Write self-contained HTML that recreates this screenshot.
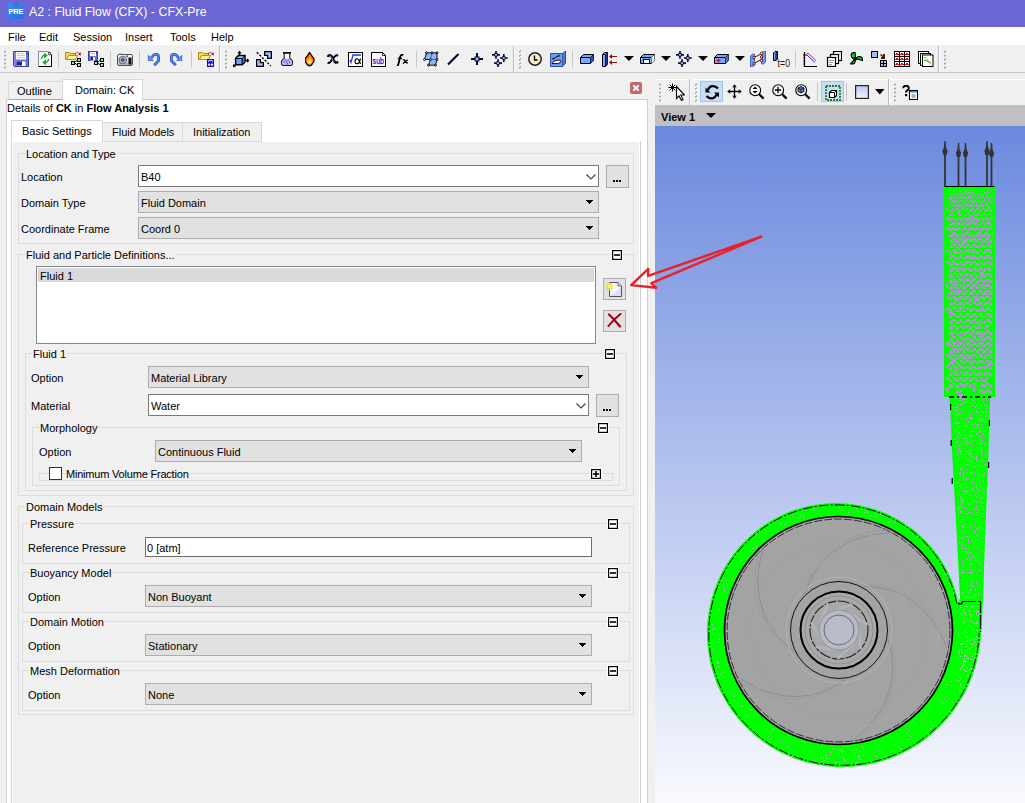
<!DOCTYPE html>
<html><head><meta charset="utf-8">
<style>
*{box-sizing:border-box;margin:0;padding:0}
html,body{width:1025px;height:803px;overflow:hidden;background:#f0f0f0;font-family:"Liberation Sans",sans-serif;font-size:11px;color:#000;position:relative}
.a{position:absolute}
.t{position:absolute;white-space:nowrap;line-height:14px}
#title{left:0;top:0;width:1025px;height:27px;background:#6b66d3}
#menu{left:0;top:27px;width:1025px;height:18px;background:#fff}
#tb{left:0;top:45px;width:1025px;height:28px;background:#f0f0f0;border-bottom:1px solid #c8c8c8}
.gb{position:absolute;border:1px solid #dcdcdc}
.gl{position:absolute;background:#f0f0f0;padding:0 1px 0 1px;white-space:nowrap;line-height:14px}
.cb{position:absolute;background:#e1e1e1;border:1px solid #adadad;height:22px;padding-left:2px;line-height:22px;white-space:nowrap}
.in{position:absolute;background:#fff;border:1px solid #7a7a7a;height:22px;padding-left:2px;line-height:22px;white-space:nowrap}
.dd{position:absolute;width:0;height:0;border-left:5px solid transparent;border-right:5px solid transparent;border-top:5px solid #000}
.btn{position:absolute;background:#e1e1e1;border:1px solid #adadad}
.mi{position:absolute;width:10px;height:10px;border:1px solid #000;background:#fff}
.mi:after{content:"";position:absolute;left:1px;top:3px;width:6px;height:2px;background:#000}
</style></head><body>
<div id="title" class="a">
  <svg class="a" style="left:8px;top:3px" width="16" height="16" viewBox="0 0 16 16"><defs><linearGradient id="pg" x1="0" y1="0" x2="1" y2="1"><stop offset="0" stop-color="#3c8ef0"/><stop offset="1" stop-color="#2a6ee0"/></linearGradient></defs><rect width="16" height="16" fill="url(#pg)"/><path d="M5 0L8 6L11 0Z" fill="#2e6ad8" opacity="0.6"/><text x="0.6" y="11" font-family="Liberation Sans" font-weight="bold" font-size="7.6" fill="#fff" letter-spacing="-0.3">PRE</text></svg>
  <div class="t" style="left:29px;top:4px;font-size:12.4px;color:#fff;line-height:16px">A2 : Fluid Flow (CFX) - CFX-Pre</div>
</div>
<div id="menu" class="a">
  <div class="t" style="left:8px;top:3px">File</div>
  <div class="t" style="left:39px;top:3px">Edit</div>
  <div class="t" style="left:73px;top:3px">Session</div>
  <div class="t" style="left:125px;top:3px">Insert</div>
  <div class="t" style="left:170px;top:3px">Tools</div>
  <div class="t" style="left:211px;top:3px">Help</div>
</div>
<div id="tb" class="a"></div>
<svg class="a" style="left:3px;top:50px" width="3" height="3" shape-rendering="crispEdges"><rect x="2" y="0" width="1" height="1" fill="#c4c4c4"/><rect x="1" y="1" width="2" height="1" fill="#a4a4a4"/><rect x="1" y="2" width="1" height="1" fill="#b8b8b8"/><rect x="0" y="2" width="1" height="1" fill="#fafafa"/></svg><svg class="a" style="left:3px;top:54px" width="3" height="3" shape-rendering="crispEdges"><rect x="2" y="0" width="1" height="1" fill="#c4c4c4"/><rect x="1" y="1" width="2" height="1" fill="#a4a4a4"/><rect x="1" y="2" width="1" height="1" fill="#b8b8b8"/><rect x="0" y="2" width="1" height="1" fill="#fafafa"/></svg><svg class="a" style="left:3px;top:58px" width="3" height="3" shape-rendering="crispEdges"><rect x="2" y="0" width="1" height="1" fill="#c4c4c4"/><rect x="1" y="1" width="2" height="1" fill="#a4a4a4"/><rect x="1" y="2" width="1" height="1" fill="#b8b8b8"/><rect x="0" y="2" width="1" height="1" fill="#fafafa"/></svg><svg class="a" style="left:3px;top:62px" width="3" height="3" shape-rendering="crispEdges"><rect x="2" y="0" width="1" height="1" fill="#c4c4c4"/><rect x="1" y="1" width="2" height="1" fill="#a4a4a4"/><rect x="1" y="2" width="1" height="1" fill="#b8b8b8"/><rect x="0" y="2" width="1" height="1" fill="#fafafa"/></svg><svg class="a" style="left:3px;top:66px" width="3" height="3" shape-rendering="crispEdges"><rect x="2" y="0" width="1" height="1" fill="#c4c4c4"/><rect x="1" y="1" width="2" height="1" fill="#a4a4a4"/><rect x="1" y="2" width="1" height="1" fill="#b8b8b8"/><rect x="0" y="2" width="1" height="1" fill="#fafafa"/></svg>
<svg class="a" style="left:13px;top:51px" width="16" height="16" viewBox="0 0 16 16"><path d="M0.5 0.5H15.5V15.5H1.5L0.5 14.5Z" fill="#6a70d6" stroke="#3442b0" stroke-width="1"/><rect x="1" y="1" width="1.5" height="14" fill="#8a8ee6"/><rect x="3" y="1" width="10" height="7.5" fill="#fff"/><path d="M4 2.5H12M4 4.5H12M4 6.5H12" stroke="#c8c8c8" stroke-width="1" shape-rendering="crispEdges"/><rect x="4" y="10.5" width="8.5" height="4.5" fill="#fff"/><rect x="4" y="10.5" width="5" height="4" fill="#1c2870"/><rect x="13.5" y="1.5" width="1" height="2" fill="#1c2870"/></svg>
<svg class="a" style="left:38px;top:51px" width="14" height="16" viewBox="0 0 14 16"><path d="M0.5 0.5H10L13.5 4V15.5H0.5Z" fill="#f6f6f6" stroke="#000" stroke-width="1"/><path d="M0.5 15.5V0.5H10" stroke="#909090" fill="none" stroke-width="1"/><circle cx="11.6" cy="2.6" r="1.2" fill="#fff" stroke="#000" stroke-width="0.8"/><path d="M3.8 8V6.8Q4.2 4.6 6.5 4.4" stroke="#0e8a80" stroke-width="1.2" fill="none"/><path d="M6 1.8L9.8 4.6L6 7.6Z" fill="#18a818"/><path d="M10.4 8V9.2Q10 11.4 7.6 11.6" stroke="#0e8a80" stroke-width="1.2" fill="none"/><path d="M8 8.6L4.2 11.4L8 14.2Z" fill="#18a818"/></svg>
<div class="a" style="left:58px;top:51px;width:1px;height:17px;background:#c8c8c8"></div>
<svg class="a" style="left:65px;top:51px" width="16" height="16" viewBox="0 0 16 16"><path d="M0.5 1.5H4.5L5.5 2.5H10.5V8.5H0.5Z" fill="#f3d85a" stroke="#b58a10"/><path d="M1.5 8.5L3.5 4.5H12.5L10.5 8.5Z" fill="#fff3a0" stroke="#b58a10"/><path d="M10.3 3Q11.6 0.4 13.8 1.6" stroke="#c41010" stroke-width="1.1" fill="none" stroke-dasharray="1.3 0.7"/><path d="M12.6 3L15.8 1.2L15.6 4.8Z" fill="#b00c0c"/><g transform="translate(0 0)" shape-rendering="crispEdges"><path d="M9.5 11.5L12.5 9M9.5 12L12.5 14" stroke="#fff" stroke-width="2.2" fill="none" shape-rendering="auto"/><path d="M9.5 11.5L12.5 9M9.5 12L12.5 14" stroke="#000" stroke-width="1" fill="none" shape-rendering="auto"/><rect x="6" y="10" width="4" height="4" fill="#000"/><rect x="7" y="11" width="2" height="2" fill="#86f086"/><rect x="12" y="7" width="4" height="4" fill="#000"/><rect x="13" y="8" width="2" height="2" fill="#86f086"/><rect x="12" y="12" width="4" height="4" fill="#000"/><rect x="13" y="13" width="2" height="2" fill="#86f086"/></g></svg>
<svg class="a" style="left:88px;top:51px" width="16" height="16" viewBox="0 0 16 16"><rect x="0.5" y="0.5" width="9" height="9" fill="#6a70d6" stroke="#3442b0"/><rect x="2" y="1" width="6" height="4" fill="#fff"/><path d="M3 2.5H7" stroke="#bbb" stroke-width="1"/><rect x="2.5" y="6" width="4.5" height="3.5" fill="#fff"/><rect x="2.5" y="6" width="2.5" height="3" fill="#1c2870"/><rect x="8" y="1.5" width="1" height="1.5" fill="#1c2870"/><g transform="translate(0 0)" shape-rendering="crispEdges"><path d="M9.5 11.5L12.5 9M9.5 12L12.5 14" stroke="#fff" stroke-width="2.2" fill="none" shape-rendering="auto"/><path d="M9.5 11.5L12.5 9M9.5 12L12.5 14" stroke="#000" stroke-width="1" fill="none" shape-rendering="auto"/><rect x="6" y="10" width="4" height="4" fill="#000"/><rect x="7" y="11" width="2" height="2" fill="#86f086"/><rect x="12" y="7" width="4" height="4" fill="#000"/><rect x="13" y="8" width="2" height="2" fill="#86f086"/><rect x="12" y="12" width="4" height="4" fill="#000"/><rect x="13" y="13" width="2" height="2" fill="#86f086"/></g></svg>
<div class="a" style="left:110px;top:51px;width:1px;height:17px;background:#c8c8c8"></div>
<svg class="a" style="left:117px;top:53px" width="16" height="13" viewBox="0 0 16 13"><rect x="0.5" y="1.5" width="15" height="11" rx="1.5" fill="#d8d8d8" stroke="#505050"/><rect x="1.2" y="2.2" width="13.6" height="2.5" fill="#f4f4f4"/><path d="M1.2 10H14.8V11.8H1.2Z" fill="#b0b0b0"/><circle cx="5.8" cy="7" r="3.8" fill="#c4c4c4" stroke="#606060" stroke-width="0.9"/><circle cx="5.8" cy="7" r="2.4" fill="#e8e8e8" stroke="#808080" stroke-width="0.6"/><circle cx="5.8" cy="7" r="1.4" fill="#2a6ad8" stroke="#102040" stroke-width="0.6"/><rect x="11.5" y="4.5" width="3" height="7" fill="#141414"/><circle cx="10.2" cy="3.2" r="0.9" fill="#1a4ac0"/><rect x="2" y="0.5" width="3" height="1.2" fill="#808080"/></svg>
<div class="a" style="left:139px;top:51px;width:1px;height:17px;background:#c8c8c8"></div>
<svg class="a" style="left:147px;top:53px" width="13" height="13" viewBox="0 0 13 13"><path d="M4.2 5.2L6.6 2.2Q7.6 1.4 9 1.4Q11.6 1.4 11.6 4.4V7.8L7.2 12.2" stroke="#1e4ec8" stroke-width="2.8" fill="none" stroke-linejoin="round"/><path d="M4.2 5.2L6.6 2.2Q7.6 1.4 9 1.4Q11.6 1.4 11.6 4.4V7.8L7.2 12.2" stroke="#5a90f0" stroke-width="1.2" fill="none" stroke-linejoin="round"/><path d="M0.8 1.6V7.9H7Z" fill="#3a72e6"/><path d="M1.6 4V7.2H4.8Z" fill="#6aa2f4"/></svg>
<svg class="a" style="left:170px;top:53px" width="13" height="13" viewBox="0 0 13 13"><g transform="translate(13 0) scale(-1 1)"><path d="M4.2 5.2L6.6 2.2Q7.6 1.4 9 1.4Q11.6 1.4 11.6 4.4V7.8L7.2 12.2" stroke="#1e4ec8" stroke-width="2.8" fill="none" stroke-linejoin="round"/><path d="M4.2 5.2L6.6 2.2Q7.6 1.4 9 1.4Q11.6 1.4 11.6 4.4V7.8L7.2 12.2" stroke="#5a90f0" stroke-width="1.2" fill="none" stroke-linejoin="round"/><path d="M0.8 1.6V7.9H7Z" fill="#3a72e6"/><path d="M1.6 4V7.2H4.8Z" fill="#6aa2f4"/></g></svg>
<div class="a" style="left:191px;top:51px;width:1px;height:17px;background:#c8c8c8"></div>
<svg class="a" style="left:198px;top:51px" width="16" height="16" viewBox="0 0 16 16"><path d="M0.5 1.5H4.5L5.5 2.5H10.5V8.5H0.5Z" fill="#f3d85a" stroke="#b58a10"/><path d="M1.5 8.5L3.5 4.5H12.5L10.5 8.5Z" fill="#fff3a0" stroke="#b58a10"/><path d="M10.3 3Q11.6 0.4 13.8 1.6" stroke="#c41010" stroke-width="1.1" fill="none" stroke-dasharray="1.3 0.7"/><path d="M12.6 3L15.8 1.2L15.6 4.8Z" fill="#b00c0c"/><rect x="9" y="8" width="7" height="8" fill="#0808c8"/><rect x="10.2" y="12.6" width="2" height="2" fill="#fff"/><rect x="13" y="12.6" width="2" height="2" fill="#fff"/><path d="M10.6 11.2V10.2Q10.6 9.2 11.6 9.2Q12.5 9.2 12.5 10.2Q12.5 9.2 13.4 9.2Q14.4 9.2 14.4 10.2V11.2" stroke="#fff" stroke-width="0.9" fill="none"/></svg>
<div class="a" style="left:219px;top:46px;width:1px;height:26px;background:#b9b9b9"></div><div class="a" style="left:220px;top:46px;width:1px;height:26px;background:#fff"></div>
<svg class="a" style="left:224px;top:50px" width="3" height="3" shape-rendering="crispEdges"><rect x="2" y="0" width="1" height="1" fill="#c4c4c4"/><rect x="1" y="1" width="2" height="1" fill="#a4a4a4"/><rect x="1" y="2" width="1" height="1" fill="#b8b8b8"/><rect x="0" y="2" width="1" height="1" fill="#fafafa"/></svg><svg class="a" style="left:224px;top:54px" width="3" height="3" shape-rendering="crispEdges"><rect x="2" y="0" width="1" height="1" fill="#c4c4c4"/><rect x="1" y="1" width="2" height="1" fill="#a4a4a4"/><rect x="1" y="2" width="1" height="1" fill="#b8b8b8"/><rect x="0" y="2" width="1" height="1" fill="#fafafa"/></svg><svg class="a" style="left:224px;top:58px" width="3" height="3" shape-rendering="crispEdges"><rect x="2" y="0" width="1" height="1" fill="#c4c4c4"/><rect x="1" y="1" width="2" height="1" fill="#a4a4a4"/><rect x="1" y="2" width="1" height="1" fill="#b8b8b8"/><rect x="0" y="2" width="1" height="1" fill="#fafafa"/></svg><svg class="a" style="left:224px;top:62px" width="3" height="3" shape-rendering="crispEdges"><rect x="2" y="0" width="1" height="1" fill="#c4c4c4"/><rect x="1" y="1" width="2" height="1" fill="#a4a4a4"/><rect x="1" y="2" width="1" height="1" fill="#b8b8b8"/><rect x="0" y="2" width="1" height="1" fill="#fafafa"/></svg><svg class="a" style="left:224px;top:66px" width="3" height="3" shape-rendering="crispEdges"><rect x="2" y="0" width="1" height="1" fill="#c4c4c4"/><rect x="1" y="1" width="2" height="1" fill="#a4a4a4"/><rect x="1" y="2" width="1" height="1" fill="#b8b8b8"/><rect x="0" y="2" width="1" height="1" fill="#fafafa"/></svg>
<svg class="a" style="left:233px;top:51px" width="16" height="16" viewBox="0 0 16 16"><path d="M2.6 7.4L5.4 4.6H12V11L9.2 13.8H2.6Z" fill="#fff" stroke="#fff" stroke-width="2.4" stroke-linejoin="round"/><path d="M2.6 7.4L5.4 4.6H12V11L9.2 13.8H2.6Z" fill="#6b9cf6" stroke="#000" stroke-width="1.5"/><path d="M2.6 7.4H9.2V13.8M9.2 7.4L12 4.6" stroke="#000" stroke-width="1.2" fill="none"/><path d="M3.5 6.9L5.8 5.4H11L9 6.9Z" fill="#9cc0fa"/><path d="M9.8 7.6L11.3 6V10.6L9.8 12.2Z" fill="#3a72e0"/><path d="M6.5 0V4.5M4.8 1.8H8.2M12 9.5H16M14.6 7.8V11.2M3 13L1.5 14.5" stroke="#000" stroke-width="1.3" fill="none"/><path d="M0 13V16H3Z" fill="#000"/></svg>
<svg class="a" style="left:256px;top:51px" width="16" height="16" viewBox="0 0 16 16"><path d="M8.6 0.6H15.4V7.4H11.6V4.4H8.6Z M0.6 8.6H4.4V11.6H7.4V15.4H0.6Z" fill="#fff" stroke="#fff" stroke-width="2.6"/><path d="M0.8 1.2L14.8 15" stroke="#000" stroke-width="1.3" stroke-dasharray="2.2 1.5"/><path d="M8.6 0.6H15.4V7.4H11.6V4.4H8.6Z" fill="#a4c2f8" stroke="#000" stroke-width="1.3"/><path d="M0.6 8.6H4.4V11.6H7.4V15.4H0.6Z" fill="#a4c2f8" stroke="#000" stroke-width="1.3"/></svg>
<svg class="a" style="left:281px;top:52px" width="12" height="14" viewBox="0 0 12 14"><path d="M3 1.5V6L0.6 9V12.2L2 13.6H10L11.4 12.2V9L9 6V1.5" fill="#fff" stroke="#fff" stroke-width="2.2"/><path d="M3.2 1.5V6.2L0.6 9V12.2L2 13.6H10L11.4 12.2V9L8.8 6.2V1.5" fill="#f8f8ff" stroke="#111" stroke-width="1.1"/><path d="M1.2 9.2L3.2 7H8.8L10.8 9.2V12L9.6 13H2.4L1.2 12Z" fill="#c4b4fa"/><rect x="2" y="0" width="8" height="1.8" fill="#111"/><g fill="#2020e0"><rect x="4" y="7.5" width="1.1" height="1.1"/><rect x="6.6" y="7.6" width="1.1" height="1.1"/><rect x="2.5" y="9.5" width="1.1" height="1.1"/><rect x="5" y="9.6" width="1.1" height="1.1"/><rect x="8" y="9.6" width="1.1" height="1.1"/><rect x="6" y="11.3" width="1.1" height="1.1"/></g></svg>
<svg class="a" style="left:305px;top:52px" width="10" height="15" viewBox="0 0 10 15"><path d="M4.5 0.3L6.5 3.3L9 6.5V9.5L6.5 13.3L4.5 14L2.5 13.3L0 9.5V6.5L2.5 3.5Z" fill="#e42808" stroke="#000" stroke-width="1.1" stroke-linejoin="round"/><path d="M4.7 2.5L6.8 5.5L8 7.5V9.5L6.2 12L4.5 12.5L2.8 12L1.2 9.5V7.5L3 5Z" fill="#ff8a10"/><path d="M5 6L6.5 8.5V10.5L5 12H4L2.5 10.5V9Z" fill="#ffe020"/><path d="M4.6 8.5L5.8 10.2L5 11.8H4L3.4 10.6Z" fill="#fff"/><path d="M3.2 11.8H6L5.2 13.2H3.8Z" fill="#1aa0ff"/></svg>
<svg class="a" style="left:327px;top:54px" width="12" height="10" viewBox="0 0 12 10"><path d="M0.8 3Q1.5 0.8 3.3 1.4Q4.8 2 5.8 4.5Q7 7.8 8.6 8.6Q10 9 11 7.5" stroke="#000" stroke-width="2.3" fill="none"/><path d="M11.2 1.6Q9.5 0.8 8 2.2Q5 5.5 3.3 8Q2.2 9.4 0.6 8.6" stroke="#000" stroke-width="2" fill="none"/><path d="M2.2 1.8Q3.6 1.8 4.6 3.8Q6 7.2 7.6 8.2" stroke="#6a9af5" stroke-width="1" fill="none"/></svg>
<svg class="a" style="left:348px;top:52px" width="15" height="15" viewBox="0 0 15 15"><rect x="0.5" y="0.5" width="14" height="14" fill="#fff" stroke="#000"/><path d="M2 8L3 10.5L5 3H13" stroke="#1a3af0" stroke-width="1.3" fill="none"/><path d="M12.5 6.5Q11 12 9.5 11.5Q7 12 7 9.5Q7 6.5 9.5 7Q11 7.5 12.5 12" stroke="#000" stroke-width="1.2" fill="none"/></svg>
<svg class="a" style="left:371px;top:52px" width="15" height="15" viewBox="0 0 15 15"><path d="M0.5 0.5H11.5L14.5 3.5V14.5H0.5Z" fill="#fff" stroke="#000"/><path d="M11.5 0.5V3.5H14.5" fill="none" stroke="#000" stroke-width="0.8"/><text x="1.6" y="12" font-family="Liberation Sans" font-size="8.5" fill="#1a1af0" textLength="11.5" lengthAdjust="spacingAndGlyphs" stroke="#1a1af0" stroke-width="0.25">sub</text></svg>
<svg class="a" style="left:396px;top:54px" width="13" height="12" viewBox="0 0 13 12"><path d="M7.2 1.2Q6 0.2 4.8 1.5Q4 2.8 3.6 5L2.4 10.2Q2 11.6 0.8 11.4" stroke="#000" stroke-width="1.8" fill="none"/><path d="M1.8 4.4H6" stroke="#000" stroke-width="1.3"/><path d="M6.8 6Q8.2 5 9.2 7.2Q10.2 9.4 11.8 8.6M11.6 5.8Q9.5 7.2 7 9.6" stroke="#000" stroke-width="1.4" fill="none"/></svg>
<div class="a" style="left:416px;top:51px;width:1px;height:17px;background:#c8c8c8"></div>
<svg class="a" style="left:423px;top:51px" width="16" height="16" viewBox="0 0 16 16"><path d="M3.5 1.8L14 1.8L14 8.5L12.5 14.2L5.5 14.2L7.5 8.5L1.5 8.5Z" fill="#90b4f8" stroke="#000" stroke-width="0.9"/><path d="M9 1.8L7.5 8.5H14M7.5 8.5L5.5 14.2" stroke="#2a60e0" stroke-width="0.9" fill="none"/><g fill="#b8d0ff" stroke="#000" stroke-width="0.9"><circle cx="3.5" cy="1.8" r="1"/><circle cx="9" cy="1.8" r="1"/><circle cx="14" cy="1.8" r="1"/><circle cx="1.5" cy="8.5" r="1"/><circle cx="7.5" cy="8.5" r="1"/><circle cx="14" cy="8.5" r="1"/><circle cx="5.5" cy="14.2" r="1"/><circle cx="12.5" cy="14.2" r="1"/></g></svg>
<svg class="a" style="left:447px;top:53px" width="13" height="13" viewBox="0 0 13 13"><path d="M1 11.5L11.5 1" stroke="#0a0a3a" stroke-width="2.2"/></svg>
<svg class="a" style="left:471px;top:53px" width="12" height="12" viewBox="0 0 12 12"><path d="M6 0V12M0 6H12" stroke="#0a0a3a" stroke-width="2"/><rect x="4" y="4" width="4" height="4" fill="#8ab0f0" stroke="#0a0a3a" stroke-width="1"/></svg>
<svg class="a" style="left:492px;top:51px" width="16" height="16" viewBox="0 0 16 16"><path d="M4 -0.20000000000000018V7.8M0 3.8H8" stroke="#0a0a3a" stroke-width="1.7"/><rect x="2.7" y="2.5" width="2.6" height="2.6" fill="#a0c4f8" stroke="#0a0a3a" stroke-width="0.8"/><path d="M11.8 3V11M7.800000000000001 7H15.8" stroke="#0a0a3a" stroke-width="1.7"/><rect x="10.5" y="5.7" width="2.6" height="2.6" fill="#a0c4f8" stroke="#0a0a3a" stroke-width="0.8"/><path d="M6 8.2V16.2M2 12.2H10" stroke="#0a0a3a" stroke-width="1.7"/><rect x="4.7" y="10.899999999999999" width="2.6" height="2.6" fill="#a0c4f8" stroke="#0a0a3a" stroke-width="0.8"/></svg>
<div class="a" style="left:513px;top:46px;width:1px;height:26px;background:#b9b9b9"></div><div class="a" style="left:514px;top:46px;width:1px;height:26px;background:#fff"></div>
<svg class="a" style="left:518px;top:50px" width="3" height="3" shape-rendering="crispEdges"><rect x="2" y="0" width="1" height="1" fill="#c4c4c4"/><rect x="1" y="1" width="2" height="1" fill="#a4a4a4"/><rect x="1" y="2" width="1" height="1" fill="#b8b8b8"/><rect x="0" y="2" width="1" height="1" fill="#fafafa"/></svg><svg class="a" style="left:518px;top:54px" width="3" height="3" shape-rendering="crispEdges"><rect x="2" y="0" width="1" height="1" fill="#c4c4c4"/><rect x="1" y="1" width="2" height="1" fill="#a4a4a4"/><rect x="1" y="2" width="1" height="1" fill="#b8b8b8"/><rect x="0" y="2" width="1" height="1" fill="#fafafa"/></svg><svg class="a" style="left:518px;top:58px" width="3" height="3" shape-rendering="crispEdges"><rect x="2" y="0" width="1" height="1" fill="#c4c4c4"/><rect x="1" y="1" width="2" height="1" fill="#a4a4a4"/><rect x="1" y="2" width="1" height="1" fill="#b8b8b8"/><rect x="0" y="2" width="1" height="1" fill="#fafafa"/></svg><svg class="a" style="left:518px;top:62px" width="3" height="3" shape-rendering="crispEdges"><rect x="2" y="0" width="1" height="1" fill="#c4c4c4"/><rect x="1" y="1" width="2" height="1" fill="#a4a4a4"/><rect x="1" y="2" width="1" height="1" fill="#b8b8b8"/><rect x="0" y="2" width="1" height="1" fill="#fafafa"/></svg><svg class="a" style="left:518px;top:66px" width="3" height="3" shape-rendering="crispEdges"><rect x="2" y="0" width="1" height="1" fill="#c4c4c4"/><rect x="1" y="1" width="2" height="1" fill="#a4a4a4"/><rect x="1" y="2" width="1" height="1" fill="#b8b8b8"/><rect x="0" y="2" width="1" height="1" fill="#fafafa"/></svg>
<svg class="a" style="left:528px;top:52px" width="14" height="14" viewBox="0 0 14 14"><circle cx="7" cy="7" r="6.2" fill="#f4efc8" stroke="#222" stroke-width="1.5"/><path d="M6.5 3.5V8H9.5" stroke="#000" stroke-width="1.3" fill="none"/></svg>
<svg class="a" style="left:550px;top:51px" width="16" height="16" viewBox="0 0 16 16"><path d="M0.5 2.5H12.5L15.5 0V12.5L12.5 15.5H0.5Z" fill="#6a9cf0" stroke="#2a50b0" stroke-width="1"/><path d="M12.5 2.5V15.5" stroke="#2a50b0"/><path d="M12.5 3L15 1V12.2L12.8 14.5Z" fill="#4a78d0"/><path d="M2 12.5Q3 10 6 9.5L10 9Q11.5 10.5 10 12Q6 13 2 12.5Z" fill="#fff" stroke="#000" stroke-width="0.9"/><path d="M3 8L9 4.5M8 4.2L9.3 4.5L9 5.8M4 8.3L2.8 8L3.2 6.8" stroke="#000" stroke-width="0.9" fill="none"/></svg>
<div class="a" style="left:572px;top:51px;width:1px;height:17px;background:#c8c8c8"></div>
<svg class="a" style="left:580px;top:54px" width="14" height="10" viewBox="0 0 14 10"><path d="M0.5 3.5L3.5 0.5H13.5V6.5L10.5 9.5H0.5Z" fill="#7aa8f8" stroke="#000" stroke-width="1"/><path d="M0.5 3.5H10.5V9.5M10.5 3.5L13.5 0.5" stroke="#000" fill="none"/><path d="M10.5 3.5L13.5 0.5V6.5L10.5 9.5Z" fill="#2a50a8"/></svg>
<svg class="a" style="left:602px;top:52px" width="16" height="15" viewBox="0 0 16 15"><path d="M0.5 2.5L2.5 0.5H5.5V12.5L3.5 14.5H0.5Z" fill="#7aa8f8" stroke="#000" stroke-width="1"/><path d="M0.5 2.5H3.5V14.5M3.5 2.5L5.5 0.5" stroke="#000" fill="none"/><path d="M3.5 2.5L5.5 0.5V12.5L3.5 14.5Z" fill="#2a3a80"/><path d="M8 4.5H15M8 10.5H15" stroke="#8a1010" stroke-width="1.2"/><path d="M7 4.5L10 2V7Z M7 10.5L10 8V13Z" fill="#8a1010"/></svg>
<svg class="a" style="left:624px;top:56px" width="10" height="5" viewBox="0 0 10 5"><path d="M0 0H10L5 5Z" fill="#000"/></svg>
<svg class="a" style="left:640px;top:54px" width="15" height="10" viewBox="0 0 15 10"><path d="M0.5 3.5L3.5 0.5H14.5V6.5L11.5 9.5H0.5Z" fill="#7aa8f8" stroke="#000" stroke-width="1"/><path d="M0.5 3.5H11.5V9.5M11.5 3.5L14.5 0.5" stroke="#000" fill="none"/><path d="M11.5 3.5L14.5 0.5V6.5L11.5 9.5Z" fill="#f0f0f0"/><rect x="3.5" y="5.5" width="6" height="4" fill="#fff" stroke="#000"/></svg>
<svg class="a" style="left:661px;top:56px" width="10" height="5" viewBox="0 0 10 5"><path d="M0 0H10L5 5Z" fill="#000"/></svg>
<svg class="a" style="left:676px;top:51px" width="16" height="16" viewBox="0 0 16 16"><path d="M4 -0.20000000000000018V7.8M0 3.8H8" stroke="#0a0a3a" stroke-width="1.7"/><rect x="2.7" y="2.5" width="2.6" height="2.6" fill="#a0c4f8" stroke="#0a0a3a" stroke-width="0.8"/><path d="M11.8 3V11M7.800000000000001 7H15.8" stroke="#0a0a3a" stroke-width="1.7"/><rect x="10.5" y="5.7" width="2.6" height="2.6" fill="#a0c4f8" stroke="#0a0a3a" stroke-width="0.8"/><path d="M6 8.2V16.2M2 12.2H10" stroke="#0a0a3a" stroke-width="1.7"/><rect x="4.7" y="10.899999999999999" width="2.6" height="2.6" fill="#a0c4f8" stroke="#0a0a3a" stroke-width="0.8"/></svg>
<svg class="a" style="left:698px;top:56px" width="10" height="5" viewBox="0 0 10 5"><path d="M0 0H10L5 5Z" fill="#000"/></svg>
<svg class="a" style="left:714px;top:54px" width="15" height="10" viewBox="0 0 15 10"><path d="M0.5 3.5L3.5 0.5H14.5V6.5L11.5 9.5H0.5Z" fill="#7aa8f8" stroke="#000" stroke-width="1"/><path d="M0.5 3.5H11.5V9.5M11.5 3.5L14.5 0.5" stroke="#000" fill="none"/><path d="M11.5 3.5L14.5 0.5V6.5L11.5 9.5Z" fill="#4a70c0"/><path d="M4.5 4.5V8.5M2.5 6.5H6.5" stroke="#e01010" stroke-width="1.3"/></svg>
<svg class="a" style="left:735px;top:56px" width="10" height="5" viewBox="0 0 10 5"><path d="M0 0H10L5 5Z" fill="#000"/></svg>
<svg class="a" style="left:750px;top:51px" width="16" height="16" viewBox="0 0 16 16"><path d="M0.5 5L2.5 3H4.5V14L2.5 16H0.5Z" fill="#6a9cf0" stroke="#2a50b0" stroke-width="0.8"/><path d="M11.5 2L13.5 0H15.5V11L13.5 13H11.5Z" fill="#6a9cf0" stroke="#2a50b0" stroke-width="0.8"/><path d="M3 7L12 2.5M12 8L3 13M12 3V8" stroke="#5a1010" stroke-width="1" fill="none"/><g fill="#fff" stroke="#5a1010" stroke-width="1"><circle cx="4" cy="6.5" r="1.2"/><circle cx="11.5" cy="2.5" r="1.2"/><circle cx="11.5" cy="6" r="1.2"/><circle cx="11.5" cy="9.5" r="1.2"/><circle cx="4" cy="12.8" r="1.2"/></g></svg>
<svg class="a" style="left:773px;top:51px" width="17" height="16" viewBox="0 0 17 16"><path d="M0.5 2L2 0.5H4.5V8L3 9.5H0.5Z" fill="#6a9cf0" stroke="#000" stroke-width="1"/><path d="M3 2V9.5M3 2L4.5 0.5" stroke="#000" stroke-width="0.9" fill="none"/><path d="M3.3 2.3L4.2 1.4V7.8L3.3 8.8Z" fill="#1a2a70"/><text x="4.6" y="16" font-family="Liberation Sans" font-size="11" fill="#4a0808" textLength="12.4" lengthAdjust="spacingAndGlyphs">t=0</text></svg>
<div class="a" style="left:795px;top:51px;width:1px;height:17px;background:#c8c8c8"></div>
<svg class="a" style="left:803px;top:51px" width="15" height="16" viewBox="0 0 15 16"><path d="M1.5 1V15.5H14" stroke="#000" stroke-width="1.2" fill="none"/><path d="M0 4H1.5M0 7H1.5M0 10H1.5M0 13H1.5M4 15.5V17M7 15.5V17M10 15.5V17M13 15.5V17" stroke="#000" stroke-width="0.8"/><path d="M2 4L4 4L12 11.5" stroke="#1a1aff" stroke-width="1" fill="none"/><path d="M2 5L5 2L13 9.5" stroke="#ff1a1a" stroke-width="1" fill="none"/></svg>
<svg class="a" style="left:826px;top:51px" width="16" height="16" viewBox="0 0 16 16"><rect x="7.5" y="0.5" width="8" height="9" fill="#fff" stroke="#000" stroke-width="1.2"/><path d="M9 3.5H14M9 5.5H13M9 7.5H12" stroke="#999" stroke-width="1" shape-rendering="crispEdges"/><rect x="4.5" y="3.5" width="8" height="9" fill="#fff" stroke="#000" stroke-width="1.2"/><path d="M6 6.5H11M6 8.5H10M6 10.5H9" stroke="#999" stroke-width="1" shape-rendering="crispEdges"/><rect x="1.5" y="6.5" width="8" height="9" fill="#fff" stroke="#000" stroke-width="1.2"/><path d="M3 9.5H8M3 11.5H7M3 13.5H6" stroke="#999" stroke-width="1" shape-rendering="crispEdges"/></svg>
<svg class="a" style="left:850px;top:52px" width="13" height="13" viewBox="0 0 13 13"><path d="M5.5 6.5L5.2 0.8Q3 0.2 1.5 1.5Q0.3 4 3 6.5Z" fill="#10d020" stroke="#000" stroke-width="1.1"/><path d="M6 6.8L12.6 8.6Q12.8 6.2 11.2 5Q8.5 3.8 6 6Z" fill="#10d020" stroke="#000" stroke-width="1.1"/><path d="M5 7L0.4 11.8Q2.8 12.6 4.6 11Q5.8 9.2 5 7Z" fill="#10d020" stroke="#000" stroke-width="1.1"/><circle cx="5.3" cy="6.6" r="1.9" fill="#000"/></svg>
<svg class="a" style="left:871px;top:51px" width="16" height="16" viewBox="0 0 16 16" shape-rendering="crispEdges"><rect x="0" y="0" width="7" height="7" fill="#000"/><rect x="1" y="1" width="5" height="5" fill="#a0bef8"/><path d="M9.5 3.5L13 6.5" stroke="#5a1010" stroke-width="1.3" shape-rendering="auto"/><rect x="12" y="3" width="1.5" height="4.5" fill="#5a1010"/><rect x="9.5" y="6" width="4" height="1.5" fill="#5a1010"/><rect x="9" y="9" width="7" height="7" fill="#000"/><rect x="10" y="10" width="2" height="2" fill="#a0bef8"/><rect x="13" y="10" width="2" height="2" fill="#a0bef8"/><rect x="10" y="13" width="2" height="2" fill="#a0bef8"/><rect x="13" y="13" width="2" height="2" fill="#a0bef8"/></svg>
<svg class="a" style="left:894px;top:51px" width="16" height="16" viewBox="0 0 16 16" shape-rendering="crispEdges"><rect x="0" y="0" width="16" height="16" fill="#000"/><rect x="1" y="1" width="4" height="4" fill="#fff"/><rect x="1" y="3" width="4" height="1" fill="#e01010"/><rect x="2" y="2" width="2" height="1" fill="#e01010"/><rect x="1" y="6" width="4" height="4" fill="#fff"/><rect x="1" y="8" width="4" height="1" fill="#e01010"/><rect x="2" y="7" width="2" height="1" fill="#e01010"/><rect x="1" y="11" width="4" height="4" fill="#fff"/><rect x="1" y="13" width="4" height="1" fill="#e01010"/><rect x="2" y="12" width="2" height="1" fill="#e01010"/><rect x="6" y="1" width="4" height="4" fill="#fff"/><rect x="6" y="3" width="4" height="1" fill="#e01010"/><rect x="7" y="2" width="2" height="1" fill="#e01010"/><rect x="6" y="6" width="4" height="4" fill="#fff"/><rect x="6" y="8" width="4" height="1" fill="#e01010"/><rect x="7" y="7" width="2" height="1" fill="#e01010"/><rect x="6" y="11" width="4" height="4" fill="#fff"/><rect x="6" y="13" width="4" height="1" fill="#e01010"/><rect x="7" y="12" width="2" height="1" fill="#e01010"/><rect x="11" y="1" width="4" height="4" fill="#fff"/><rect x="11" y="3" width="4" height="1" fill="#e01010"/><rect x="12" y="2" width="2" height="1" fill="#e01010"/><rect x="11" y="6" width="4" height="4" fill="#fff"/><rect x="11" y="8" width="4" height="1" fill="#e01010"/><rect x="12" y="7" width="2" height="1" fill="#e01010"/><rect x="11" y="11" width="4" height="4" fill="#fff"/><rect x="11" y="13" width="4" height="1" fill="#e01010"/><rect x="12" y="12" width="2" height="1" fill="#e01010"/></svg>
<svg class="a" style="left:918px;top:51px" width="16" height="16" viewBox="0 0 16 16"><rect x="0.5" y="0.5" width="10" height="12" fill="#fff" stroke="#000"/><rect x="2.5" y="2.5" width="10" height="12" fill="#fff" stroke="#000"/><rect x="4.5" y="4" width="10.5" height="11.5" fill="#fff" stroke="#000"/><path d="M6.5 6L12.5 12" stroke="#e01010" stroke-width="1" stroke-dasharray="1.5 0.8"/><path d="M6 9.5H8.5L10 11H11.5L12.5 12.5" stroke="#10b010" stroke-width="1" fill="none"/></svg>
<div class="a" style="left:938px;top:46px;width:1px;height:26px;background:#b9b9b9"></div><div class="a" style="left:939px;top:46px;width:1px;height:26px;background:#fff"></div>
<svg class="a" style="left:943px;top:50px" width="3" height="3" shape-rendering="crispEdges"><rect x="2" y="0" width="1" height="1" fill="#c4c4c4"/><rect x="1" y="1" width="2" height="1" fill="#a4a4a4"/><rect x="1" y="2" width="1" height="1" fill="#b8b8b8"/><rect x="0" y="2" width="1" height="1" fill="#fafafa"/></svg><svg class="a" style="left:943px;top:54px" width="3" height="3" shape-rendering="crispEdges"><rect x="2" y="0" width="1" height="1" fill="#c4c4c4"/><rect x="1" y="1" width="2" height="1" fill="#a4a4a4"/><rect x="1" y="2" width="1" height="1" fill="#b8b8b8"/><rect x="0" y="2" width="1" height="1" fill="#fafafa"/></svg><svg class="a" style="left:943px;top:58px" width="3" height="3" shape-rendering="crispEdges"><rect x="2" y="0" width="1" height="1" fill="#c4c4c4"/><rect x="1" y="1" width="2" height="1" fill="#a4a4a4"/><rect x="1" y="2" width="1" height="1" fill="#b8b8b8"/><rect x="0" y="2" width="1" height="1" fill="#fafafa"/></svg><svg class="a" style="left:943px;top:62px" width="3" height="3" shape-rendering="crispEdges"><rect x="2" y="0" width="1" height="1" fill="#c4c4c4"/><rect x="1" y="1" width="2" height="1" fill="#a4a4a4"/><rect x="1" y="2" width="1" height="1" fill="#b8b8b8"/><rect x="0" y="2" width="1" height="1" fill="#fafafa"/></svg><svg class="a" style="left:943px;top:66px" width="3" height="3" shape-rendering="crispEdges"><rect x="2" y="0" width="1" height="1" fill="#c4c4c4"/><rect x="1" y="1" width="2" height="1" fill="#a4a4a4"/><rect x="1" y="2" width="1" height="1" fill="#b8b8b8"/><rect x="0" y="2" width="1" height="1" fill="#fafafa"/></svg>

<!-- left panel -->
<div class="a" style="left:6px;top:99px;width:642px;height:704px;background:#fff;border-left:1px solid #d0d0d0;border-right:1px solid #d0d0d0;border-top:1px solid #d0d0d0"></div>
<!-- outline tabs -->
<div class="a" style="left:8px;top:81px;width:55px;height:19px;background:#f0f0f0;border:1px solid #d9d9d9;border-bottom:1px solid #a8a8a8"></div>
<div class="t" style="left:17px;top:84px">Outline</div>
<div class="a" style="left:62px;top:79px;width:81px;height:22px;background:#fff;border:1px solid #d9d9d9;border-bottom:none"></div>
<div class="t" style="left:75px;top:83px">Domain: CK</div>
<svg class="a" style="left:630px;top:82px" width="12" height="12" viewBox="0 0 12 12"><rect x="0" y="0" width="12" height="12" rx="2" fill="#bd6b6b"/><path d="M3.3 3.3L8.7 8.7M8.7 3.3L3.3 8.7" stroke="#fff" stroke-width="1.8"/></svg>
<div class="t" style="left:7px;top:101px">Details of <b>CK</b> in <b>Flow Analysis 1</b></div>

<!-- inner tabs -->
<div class="a" style="left:11px;top:141px;width:630px;height:662px;background:#f0f0f0;border-left:1px solid #d0d0d0;border-right:1px solid #d0d0d0;box-shadow:inset 1px 1px 0 #fff,inset -1px 0 0 #fff"></div>
<div class="a" style="left:102px;top:122px;width:81px;height:20px;background:#f0f0f0;border:1px solid #d9d9d9"></div>
<div class="t" style="left:112px;top:125px">Fluid Models</div>
<div class="a" style="left:182px;top:122px;width:80px;height:20px;background:#f0f0f0;border:1px solid #d9d9d9"></div>
<div class="t" style="left:193px;top:125px">Initialization</div>
<div class="a" style="left:11px;top:120px;width:92px;height:22px;background:#fff;border:1px solid #d9d9d9;border-bottom:none"></div>
<div class="t" style="left:22px;top:124px">Basic Settings</div>

<div class="gb" style="left:18px;top:153px;width:616px;height:91px"></div>
<div class="gl" style="left:25px;top:147px">Location and Type</div>
<div class="t" style="left:21px;top:170px">Location</div>
<div class="in" style="left:138px;top:165px;width:461px;height:22px;line-height:22px">B40</div>
<svg class="a" style="left:586px;top:174px" width="10" height="6"><path d="M0.5 0.5L5 5L9.5 0.5" fill="none" stroke="#404040" stroke-width="1.1"/></svg>
<div class="btn" style="left:606px;top:165px;width:23px;height:23px"></div>
<svg class="a" style="left:613px;top:180px" width="9" height="3" shape-rendering="crispEdges"><rect x="0" y="0" width="2" height="2"/><rect x="3" y="0" width="2" height="2" /><rect x="6" y="0" width="2" height="2"/></svg>
<div class="t" style="left:21px;top:196px">Domain Type</div>
<div class="cb" style="left:138px;top:191px;width:461px;height:22px">Fluid Domain</div>
<svg class="a" style="left:586px;top:200px" width="7" height="4" shape-rendering="crispEdges"><rect x="0" y="0" width="7" height="1"/><rect x="1" y="1" width="5" height="1"/><rect x="2" y="2" width="3" height="1"/><rect x="3" y="3" width="1" height="1"/></svg>
<div class="t" style="left:21px;top:222px">Coordinate Frame</div>
<div class="cb" style="left:138px;top:217px;width:461px;height:22px">Coord 0</div>
<svg class="a" style="left:586px;top:226px" width="7" height="4" shape-rendering="crispEdges"><rect x="0" y="0" width="7" height="1"/><rect x="1" y="1" width="5" height="1"/><rect x="2" y="2" width="3" height="1"/><rect x="3" y="3" width="1" height="1"/></svg>
<div class="gb" style="left:18px;top:254px;width:616px;height:242px"></div>
<div class="gl" style="left:25px;top:248px">Fluid and Particle Definitions...</div>
<svg class="a" style="left:611px;top:249px" width="12" height="12"><rect x="0" y="0" width="12" height="12" fill="#fff" opacity="0.9"/><rect x="1.6" y="1.6" width="8.8" height="8.8" fill="#fff" stroke="#000" stroke-width="1.2"/><rect x="3" y="5.2" width="6" height="1.6"/></svg>
<div class="a" style="left:36px;top:266px;width:560px;height:78px;background:#fff;border:1px solid #828790"></div>
<div class="a" style="left:38px;top:268px;width:556px;height:14px;background:#d9d9d9"></div>
<div class="t" style="left:40px;top:269px">Fluid 1</div>
<div class="btn" style="left:603px;top:278px;width:23px;height:22px"></div>
<svg class="a" style="left:605px;top:281px" width="18" height="17" viewBox="0 0 18 17"><path d="M4.5 1.5H13L16.5 5V15.5H4.5Z" fill="#f4f4fc" stroke="#555" stroke-width="1"/><path d="M13 1.5V5H16.5" fill="#d8d8e8" stroke="#555" stroke-width="0.8"/><path d="M5 15H16V6Q12 12 5 15Z" fill="#dcdcf0"/><g stroke="#f0d000" stroke-width="1.2"><path d="M4.5 2V9M1 5.5H8M2 3L7 8M7 3L2 8"/></g><circle cx="4.5" cy="5.5" r="1.8" fill="#fff860"/></svg>
<div class="btn" style="left:603px;top:310px;width:23px;height:22px"></div>
<svg class="a" style="left:607px;top:313px" width="15" height="15" viewBox="0 0 15 15"><path d="M2 1.5Q7 6 13 13.5" stroke="#a0000e" stroke-width="2.2" fill="none" stroke-linecap="round"/><path d="M13.5 1Q7 6 1.5 13" stroke="#a0000e" stroke-width="2" fill="none" stroke-linecap="round"/></svg>
<div class="gb" style="left:25px;top:353px;width:602px;height:138px"></div>
<div class="gl" style="left:32px;top:347px">Fluid 1</div>
<svg class="a" style="left:604px;top:348px" width="12" height="12"><rect x="0" y="0" width="12" height="12" fill="#fff" opacity="0.9"/><rect x="1.6" y="1.6" width="8.8" height="8.8" fill="#fff" stroke="#000" stroke-width="1.2"/><rect x="3" y="5.2" width="6" height="1.6"/></svg>
<div class="t" style="left:31px;top:371px">Option</div>
<div class="cb" style="left:148px;top:366px;width:441px;height:22px">Material Library</div>
<svg class="a" style="left:576px;top:375px" width="7" height="4" shape-rendering="crispEdges"><rect x="0" y="0" width="7" height="1"/><rect x="1" y="1" width="5" height="1"/><rect x="2" y="2" width="3" height="1"/><rect x="3" y="3" width="1" height="1"/></svg>
<div class="t" style="left:31px;top:399px">Material</div>
<div class="in" style="left:148px;top:394px;width:441px;height:22px;line-height:22px">Water</div>
<svg class="a" style="left:576px;top:403px" width="10" height="6"><path d="M0.5 0.5L5 5L9.5 0.5" fill="none" stroke="#404040" stroke-width="1.1"/></svg>
<div class="btn" style="left:596px;top:394px;width:23px;height:23px"></div>
<svg class="a" style="left:603px;top:409px" width="9" height="3" shape-rendering="crispEdges"><rect x="0" y="0" width="2" height="2"/><rect x="3" y="0" width="2" height="2" /><rect x="6" y="0" width="2" height="2"/></svg>
<div class="gb" style="left:32px;top:427px;width:588px;height:59px"></div>
<div class="gl" style="left:39px;top:421px">Morphology</div>
<svg class="a" style="left:597px;top:422px" width="12" height="12"><rect x="0" y="0" width="12" height="12" fill="#fff" opacity="0.9"/><rect x="1.6" y="1.6" width="8.8" height="8.8" fill="#fff" stroke="#000" stroke-width="1.2"/><rect x="3" y="5.2" width="6" height="1.6"/></svg>
<div class="t" style="left:39px;top:445px">Option</div>
<div class="cb" style="left:155px;top:440px;width:427px;height:22px">Continuous Fluid</div>
<svg class="a" style="left:569px;top:449px" width="7" height="4" shape-rendering="crispEdges"><rect x="0" y="0" width="7" height="1"/><rect x="1" y="1" width="5" height="1"/><rect x="2" y="2" width="3" height="1"/><rect x="3" y="3" width="1" height="1"/></svg>
<div class="gb" style="left:39px;top:473px;width:574px;height:8px"></div>
<div class="a" style="left:46px;top:466px;width:147px;height:7px;background:#f0f0f0"></div>
<div class="a" style="left:49px;top:467px;width:13px;height:13px;background:#fff;border:1px solid #333"></div>
<div class="t" style="left:66px;top:467px;letter-spacing:-0.2px">Minimum Volume Fraction</div>
<svg class="a" style="left:590px;top:468px" width="12" height="12"><rect x="0" y="0" width="12" height="12" fill="#fff" opacity="0.9"/><rect x="1.6" y="1.6" width="8.8" height="8.8" fill="#fff" stroke="#000" stroke-width="1.2"/><rect x="3" y="5.2" width="6" height="1.6"/><rect x="5.2" y="3" width="1.6" height="6"/></svg>
<div class="gb" style="left:18px;top:506px;width:616px;height:209px"></div>
<div class="gl" style="left:25px;top:500px">Domain Models</div>
<div class="gb" style="left:22px;top:523px;width:608px;height:41px"></div>
<div class="gl" style="left:29px;top:517px">Pressure</div>
<svg class="a" style="left:607px;top:518px" width="12" height="12"><rect x="0" y="0" width="12" height="12" fill="#fff" opacity="0.9"/><rect x="1.6" y="1.6" width="8.8" height="8.8" fill="#fff" stroke="#000" stroke-width="1.2"/><rect x="3" y="5.2" width="6" height="1.6"/></svg>
<div class="t" style="left:28px;top:541px">Reference Pressure</div>
<div class="in" style="left:145px;top:537px;width:447px;height:20px;line-height:20px;padding-left:1px;border-color:#6e6e6e">0 [atm]</div>
<div class="gb" style="left:22px;top:572px;width:608px;height:41px"></div>
<div class="gl" style="left:29px;top:566px">Buoyancy Model</div>
<svg class="a" style="left:607px;top:567px" width="12" height="12"><rect x="0" y="0" width="12" height="12" fill="#fff" opacity="0.9"/><rect x="1.6" y="1.6" width="8.8" height="8.8" fill="#fff" stroke="#000" stroke-width="1.2"/><rect x="3" y="5.2" width="6" height="1.6"/></svg>
<div class="t" style="left:28px;top:590px">Option</div>
<div class="cb" style="left:145px;top:585px;width:447px;height:22px">Non Buoyant</div>
<svg class="a" style="left:579px;top:594px" width="7" height="4" shape-rendering="crispEdges"><rect x="0" y="0" width="7" height="1"/><rect x="1" y="1" width="5" height="1"/><rect x="2" y="2" width="3" height="1"/><rect x="3" y="3" width="1" height="1"/></svg>
<div class="gb" style="left:22px;top:621px;width:608px;height:41px"></div>
<div class="gl" style="left:29px;top:615px">Domain Motion</div>
<svg class="a" style="left:607px;top:616px" width="12" height="12"><rect x="0" y="0" width="12" height="12" fill="#fff" opacity="0.9"/><rect x="1.6" y="1.6" width="8.8" height="8.8" fill="#fff" stroke="#000" stroke-width="1.2"/><rect x="3" y="5.2" width="6" height="1.6"/></svg>
<div class="t" style="left:28px;top:639px">Option</div>
<div class="cb" style="left:145px;top:634px;width:447px;height:22px">Stationary</div>
<svg class="a" style="left:579px;top:643px" width="7" height="4" shape-rendering="crispEdges"><rect x="0" y="0" width="7" height="1"/><rect x="1" y="1" width="5" height="1"/><rect x="2" y="2" width="3" height="1"/><rect x="3" y="3" width="1" height="1"/></svg>
<div class="gb" style="left:22px;top:670px;width:608px;height:41px"></div>
<div class="gl" style="left:29px;top:664px">Mesh Deformation</div>
<svg class="a" style="left:607px;top:665px" width="12" height="12"><rect x="0" y="0" width="12" height="12" fill="#fff" opacity="0.9"/><rect x="1.6" y="1.6" width="8.8" height="8.8" fill="#fff" stroke="#000" stroke-width="1.2"/><rect x="3" y="5.2" width="6" height="1.6"/></svg>
<div class="t" style="left:28px;top:688px">Option</div>
<div class="cb" style="left:145px;top:683px;width:447px;height:22px">None</div>
<svg class="a" style="left:579px;top:692px" width="7" height="4" shape-rendering="crispEdges"><rect x="0" y="0" width="7" height="1"/><rect x="1" y="1" width="5" height="1"/><rect x="2" y="2" width="3" height="1"/><rect x="3" y="3" width="1" height="1"/></svg>
<!-- right side -->
<div class="a" style="left:655px;top:78px;width:370px;height:27px;background:#f0f0f0"></div>
<div class="a" style="left:655px;top:79px;width:370px;height:1px;background:#fff"></div>
<svg class="a" style="left:658px;top:83px" width="3" height="3" shape-rendering="crispEdges"><rect x="2" y="0" width="1" height="1" fill="#c4c4c4"/><rect x="1" y="1" width="2" height="1" fill="#a4a4a4"/><rect x="1" y="2" width="1" height="1" fill="#b8b8b8"/><rect x="0" y="2" width="1" height="1" fill="#fafafa"/></svg><svg class="a" style="left:658px;top:87px" width="3" height="3" shape-rendering="crispEdges"><rect x="2" y="0" width="1" height="1" fill="#c4c4c4"/><rect x="1" y="1" width="2" height="1" fill="#a4a4a4"/><rect x="1" y="2" width="1" height="1" fill="#b8b8b8"/><rect x="0" y="2" width="1" height="1" fill="#fafafa"/></svg><svg class="a" style="left:658px;top:91px" width="3" height="3" shape-rendering="crispEdges"><rect x="2" y="0" width="1" height="1" fill="#c4c4c4"/><rect x="1" y="1" width="2" height="1" fill="#a4a4a4"/><rect x="1" y="2" width="1" height="1" fill="#b8b8b8"/><rect x="0" y="2" width="1" height="1" fill="#fafafa"/></svg><svg class="a" style="left:658px;top:95px" width="3" height="3" shape-rendering="crispEdges"><rect x="2" y="0" width="1" height="1" fill="#c4c4c4"/><rect x="1" y="1" width="2" height="1" fill="#a4a4a4"/><rect x="1" y="2" width="1" height="1" fill="#b8b8b8"/><rect x="0" y="2" width="1" height="1" fill="#fafafa"/></svg><svg class="a" style="left:658px;top:99px" width="3" height="3" shape-rendering="crispEdges"><rect x="2" y="0" width="1" height="1" fill="#c4c4c4"/><rect x="1" y="1" width="2" height="1" fill="#a4a4a4"/><rect x="1" y="2" width="1" height="1" fill="#b8b8b8"/><rect x="0" y="2" width="1" height="1" fill="#fafafa"/></svg>
<svg class="a" style="left:668px;top:83px" width="17" height="18" viewBox="0 0 17 18"><path d="M4.5 0.5V8.5M0.5 4.5H8.5M1.7 1.7L7.3 7.3M7.3 1.7L1.7 7.3" stroke="#000" stroke-width="1"/><path d="M8.5 3.5V15.5L11 13L13.5 17.5L15 16.5L12.8 12H16.5Z" fill="#fff" stroke="#000" stroke-width="1.1" stroke-linejoin="miter"/></svg>
<div class="a" style="left:689px;top:79px;width:1px;height:26px;background:#b9b9b9"></div><div class="a" style="left:690px;top:79px;width:1px;height:26px;background:#fff"></div>
<svg class="a" style="left:694px;top:83px" width="3" height="3" shape-rendering="crispEdges"><rect x="2" y="0" width="1" height="1" fill="#c4c4c4"/><rect x="1" y="1" width="2" height="1" fill="#a4a4a4"/><rect x="1" y="2" width="1" height="1" fill="#b8b8b8"/><rect x="0" y="2" width="1" height="1" fill="#fafafa"/></svg><svg class="a" style="left:694px;top:87px" width="3" height="3" shape-rendering="crispEdges"><rect x="2" y="0" width="1" height="1" fill="#c4c4c4"/><rect x="1" y="1" width="2" height="1" fill="#a4a4a4"/><rect x="1" y="2" width="1" height="1" fill="#b8b8b8"/><rect x="0" y="2" width="1" height="1" fill="#fafafa"/></svg><svg class="a" style="left:694px;top:91px" width="3" height="3" shape-rendering="crispEdges"><rect x="2" y="0" width="1" height="1" fill="#c4c4c4"/><rect x="1" y="1" width="2" height="1" fill="#a4a4a4"/><rect x="1" y="2" width="1" height="1" fill="#b8b8b8"/><rect x="0" y="2" width="1" height="1" fill="#fafafa"/></svg><svg class="a" style="left:694px;top:95px" width="3" height="3" shape-rendering="crispEdges"><rect x="2" y="0" width="1" height="1" fill="#c4c4c4"/><rect x="1" y="1" width="2" height="1" fill="#a4a4a4"/><rect x="1" y="2" width="1" height="1" fill="#b8b8b8"/><rect x="0" y="2" width="1" height="1" fill="#fafafa"/></svg><svg class="a" style="left:694px;top:99px" width="3" height="3" shape-rendering="crispEdges"><rect x="2" y="0" width="1" height="1" fill="#c4c4c4"/><rect x="1" y="1" width="2" height="1" fill="#a4a4a4"/><rect x="1" y="2" width="1" height="1" fill="#b8b8b8"/><rect x="0" y="2" width="1" height="1" fill="#fafafa"/></svg>
<div class="a" style="left:700px;top:81px;width:23px;height:21px;background:#c6def5;border:1px solid #99c9f2"></div>
<svg class="a" style="left:705px;top:85px" width="15" height="15" viewBox="0 0 15 15"><path d="M13 3.5Q10.5 0.8 7 1.2Q4 1.8 3 5" stroke="#000" stroke-width="2.2" fill="none"/><path d="M0.5 2.5V7.5H5.5Z" fill="#000"/><path d="M1.5 11Q4 13.8 7.5 13.3Q10.5 12.8 11.5 9.5" stroke="#000" stroke-width="2.2" fill="none"/><path d="M14 12.5V7.5H9Z" fill="#000"/></svg>
<svg class="a" style="left:727px;top:84px" width="15" height="15" viewBox="0 0 15 15"><path d="M7.5 2V13M2 7.5H13" stroke="#000" stroke-width="1.3"/><path d="M7.5 0.2L5.3 3.2H9.7Z M7.5 14.8L5.3 11.8H9.7Z M0.2 7.5L3.2 5.3V9.7Z M14.8 7.5L11.8 5.3V9.7Z" fill="#000"/></svg>
<svg class="a" style="left:749px;top:84px" width="16" height="16" viewBox="0 0 16 16"><circle cx="6.2" cy="6.2" r="5.4" fill="#fff" stroke="#000" stroke-width="1.1"/><path d="M10 10L14.6 14.6" stroke="#000" stroke-width="2.2"/><path d="M6 2.5L3.5 5H8.5Z M6 9.5L3.5 7H8.5Z" fill="#000"/></svg>
<svg class="a" style="left:772px;top:84px" width="16" height="16" viewBox="0 0 16 16"><circle cx="6.2" cy="6.2" r="5.4" fill="#fff" stroke="#000" stroke-width="1.1"/><path d="M10 10L14.6 14.6" stroke="#000" stroke-width="2.2"/><path d="M6 2.8V9.2M2.8 6H9.2" stroke="#000" stroke-width="1.3"/></svg>
<svg class="a" style="left:795px;top:84px" width="16" height="16" viewBox="0 0 16 16"><circle cx="6.2" cy="6.2" r="5.4" fill="#fff" stroke="#000" stroke-width="1.1"/><path d="M10 10L14.6 14.6" stroke="#000" stroke-width="2.2"/><path d="M3 4L6 2.5L9 4V7.5L6 9L3 7.5Z" fill="#5a8ae8" stroke="#000" stroke-width="0.9"/><path d="M3 4L6 5.5L9 4M6 5.5V9" stroke="#000" stroke-width="0.8" fill="none"/></svg>
<div class="a" style="left:817px;top:83px;width:1px;height:18px;background:#c8c8c8"></div>
<div class="a" style="left:821px;top:81px;width:23px;height:21px;background:#c6def5;border:1px solid #99c9f2"></div>
<svg class="a" style="left:825px;top:85px" width="16" height="16" viewBox="0 0 16 16"><rect x="1" y="1" width="14" height="14" fill="none" stroke="#087a08" stroke-width="1.8" stroke-dasharray="1.8 1.2"/><path d="M4.5 7.5L6.5 5.5H11.5V10.5L9.5 12.5H4.5Z" fill="#fff" stroke="#000" stroke-width="1.2"/><path d="M4.5 7.5H9.5V12.5M9.5 7.5L11.5 5.5" stroke="#000" stroke-width="1" fill="none"/></svg>
<div class="a" style="left:846px;top:83px;width:1px;height:18px;background:#c8c8c8"></div>
<svg class="a" style="left:855px;top:85px" width="14" height="14" viewBox="0 0 14 14"><defs><linearGradient id="sqg" x1="0" y1="0" x2="0" y2="1"><stop offset="0" stop-color="#b8c8f0"/><stop offset="1" stop-color="#f4f6fe"/></linearGradient></defs><rect x="0.6" y="0.6" width="12.8" height="12.8" fill="url(#sqg)" stroke="#222" stroke-width="1.2"/></svg>
<svg class="a" style="left:875px;top:89px" width="10" height="6" viewBox="0 0 10 6"><path d="M0 0H9.5L4.75 5.5Z" fill="#000"/></svg>
<div class="a" style="left:888px;top:79px;width:1px;height:26px;background:#b9b9b9"></div><div class="a" style="left:889px;top:79px;width:1px;height:26px;background:#fff"></div>
<svg class="a" style="left:893px;top:83px" width="3" height="3" shape-rendering="crispEdges"><rect x="2" y="0" width="1" height="1" fill="#c4c4c4"/><rect x="1" y="1" width="2" height="1" fill="#a4a4a4"/><rect x="1" y="2" width="1" height="1" fill="#b8b8b8"/><rect x="0" y="2" width="1" height="1" fill="#fafafa"/></svg><svg class="a" style="left:893px;top:87px" width="3" height="3" shape-rendering="crispEdges"><rect x="2" y="0" width="1" height="1" fill="#c4c4c4"/><rect x="1" y="1" width="2" height="1" fill="#a4a4a4"/><rect x="1" y="2" width="1" height="1" fill="#b8b8b8"/><rect x="0" y="2" width="1" height="1" fill="#fafafa"/></svg><svg class="a" style="left:893px;top:91px" width="3" height="3" shape-rendering="crispEdges"><rect x="2" y="0" width="1" height="1" fill="#c4c4c4"/><rect x="1" y="1" width="2" height="1" fill="#a4a4a4"/><rect x="1" y="2" width="1" height="1" fill="#b8b8b8"/><rect x="0" y="2" width="1" height="1" fill="#fafafa"/></svg><svg class="a" style="left:893px;top:95px" width="3" height="3" shape-rendering="crispEdges"><rect x="2" y="0" width="1" height="1" fill="#c4c4c4"/><rect x="1" y="1" width="2" height="1" fill="#a4a4a4"/><rect x="1" y="2" width="1" height="1" fill="#b8b8b8"/><rect x="0" y="2" width="1" height="1" fill="#fafafa"/></svg><svg class="a" style="left:893px;top:99px" width="3" height="3" shape-rendering="crispEdges"><rect x="2" y="0" width="1" height="1" fill="#c4c4c4"/><rect x="1" y="1" width="2" height="1" fill="#a4a4a4"/><rect x="1" y="2" width="1" height="1" fill="#b8b8b8"/><rect x="0" y="2" width="1" height="1" fill="#fafafa"/></svg>
<svg class="a" style="left:902px;top:85px" width="16" height="15" viewBox="0 0 16 15"><path d="M1.3 3.2Q1.3 0.8 4 0.8Q6.8 0.8 6.8 3.2Q6.8 4.6 5 5.6Q4 6.2 4 7.6" stroke="#000" stroke-width="2" fill="none"/><rect x="3" y="9" width="2.2" height="2.2" fill="#000"/><rect x="7.5" y="5.5" width="8" height="9" fill="#fff" stroke="#000" stroke-width="1.1"/><rect x="8" y="6" width="7" height="1.6" fill="#3a8ae8"/><path d="M9.5 10H13.5M9.5 12H13.5" stroke="#555" stroke-width="0.9"/></svg>
<div class="a" style="left:655px;top:105px;width:370px;height:21px;background:#c0c0c0"></div>
<div class="t" style="left:661px;top:110px;font-weight:bold">View 1</div>
<div class="dd" style="left:706px;top:113px"></div>
<svg class="a" style="left:655px;top:126px" width="370" height="677" viewBox="0 0 370 677">
<defs><linearGradient id="bg" x1="0" y1="0" x2="0" y2="1"><stop offset="0" stop-color="#6b89de"/><stop offset="1" stop-color="#f9fafe"/></linearGradient><clipPath id="vc"><path d="M303.00 477.00 L302.55 472.68 L301.49 468.53 L300.29 464.41 L298.94 460.34 L297.45 456.31 L295.82 452.33 L294.05 448.41 L292.14 444.55 L290.10 440.75 L287.92 437.03 L285.61 433.38 L283.18 429.81 L280.61 426.32 L277.93 422.92 L275.13 419.62 L272.21 416.41 L269.17 413.30 L266.03 410.30 L262.78 407.41 L259.43 404.62 L255.98 401.96 L252.44 399.42 L248.80 396.99 L245.09 394.70 L241.29 392.53 L237.41 390.50 L233.46 388.60 L229.44 386.84 L225.36 385.22 L221.23 383.74 L217.04 382.41 L212.80 381.22 L208.52 380.18 L204.20 379.28 L199.85 378.54 L195.47 377.95 L191.07 377.52 L186.66 377.23 L182.23 377.11 L177.80 377.13 L173.36 377.31 L168.93 377.65 L164.52 378.14 L160.11 378.79 L155.73 379.59 L151.38 380.54 L147.06 381.64 L142.77 382.90 L138.53 384.31 L134.34 385.86 L130.20 387.57 L126.12 389.41 L122.10 391.40 L118.15 393.54 L114.27 395.81 L110.48 398.21 L106.76 400.75 L103.13 403.42 L99.60 406.22 L96.16 409.14 L92.83 412.19 L89.59 415.35 L86.47 418.62 L83.46 422.01 L80.57 425.50 L77.81 429.09 L75.16 432.78 L72.65 436.56 L70.26 440.43 L68.01 444.39 L65.90 448.43 L63.93 452.54 L62.10 456.72 L60.42 460.96 L58.88 465.27 L57.50 469.63 L56.27 474.04 L55.19 478.49 L54.26 482.99 L53.50 487.51 L52.89 492.07 L52.44 496.64 L52.15 501.24 L52.02 505.84 L52.05 510.45 L52.25 515.06 L52.60 519.67 L53.12 524.26 L53.79 528.84 L54.63 533.39 L55.62 537.92 L56.78 542.41 L58.09 546.86 L59.55 551.27 L61.18 555.63 L62.95 559.93 L64.87 564.17 L66.95 568.35 L69.17 572.45 L71.53 576.48 L74.04 580.43 L76.68 584.28 L79.46 588.05 L82.37 591.72 L85.41 595.29 L88.58 598.76 L91.87 602.11 L95.27 605.35 L98.79 608.48 L102.42 611.48 L106.16 614.35 L109.99 617.09 L113.93 619.70 L117.95 622.18 L122.07 624.51 L126.26 626.70 L130.53 628.75 L134.88 630.64 L139.29 632.39 L143.77 633.98 L148.30 635.41 L152.88 636.69 L157.51 637.80 L162.17 638.76 L166.88 639.55 L171.61 640.18 L176.36 640.64 L181.13 640.93 L185.91 641.06 L190.70 641.03 L195.49 640.82 L200.27 640.45 L205.04 639.91 L209.79 639.20 L214.52 638.33 L219.22 637.29 L223.88 636.09 L228.50 634.73 L233.08 633.20 L237.60 631.51 L242.07 629.67 L246.47 627.66 L250.80 625.51 L255.06 623.20 L259.24 620.74 L263.33 618.14 L267.33 615.39 L271.24 612.50 L275.05 609.48 L278.75 606.32 L282.34 603.03 L285.82 599.61 L289.18 596.08 L292.42 592.42 L295.53 588.65 L298.50 584.77 L301.35 580.79 L304.05 576.71 L306.62 572.53 L309.03 568.26 L311.30 563.90 L313.42 559.47 L315.38 554.96 L317.19 550.38 L318.83 545.74 L320.32 541.04 L321.64 536.28 L322.79 531.48 L323.78 526.64 L324.59 521.76 L325.24 516.85 L325.71 511.92 L326.02 506.97 L326.50 504.00 L328.00 474.00 L330.00 414.00 L333.50 324.00 L335.00 276.00 L335.00 271.00 L340.00 271.00 L340.00 60.00 L289.00 60.00 L289.00 271.00 L294.00 271.00 L295.00 276.00 L297.00 324.00 L302.00 414.00 L305.00 472.00 Z"/></clipPath></defs>
<rect x="0" y="0" width="370" height="677" fill="url(#bg)"/>
<path d="M303.00 477.00 L302.55 472.68 L301.49 468.53 L300.29 464.41 L298.94 460.34 L297.45 456.31 L295.82 452.33 L294.05 448.41 L292.14 444.55 L290.10 440.75 L287.92 437.03 L285.61 433.38 L283.18 429.81 L280.61 426.32 L277.93 422.92 L275.13 419.62 L272.21 416.41 L269.17 413.30 L266.03 410.30 L262.78 407.41 L259.43 404.62 L255.98 401.96 L252.44 399.42 L248.80 396.99 L245.09 394.70 L241.29 392.53 L237.41 390.50 L233.46 388.60 L229.44 386.84 L225.36 385.22 L221.23 383.74 L217.04 382.41 L212.80 381.22 L208.52 380.18 L204.20 379.28 L199.85 378.54 L195.47 377.95 L191.07 377.52 L186.66 377.23 L182.23 377.11 L177.80 377.13 L173.36 377.31 L168.93 377.65 L164.52 378.14 L160.11 378.79 L155.73 379.59 L151.38 380.54 L147.06 381.64 L142.77 382.90 L138.53 384.31 L134.34 385.86 L130.20 387.57 L126.12 389.41 L122.10 391.40 L118.15 393.54 L114.27 395.81 L110.48 398.21 L106.76 400.75 L103.13 403.42 L99.60 406.22 L96.16 409.14 L92.83 412.19 L89.59 415.35 L86.47 418.62 L83.46 422.01 L80.57 425.50 L77.81 429.09 L75.16 432.78 L72.65 436.56 L70.26 440.43 L68.01 444.39 L65.90 448.43 L63.93 452.54 L62.10 456.72 L60.42 460.96 L58.88 465.27 L57.50 469.63 L56.27 474.04 L55.19 478.49 L54.26 482.99 L53.50 487.51 L52.89 492.07 L52.44 496.64 L52.15 501.24 L52.02 505.84 L52.05 510.45 L52.25 515.06 L52.60 519.67 L53.12 524.26 L53.79 528.84 L54.63 533.39 L55.62 537.92 L56.78 542.41 L58.09 546.86 L59.55 551.27 L61.18 555.63 L62.95 559.93 L64.87 564.17 L66.95 568.35 L69.17 572.45 L71.53 576.48 L74.04 580.43 L76.68 584.28 L79.46 588.05 L82.37 591.72 L85.41 595.29 L88.58 598.76 L91.87 602.11 L95.27 605.35 L98.79 608.48 L102.42 611.48 L106.16 614.35 L109.99 617.09 L113.93 619.70 L117.95 622.18 L122.07 624.51 L126.26 626.70 L130.53 628.75 L134.88 630.64 L139.29 632.39 L143.77 633.98 L148.30 635.41 L152.88 636.69 L157.51 637.80 L162.17 638.76 L166.88 639.55 L171.61 640.18 L176.36 640.64 L181.13 640.93 L185.91 641.06 L190.70 641.03 L195.49 640.82 L200.27 640.45 L205.04 639.91 L209.79 639.20 L214.52 638.33 L219.22 637.29 L223.88 636.09 L228.50 634.73 L233.08 633.20 L237.60 631.51 L242.07 629.67 L246.47 627.66 L250.80 625.51 L255.06 623.20 L259.24 620.74 L263.33 618.14 L267.33 615.39 L271.24 612.50 L275.05 609.48 L278.75 606.32 L282.34 603.03 L285.82 599.61 L289.18 596.08 L292.42 592.42 L295.53 588.65 L298.50 584.77 L301.35 580.79 L304.05 576.71 L306.62 572.53 L309.03 568.26 L311.30 563.90 L313.42 559.47 L315.38 554.96 L317.19 550.38 L318.83 545.74 L320.32 541.04 L321.64 536.28 L322.79 531.48 L323.78 526.64 L324.59 521.76 L325.24 516.85 L325.71 511.92 L326.02 506.97 L326.50 504.00 L328.00 474.00 L330.00 414.00 L333.50 324.00 L335.00 276.00 L335.00 271.00 L340.00 271.00 L340.00 60.00 L289.00 60.00 L289.00 271.00 L294.00 271.00 L295.00 276.00 L297.00 324.00 L302.00 414.00 L305.00 472.00 Z" fill="#00fe00"/>
<g clip-path="url(#vc)" fill="#a49cc4" shape-rendering="crispEdges"><path d="M293.0 65.6 L295.3 65.5 L294.3 63.1Z"/><path d="M295.2 62.6 L297.4 62.9 L296.7 64.8Z"/><path d="M297.8 65.6 L299.7 65.9 L298.3 63.7Z"/><path d="M299.1 62.8 L302.1 62.7 L300.7 65.2Z"/><path d="M301.1 65.3 L303.5 65.6 L302.5 63.4Z"/><path d="M303.5 63.2 L305.9 62.9 L304.7 64.9Z"/><path d="M305.2 65.8 L307.5 65.4 L306.8 63.2Z"/><path d="M307.7 63.3 L309.9 63.3 L308.6 65.2Z"/><path d="M309.5 65.7 L312.3 65.5 L310.9 63.2Z"/><path d="M312.1 63.2 L313.8 63.0 L312.9 64.7Z"/><path d="M313.4 65.2 L316.1 65.3 L314.6 63.5Z"/><path d="M315.6 63.0 L318.3 63.1 L317.1 64.9Z"/><path d="M317.9 65.7 L319.6 65.3 L318.6 63.3Z"/><path d="M319.5 62.7 L321.9 62.9 L320.9 65.3Z"/><path d="M321.9 65.6 L323.6 65.7 L323.0 63.9Z"/><path d="M323.6 62.6 L326.3 62.6 L324.6 64.9Z"/><path d="M325.4 65.1 L327.7 65.1 L326.7 63.2Z"/><path d="M327.5 62.9 L329.8 63.0 L328.6 65.2Z"/><path d="M329.7 65.3 L331.8 65.4 L330.8 63.7Z"/><path d="M332.3 63.2 L333.7 63.2 L332.7 64.9Z"/><path d="M334.1 65.3 L336.0 65.2 L335.2 63.6Z"/><path d="M291.5 66.8 L294.2 66.7 L292.8 69.0Z"/><path d="M293.4 68.8 L295.3 68.9 L294.4 67.3Z"/><path d="M295.9 66.8 L298.5 66.4 L296.6 68.6Z"/><path d="M297.6 69.6 L300.5 69.3 L299.0 67.1Z"/><path d="M300.1 66.8 L302.5 66.5 L300.8 69.0Z"/><path d="M302.2 69.2 L304.4 69.5 L303.3 66.6Z"/><path d="M304.3 66.8 L306.2 66.9 L305.6 68.9Z"/><path d="M305.8 69.0 L309.0 69.4 L307.4 67.3Z"/><path d="M308.4 66.4 L310.5 66.4 L309.3 68.8Z"/><path d="M309.9 69.5 L312.6 69.3 L311.5 67.3Z"/><path d="M312.3 66.4 L315.1 66.1 L313.6 68.6Z"/><path d="M314.3 69.2 L317.2 69.3 L315.7 67.1Z"/><path d="M316.3 66.5 L318.9 66.4 L318.0 68.7Z"/><path d="M319.2 69.1 L321.4 69.2 L320.1 67.2Z"/><path d="M320.9 66.8 L323.6 66.8 L322.5 68.5Z"/><path d="M323.2 68.9 L325.3 69.2 L323.9 66.7Z"/><path d="M325.5 66.9 L327.2 66.8 L326.5 68.3Z"/><path d="M326.9 69.6 L329.7 69.3 L328.8 67.2Z"/><path d="M329.4 66.4 L331.6 66.4 L330.7 68.3Z"/><path d="M331.1 69.1 L334.0 69.3 L332.4 67.5Z"/><path d="M333.2 66.3 L335.6 66.7 L334.6 68.4Z"/><path d="M293.0 73.3 L296.1 73.2 L294.4 70.4Z"/><path d="M295.1 70.5 L298.5 70.3 L296.6 73.0Z"/><path d="M297.8 72.9 L300.6 73.3 L299.0 70.4Z"/><path d="M299.7 70.0 L302.2 70.0 L301.1 72.3Z"/><path d="M302.2 72.7 L304.7 72.6 L303.4 70.4Z"/><path d="M304.2 70.1 L307.6 69.9 L306.0 72.5Z"/><path d="M306.6 73.1 L309.5 73.4 L307.9 71.0Z"/><path d="M308.7 70.1 L311.2 70.0 L309.8 72.8Z"/><path d="M310.6 73.4 L314.2 73.3 L312.2 70.4Z"/><path d="M312.9 70.1 L315.8 70.5 L314.9 72.7Z"/><path d="M315.2 73.0 L317.8 73.0 L316.8 70.6Z"/><path d="M317.2 70.0 L320.0 70.1 L318.6 72.2Z"/><path d="M320.0 73.1 L322.9 73.2 L321.5 71.0Z"/><path d="M322.6 70.2 L324.9 70.3 L323.3 72.7Z"/><path d="M324.6 73.2 L326.6 73.0 L325.7 71.1Z"/><path d="M326.6 70.4 L329.5 70.2 L327.8 72.3Z"/><path d="M328.4 73.3 L331.5 73.2 L330.2 70.8Z"/><path d="M331.4 70.4 L333.6 70.3 L332.5 72.1Z"/><path d="M332.8 73.0 L336.1 72.9 L334.7 71.1Z"/><path d="M335.4 70.2 L338.5 70.2 L336.9 72.3Z"/><path d="M293.5 76.7 L295.8 76.8 L294.9 74.8Z"/><path d="M295.9 74.0 L298.5 73.9 L297.4 76.2Z"/><path d="M297.5 77.2 L301.3 77.5 L299.4 74.3Z"/><path d="M300.1 74.1 L302.8 74.2 L302.0 76.2Z"/><path d="M302.8 77.2 L305.5 77.4 L304.1 74.0Z"/><path d="M304.7 73.9 L307.6 73.9 L306.2 77.0Z"/><path d="M307.6 76.9 L310.6 77.2 L309.1 74.3Z"/><path d="M309.9 74.1 L312.4 74.0 L310.9 76.3Z"/><path d="M311.6 77.4 L314.5 76.9 L313.3 74.3Z"/><path d="M314.6 74.3 L317.2 74.4 L316.0 76.6Z"/><path d="M316.8 76.9 L319.6 77.1 L317.9 74.3Z"/><path d="M318.8 74.0 L321.5 74.2 L320.6 76.4Z"/><path d="M321.2 77.0 L323.7 76.9 L322.3 74.9Z"/><path d="M323.9 74.3 L326.4 73.8 L324.7 76.3Z"/><path d="M325.5 77.0 L328.8 77.3 L327.4 74.5Z"/><path d="M328.0 73.9 L330.6 73.9 L329.8 76.3Z"/><path d="M330.8 76.7 L333.0 76.8 L331.8 74.6Z"/><path d="M333.0 73.8 L335.1 74.3 L334.4 76.5Z"/><path d="M334.8 77.5 L338.4 77.4 L336.9 74.2Z"/><path d="M293.5 81.6 L296.7 81.4 L295.2 78.6Z"/><path d="M296.0 77.9 L299.3 78.1 L297.3 80.6Z"/><path d="M298.3 81.0 L301.0 81.3 L299.8 78.4Z"/><path d="M300.1 77.9 L303.7 78.4 L302.2 81.1Z"/><path d="M302.8 81.6 L306.3 81.2 L304.2 78.6Z"/><path d="M305.2 78.1 L309.0 77.8 L306.7 80.7Z"/><path d="M307.5 81.6 L311.2 81.4 L309.2 78.9Z"/><path d="M310.0 77.8 L313.7 77.9 L312.2 80.9Z"/><path d="M312.7 81.3 L316.1 81.0 L314.2 78.5Z"/><path d="M314.8 77.9 L318.0 78.4 L316.9 80.8Z"/><path d="M317.4 81.1 L321.1 81.5 L318.8 78.7Z"/><path d="M319.7 77.8 L322.7 77.9 L321.4 81.3Z"/><path d="M322.1 81.2 L325.9 81.5 L323.9 78.2Z"/><path d="M325.2 78.0 L327.7 78.4 L326.1 80.6Z"/><path d="M327.0 81.0 L329.9 81.5 L328.5 78.9Z"/><path d="M329.4 78.3 L333.0 77.9 L331.4 80.7Z"/><path d="M332.3 81.5 L335.3 81.6 L333.3 78.4Z"/><path d="M290.6 82.3 L294.1 82.6 L292.2 85.4Z"/><path d="M293.5 85.8 L296.6 85.6 L294.9 82.9Z"/><path d="M296.2 82.2 L298.7 82.1 L297.6 84.9Z"/><path d="M298.9 85.5 L301.4 85.4 L300.1 82.9Z"/><path d="M300.8 82.3 L304.5 82.4 L302.9 85.4Z"/><path d="M303.2 85.8 L306.8 85.9 L304.9 82.5Z"/><path d="M306.3 82.3 L309.3 82.2 L308.1 85.3Z"/><path d="M308.8 85.9 L311.4 85.6 L310.4 83.2Z"/><path d="M310.8 82.1 L314.1 82.6 L312.8 85.6Z"/><path d="M313.6 85.6 L317.2 86.0 L315.0 82.9Z"/><path d="M315.9 82.0 L319.3 82.1 L317.8 85.4Z"/><path d="M318.5 85.8 L321.6 85.6 L320.0 83.0Z"/><path d="M320.9 82.2 L324.5 82.3 L322.5 84.9Z"/><path d="M323.5 85.6 L327.5 85.6 L325.5 82.6Z"/><path d="M326.8 82.3 L329.1 82.5 L327.7 84.7Z"/><path d="M329.1 85.6 L332.5 85.7 L330.3 82.4Z"/><path d="M331.6 82.0 L334.8 82.1 L333.0 85.0Z"/><path d="M334.2 85.5 L337.3 85.9 L335.9 82.4Z"/><path d="M293.5 90.0 L297.3 90.2 L295.5 87.4Z"/><path d="M296.2 86.5 L299.5 86.9 L298.1 89.6Z"/><path d="M298.6 90.3 L302.0 90.2 L300.6 87.4Z"/><path d="M301.6 86.4 L305.2 86.4 L303.2 89.8Z"/><path d="M303.7 90.4 L307.6 90.5 L305.7 87.0Z"/><path d="M306.6 86.5 L310.4 86.8 L308.4 89.5Z"/><path d="M308.9 90.2 L312.4 90.2 L310.9 86.9Z"/><path d="M312.3 86.9 L315.4 86.5 L313.7 89.6Z"/><path d="M314.8 90.6 L318.3 90.6 L316.1 87.6Z"/><path d="M317.6 86.6 L320.9 86.9 L318.7 89.6Z"/><path d="M320.1 90.2 L323.7 90.1 L321.7 87.4Z"/><path d="M322.5 86.6 L325.6 86.6 L323.9 90.1Z"/><path d="M324.9 90.4 L328.2 90.2 L326.9 87.2Z"/><path d="M327.9 87.0 L330.8 87.1 L329.6 89.6Z"/><path d="M330.9 90.2 L333.8 90.4 L332.2 87.0Z"/><path d="M333.3 86.5 L336.7 87.0 L334.9 90.0Z"/><path d="M290.2 91.3 L294.4 91.3 L292.8 94.4Z"/><path d="M292.9 94.7 L297.0 94.8 L295.1 91.6Z"/><path d="M295.8 91.2 L300.0 91.0 L298.4 94.5Z"/><path d="M299.0 95.3 L302.9 95.0 L300.6 91.4Z"/><path d="M301.6 91.4 L305.3 91.6 L303.7 94.3Z"/><path d="M304.4 95.0 L308.0 94.7 L306.5 91.4Z"/><path d="M306.7 91.0 L311.2 91.2 L309.2 94.9Z"/><path d="M309.9 94.8 L314.1 95.2 L312.0 91.5Z"/><path d="M312.6 91.4 L316.6 91.0 L314.3 94.5Z"/><path d="M315.7 95.2 L319.6 95.3 L317.3 91.8Z"/><path d="M318.1 91.1 L322.3 91.5 L319.9 95.0Z"/><path d="M320.7 95.4 L325.3 95.4 L322.8 92.0Z"/><path d="M324.3 91.4 L327.7 91.5 L326.1 94.5Z"/><path d="M326.9 95.0 L330.5 95.1 L328.4 91.6Z"/><path d="M329.6 91.0 L332.8 91.0 L331.6 94.6Z"/><path d="M331.6 95.3 L336.0 95.2 L334.1 91.5Z"/><path d="M335.3 91.6 L339.0 91.1 L337.1 94.8Z"/><path d="M293.1 99.9 L297.7 100.3 L295.5 96.9Z"/><path d="M295.7 95.7 L300.7 95.8 L298.1 99.7Z"/><path d="M299.0 100.2 L303.0 99.9 L301.5 96.7Z"/><path d="M301.6 96.0 L306.0 96.3 L303.9 99.8Z"/><path d="M305.3 99.7 L309.2 99.9 L306.6 96.4Z"/><path d="M307.3 96.1 L311.9 96.2 L309.5 99.7Z"/><path d="M310.3 100.5 L314.6 100.0 L312.9 96.5Z"/><path d="M313.2 96.2 L317.8 96.3 L315.7 99.5Z"/><path d="M317.0 99.7 L320.8 99.7 L318.4 96.5Z"/><path d="M319.3 96.4 L323.1 96.2 L321.4 99.8Z"/><path d="M322.1 100.1 L326.1 100.4 L324.4 96.7Z"/><path d="M325.4 96.1 L329.0 96.1 L327.5 99.5Z"/><path d="M328.2 100.3 L331.7 99.9 L329.9 96.5Z"/><path d="M330.6 95.8 L335.5 96.2 L332.7 100.1Z"/><path d="M334.2 100.3 L338.2 100.2 L335.7 96.6Z"/><path d="M289.9 101.0 L294.9 101.2 L292.5 105.0Z"/><path d="M293.6 105.3 L297.9 105.6 L295.5 101.8Z"/><path d="M296.2 101.3 L301.0 101.3 L298.7 105.1Z"/><path d="M299.4 105.2 L303.8 105.1 L301.5 101.9Z"/><path d="M302.3 101.1 L306.6 101.3 L304.5 104.9Z"/><path d="M305.6 105.5 L309.7 105.3 L308.0 101.3Z"/><path d="M308.8 101.4 L312.8 100.9 L310.7 104.8Z"/><path d="M311.7 105.6 L315.8 105.3 L314.0 101.4Z"/><path d="M314.7 100.8 L319.3 100.9 L316.4 104.7Z"/><path d="M317.5 105.3 L322.0 105.3 L319.5 101.5Z"/><path d="M320.7 100.9 L325.1 101.0 L322.5 104.5Z"/><path d="M323.7 105.3 L327.9 105.1 L326.1 101.5Z"/><path d="M326.8 101.2 L330.8 101.2 L328.5 105.2Z"/><path d="M329.4 105.2 L333.7 105.3 L331.5 101.3Z"/><path d="M332.4 100.9 L337.0 101.1 L334.9 105.0Z"/><path d="M293.0 111.1 L298.3 111.1 L295.4 107.2Z"/><path d="M296.0 106.6 L301.3 106.1 L298.5 110.2Z"/><path d="M299.6 110.7 L304.6 111.1 L301.7 107.2Z"/><path d="M303.0 106.7 L307.7 106.6 L304.9 110.5Z"/><path d="M305.9 111.1 L310.6 110.7 L308.1 106.6Z"/><path d="M309.0 106.1 L313.9 106.3 L311.5 110.8Z"/><path d="M312.4 110.9 L317.0 111.1 L314.5 107.0Z"/><path d="M315.6 106.5 L319.7 106.5 L317.9 110.8Z"/><path d="M318.6 110.9 L323.6 110.6 L321.1 106.9Z"/><path d="M321.6 106.4 L326.4 106.5 L323.8 110.3Z"/><path d="M325.3 110.7 L329.9 110.8 L327.3 106.7Z"/><path d="M328.3 106.6 L332.5 106.3 L330.2 110.4Z"/><path d="M330.7 111.1 L336.4 111.0 L333.2 106.6Z"/><path d="M334.9 106.5 L339.2 106.6 L337.1 110.4Z"/><path d="M293.5 116.4 L298.5 116.6 L296.1 112.0Z"/><path d="M297.0 112.2 L301.7 111.8 L299.4 116.3Z"/><path d="M299.7 116.7 L304.8 116.6 L302.5 112.6Z"/><path d="M302.7 111.5 L308.6 111.8 L306.1 116.2Z"/><path d="M306.7 116.9 L311.9 116.6 L309.0 112.1Z"/><path d="M309.4 111.5 L314.4 112.0 L311.9 116.6Z"/><path d="M312.7 116.4 L318.4 116.5 L315.8 112.0Z"/><path d="M316.7 112.1 L321.6 111.6 L319.1 116.3Z"/><path d="M319.6 116.9 L324.7 116.3 L321.8 112.6Z"/><path d="M322.9 112.0 L327.6 112.1 L325.5 115.8Z"/><path d="M326.4 116.7 L330.9 116.8 L328.7 112.5Z"/><path d="M329.5 112.0 L335.1 112.0 L332.2 116.1Z"/><path d="M333.2 116.8 L337.7 116.7 L335.8 112.7Z"/><path d="M293.7 122.4 L298.6 122.5 L296.2 118.3Z"/><path d="M296.6 117.6 L301.6 117.9 L299.5 121.5Z"/><path d="M300.5 122.4 L304.7 122.6 L302.8 118.4Z"/><path d="M302.9 117.6 L308.7 117.4 L306.0 122.3Z"/><path d="M306.9 122.4 L311.4 122.2 L309.4 118.3Z"/><path d="M310.3 117.9 L314.8 117.8 L312.8 122.2Z"/><path d="M313.5 122.2 L318.0 122.1 L316.0 118.0Z"/><path d="M316.7 117.4 L321.1 118.0 L319.0 121.6Z"/><path d="M319.8 122.4 L324.7 122.4 L322.1 117.9Z"/><path d="M323.4 117.8 L328.0 117.9 L325.8 122.2Z"/><path d="M327.0 122.2 L331.3 122.2 L328.9 117.6Z"/><path d="M330.4 117.6 L335.4 117.9 L332.2 122.0Z"/><path d="M333.8 122.3 L338.4 122.5 L336.3 118.2Z"/><path d="M290.6 123.8 L294.7 123.2 L292.3 127.5Z"/><path d="M293.6 128.0 L298.7 128.4 L296.0 124.2Z"/><path d="M296.9 123.7 L301.9 123.2 L299.3 128.0Z"/><path d="M299.8 127.9 L304.9 127.9 L302.3 123.7Z"/><path d="M303.6 123.4 L307.7 123.8 L305.6 128.0Z"/><path d="M306.4 128.2 L311.3 128.5 L309.4 124.0Z"/><path d="M310.4 123.4 L315.1 123.2 L312.3 127.3Z"/><path d="M313.1 128.4 L318.0 128.1 L315.5 123.8Z"/><path d="M316.2 123.4 L321.6 123.6 L318.8 128.2Z"/><path d="M320.2 128.0 L325.0 128.1 L322.3 123.6Z"/><path d="M324.0 123.7 L327.9 123.4 L326.2 127.3Z"/><path d="M327.3 127.8 L331.9 128.0 L329.0 123.6Z"/><path d="M329.7 123.3 L335.5 123.1 L332.6 127.5Z"/><path d="M333.5 128.0 L338.0 127.9 L335.9 123.8Z"/><path d="M293.5 134.2 L298.4 133.9 L295.5 129.9Z"/><path d="M296.2 129.4 L301.6 129.4 L299.4 133.7Z"/><path d="M299.9 134.3 L304.8 133.8 L302.8 129.5Z"/><path d="M303.5 128.9 L308.3 129.2 L305.9 133.2Z"/><path d="M307.2 133.8 L311.8 133.8 L309.4 129.5Z"/><path d="M309.9 129.2 L315.1 129.2 L312.1 134.0Z"/><path d="M312.9 133.9 L318.7 133.8 L315.5 129.8Z"/><path d="M316.8 129.4 L321.6 129.4 L318.9 133.8Z"/><path d="M319.6 134.1 L325.1 133.9 L322.2 129.5Z"/><path d="M323.8 129.1 L328.3 129.4 L325.6 133.7Z"/><path d="M326.6 134.3 L331.7 134.0 L329.5 129.9Z"/><path d="M330.0 129.2 L335.4 129.5 L332.9 133.7Z"/><path d="M333.3 134.4 L338.7 133.9 L335.8 129.8Z"/><path d="M290.1 135.1 L294.5 134.9 L292.8 139.4Z"/><path d="M293.7 140.0 L298.6 139.5 L296.0 135.4Z"/><path d="M296.9 135.4 L301.7 134.9 L299.2 139.1Z"/><path d="M299.8 140.0 L304.7 139.9 L302.8 135.5Z"/><path d="M303.3 134.7 L308.0 134.7 L305.6 139.3Z"/><path d="M306.2 139.9 L312.0 140.0 L309.2 135.5Z"/><path d="M309.9 135.0 L315.2 134.9 L312.4 139.2Z"/><path d="M313.3 139.9 L317.8 139.6 L316.1 135.3Z"/><path d="M316.6 135.4 L321.3 135.3 L318.9 138.9Z"/><path d="M319.7 139.7 L324.8 139.9 L322.2 135.4Z"/><path d="M323.1 135.0 L328.1 135.2 L325.9 139.5Z"/><path d="M327.1 139.9 L331.8 139.8 L329.5 135.8Z"/><path d="M330.4 134.7 L335.2 135.1 L332.6 139.7Z"/><path d="M333.7 140.0 L338.4 139.7 L335.9 135.6Z"/><path d="M293.4 145.6 L298.2 145.8 L296.1 141.3Z"/><path d="M296.4 140.6 L301.7 140.8 L298.8 145.5Z"/><path d="M300.2 146.0 L304.8 145.6 L302.9 140.8Z"/><path d="M303.4 141.1 L308.6 140.9 L306.3 145.1Z"/><path d="M306.6 145.5 L311.7 145.5 L309.5 141.5Z"/><path d="M309.9 140.7 L315.1 140.9 L312.8 145.5Z"/><path d="M313.4 146.0 L318.2 145.6 L316.1 141.0Z"/><path d="M317.1 141.0 L321.2 141.2 L319.3 145.2Z"/><path d="M319.9 145.4 L324.9 145.6 L322.5 141.0Z"/><path d="M323.5 140.8 L328.7 140.9 L325.5 145.0Z"/><path d="M326.9 145.3 L331.6 145.9 L329.3 141.4Z"/><path d="M330.1 140.6 L335.2 140.8 L333.0 145.2Z"/><path d="M333.1 145.7 L337.8 145.3 L335.5 141.4Z"/><path d="M292.8 151.7 L298.2 151.6 L295.7 146.8Z"/><path d="M297.2 146.8 L301.4 146.6 L299.1 150.4Z"/><path d="M300.6 151.3 L305.0 151.2 L302.2 147.6Z"/><path d="M303.9 146.9 L308.0 146.8 L306.2 150.8Z"/><path d="M306.7 151.5 L311.3 151.2 L309.4 147.2Z"/><path d="M309.6 146.5 L314.7 146.9 L312.3 151.1Z"/><path d="M313.2 151.4 L318.0 151.1 L316.1 146.9Z"/><path d="M316.5 146.5 L321.1 146.8 L319.0 150.6Z"/><path d="M319.7 151.7 L324.7 151.4 L322.8 147.3Z"/><path d="M323.5 146.5 L328.9 146.4 L326.3 151.0Z"/><path d="M326.3 151.6 L331.5 151.7 L329.2 146.9Z"/><path d="M329.9 146.9 L334.6 146.7 L332.5 150.7Z"/><path d="M333.6 151.3 L338.0 151.3 L335.5 147.0Z"/><path d="M292.9 157.3 L298.2 157.2 L295.6 152.5Z"/><path d="M296.5 152.6 L301.4 152.5 L299.4 156.8Z"/><path d="M299.7 157.1 L304.6 157.3 L302.6 152.8Z"/><path d="M303.5 152.2 L308.7 152.2 L306.0 156.6Z"/><path d="M306.8 157.3 L311.2 156.9 L308.9 152.6Z"/><path d="M309.7 152.3 L315.1 152.2 L312.8 156.7Z"/><path d="M313.2 157.4 L318.2 156.9 L316.1 153.1Z"/><path d="M317.0 152.5 L321.3 152.2 L318.8 157.0Z"/><path d="M320.3 157.0 L325.2 157.2 L322.8 153.1Z"/><path d="M323.8 152.4 L328.7 152.6 L326.1 156.9Z"/><path d="M326.3 157.3 L331.5 157.2 L329.5 152.7Z"/><path d="M330.3 152.7 L334.8 152.5 L332.9 156.8Z"/><path d="M333.0 157.1 L338.2 157.0 L335.7 152.7Z"/><path d="M289.9 158.3 L294.8 158.6 L292.3 162.2Z"/><path d="M293.5 162.9 L298.6 163.0 L296.1 158.5Z"/><path d="M296.6 158.3 L302.1 157.9 L299.0 162.5Z"/><path d="M299.8 162.8 L305.2 163.0 L302.2 158.6Z"/><path d="M303.1 157.9 L307.7 158.6 L306.0 162.1Z"/><path d="M306.7 162.8 L311.8 163.0 L308.9 158.6Z"/><path d="M310.1 158.3 L315.5 158.2 L312.3 162.4Z"/><path d="M313.7 163.2 L318.0 162.7 L316.0 159.1Z"/><path d="M316.9 158.5 L322.0 158.1 L319.0 162.8Z"/><path d="M320.1 162.9 L325.2 162.9 L322.2 158.8Z"/><path d="M323.6 158.5 L328.8 158.2 L325.9 162.3Z"/><path d="M326.2 163.2 L331.5 163.0 L329.5 158.2Z"/><path d="M329.7 158.4 L334.5 158.5 L332.7 162.8Z"/><path d="M333.6 163.0 L338.2 162.9 L335.8 158.9Z"/><path d="M293.1 168.8 L298.4 168.7 L295.6 164.1Z"/><path d="M297.3 164.4 L301.9 164.4 L299.6 168.3Z"/><path d="M300.2 168.9 L304.8 168.8 L302.9 164.5Z"/><path d="M303.1 164.2 L308.0 163.8 L305.9 168.4Z"/><path d="M306.5 168.9 L311.7 168.9 L309.2 164.3Z"/><path d="M310.4 164.1 L314.6 164.3 L312.3 168.0Z"/><path d="M313.4 168.8 L318.0 168.9 L315.5 164.6Z"/><path d="M316.6 163.8 L321.5 164.3 L319.2 168.4Z"/><path d="M320.6 168.8 L324.5 168.9 L322.4 164.4Z"/><path d="M323.5 163.7 L328.7 163.6 L325.7 168.4Z"/><path d="M326.6 168.7 L331.8 168.7 L329.5 164.7Z"/><path d="M330.5 164.4 L334.6 164.3 L332.4 168.5Z"/><path d="M333.1 168.8 L338.6 169.1 L336.0 164.2Z"/><path d="M290.3 169.6 L295.4 169.9 L292.4 173.9Z"/><path d="M293.5 174.3 L297.8 174.2 L296.0 170.1Z"/><path d="M296.9 169.8 L301.2 170.2 L299.2 174.2Z"/><path d="M299.5 174.6 L304.8 174.7 L302.8 170.4Z"/><path d="M303.6 170.0 L308.3 169.8 L305.6 174.4Z"/><path d="M306.7 174.4 L311.6 174.4 L309.5 170.3Z"/><path d="M309.9 169.8 L315.0 169.7 L312.4 173.7Z"/><path d="M312.9 174.6 L318.8 174.4 L315.6 170.4Z"/><path d="M316.6 169.6 L321.9 169.8 L319.6 174.7Z"/><path d="M320.2 174.9 L325.3 174.8 L322.7 170.1Z"/><path d="M323.8 170.1 L328.5 169.7 L326.1 174.3Z"/><path d="M326.7 174.5 L331.4 174.2 L329.0 170.3Z"/><path d="M330.0 169.7 L334.6 169.7 L332.2 173.6Z"/><path d="M333.2 174.6 L338.2 174.4 L335.5 170.1Z"/><path d="M293.8 180.2 L298.7 180.5 L295.6 175.9Z"/><path d="M296.7 175.9 L301.4 175.9 L298.8 179.8Z"/><path d="M299.8 180.1 L304.7 180.2 L302.6 175.9Z"/><path d="M303.5 175.9 L308.5 175.5 L306.1 180.3Z"/><path d="M307.0 180.6 L311.4 180.1 L308.9 176.3Z"/><path d="M310.5 175.5 L314.8 175.8 L312.7 179.8Z"/><path d="M313.0 180.4 L317.9 180.5 L315.6 176.1Z"/><path d="M316.7 175.2 L322.0 175.6 L319.6 179.5Z"/><path d="M320.0 180.1 L324.6 180.0 L322.7 175.9Z"/><path d="M323.5 175.7 L328.3 175.8 L325.9 179.7Z"/><path d="M326.9 180.6 L331.9 180.3 L329.5 176.5Z"/><path d="M330.2 176.0 L334.6 175.4 L332.5 180.0Z"/><path d="M333.7 180.2 L338.7 180.2 L335.5 175.7Z"/><path d="M289.9 181.8 L294.8 181.3 L292.2 185.8Z"/><path d="M292.9 186.5 L298.1 186.6 L295.8 182.0Z"/><path d="M296.7 181.2 L302.0 181.1 L299.4 185.3Z"/><path d="M300.5 185.9 L305.0 186.1 L302.9 182.3Z"/><path d="M303.1 181.3 L308.2 181.2 L305.6 185.9Z"/><path d="M307.1 186.0 L311.8 186.0 L309.5 182.1Z"/><path d="M310.4 181.3 L314.8 181.5 L312.8 185.4Z"/><path d="M313.4 186.2 L318.6 186.0 L316.2 181.9Z"/><path d="M316.6 181.7 L322.0 181.3 L318.8 185.3Z"/><path d="M320.3 186.0 L325.3 186.0 L322.3 181.9Z"/><path d="M323.9 181.7 L328.6 181.8 L325.6 185.4Z"/><path d="M326.4 186.1 L331.3 186.1 L328.8 181.7Z"/><path d="M330.5 181.2 L334.9 181.2 L332.5 185.4Z"/><path d="M333.6 186.2 L338.0 186.1 L335.8 182.2Z"/><path d="M293.6 192.2 L298.2 191.8 L295.6 187.2Z"/><path d="M296.6 187.2 L301.5 186.9 L299.3 191.6Z"/><path d="M300.2 192.4 L305.4 192.2 L302.5 187.5Z"/><path d="M303.3 187.1 L308.2 187.0 L306.2 191.1Z"/><path d="M306.5 192.0 L311.4 191.8 L308.9 187.5Z"/><path d="M310.4 186.9 L315.2 187.1 L312.7 191.6Z"/><path d="M312.8 192.3 L318.7 192.1 L315.9 188.0Z"/><path d="M317.0 187.2 L321.8 187.2 L319.2 191.6Z"/><path d="M320.2 192.0 L324.7 192.1 L322.3 188.0Z"/><path d="M323.4 187.2 L328.1 187.0 L326.2 191.5Z"/><path d="M327.1 191.8 L331.3 192.1 L329.2 187.9Z"/><path d="M330.3 186.9 L334.9 187.4 L332.8 191.3Z"/><path d="M333.0 191.9 L338.7 192.1 L335.8 187.4Z"/><path d="M293.3 198.0 L298.5 197.6 L296.0 193.4Z"/><path d="M296.5 192.8 L301.7 192.6 L298.9 197.5Z"/><path d="M300.3 197.6 L304.8 197.5 L302.8 193.2Z"/><path d="M303.1 192.9 L308.6 193.0 L305.7 197.0Z"/><path d="M306.9 197.7 L311.6 197.9 L309.4 193.4Z"/><path d="M310.4 192.8 L315.5 193.1 L312.5 197.5Z"/><path d="M313.5 197.8 L318.5 197.9 L316.2 193.6Z"/><path d="M316.7 193.0 L322.0 192.9 L319.2 197.6Z"/><path d="M320.1 198.0 L325.1 198.0 L322.4 193.2Z"/><path d="M323.5 193.2 L328.1 192.8 L325.5 197.7Z"/><path d="M326.8 197.9 L331.4 198.0 L329.4 193.4Z"/><path d="M329.9 193.0 L335.5 193.2 L332.9 197.1Z"/><path d="M333.0 198.1 L338.0 197.6 L335.6 193.4Z"/><path d="M293.3 203.4 L298.2 203.9 L296.1 199.5Z"/><path d="M296.2 198.8 L301.5 198.8 L299.1 203.2Z"/><path d="M299.7 203.9 L305.0 203.4 L302.3 199.3Z"/><path d="M303.2 198.6 L308.6 198.7 L306.0 203.3Z"/><path d="M307.0 203.6 L312.1 203.4 L309.2 199.3Z"/><path d="M309.6 198.9 L314.7 199.1 L312.5 203.4Z"/><path d="M313.5 203.5 L318.1 203.9 L315.5 199.6Z"/><path d="M316.5 199.0 L322.0 198.8 L319.3 202.8Z"/><path d="M319.7 203.4 L325.2 203.3 L322.8 199.1Z"/><path d="M323.1 198.8 L328.1 199.1 L325.7 203.5Z"/><path d="M327.2 203.5 L331.2 203.4 L329.3 199.1Z"/><path d="M329.9 199.0 L335.0 198.9 L332.2 203.5Z"/><path d="M293.2 209.3 L298.6 209.4 L296.2 204.8Z"/><path d="M296.9 204.7 L301.2 204.5 L299.0 209.1Z"/><path d="M300.5 209.1 L305.1 209.7 L302.4 205.5Z"/><path d="M303.1 204.6 L308.1 204.8 L305.5 209.2Z"/><path d="M306.7 209.2 L311.8 209.7 L309.3 204.9Z"/><path d="M309.7 204.7 L314.6 204.7 L312.3 208.8Z"/><path d="M313.0 209.8 L318.3 209.7 L316.1 205.0Z"/><path d="M317.0 204.3 L321.7 204.6 L318.9 209.0Z"/><path d="M320.0 209.3 L324.8 209.4 L322.2 204.7Z"/><path d="M323.4 205.0 L327.8 205.0 L325.8 209.1Z"/><path d="M326.4 209.6 L331.3 209.3 L328.7 205.0Z"/><path d="M330.5 204.4 L335.0 204.5 L332.6 209.1Z"/><path d="M333.2 209.5 L338.7 209.1 L336.0 205.4Z"/><path d="M293.2 215.6 L298.0 215.6 L295.7 210.7Z"/><path d="M296.9 210.5 L301.4 210.3 L298.9 214.6Z"/><path d="M300.6 215.5 L305.1 215.2 L302.6 211.3Z"/><path d="M303.5 210.2 L308.3 210.7 L306.1 214.3Z"/><path d="M306.5 215.5 L311.7 215.4 L308.9 211.3Z"/><path d="M310.4 210.7 L315.2 210.5 L312.5 214.9Z"/><path d="M313.2 215.5 L318.3 215.6 L315.5 211.4Z"/><path d="M317.1 210.4 L321.3 210.5 L319.0 214.6Z"/><path d="M320.4 215.1 L325.2 215.4 L322.7 211.4Z"/><path d="M323.1 210.5 L328.6 210.3 L325.9 214.9Z"/><path d="M326.7 214.9 L331.3 215.4 L329.1 211.0Z"/><path d="M329.7 210.2 L335.4 210.4 L332.4 214.5Z"/><path d="M333.4 215.3 L338.5 214.9 L336.0 210.6Z"/><path d="M290.4 216.2 L294.7 216.5 L292.6 220.9Z"/><path d="M293.8 221.0 L298.8 220.8 L296.2 216.5Z"/><path d="M296.3 216.5 L301.7 216.4 L298.9 220.5Z"/><path d="M300.3 221.1 L305.0 221.4 L302.9 216.7Z"/><path d="M303.3 216.5 L308.2 216.4 L305.9 220.4Z"/><path d="M307.2 221.0 L311.5 221.3 L308.8 217.0Z"/><path d="M310.0 216.3 L315.4 216.3 L312.7 220.2Z"/><path d="M313.7 221.2 L318.0 221.0 L315.9 216.3Z"/><path d="M317.0 216.1 L321.8 216.1 L319.3 220.3Z"/><path d="M320.3 221.2 L325.0 221.4 L322.7 216.8Z"/><path d="M323.6 216.5 L328.5 216.2 L325.6 220.4Z"/><path d="M327.1 220.6 L331.3 220.6 L329.0 216.8Z"/><path d="M329.7 216.0 L335.5 215.9 L332.4 220.6Z"/><path d="M333.3 221.0 L338.8 220.9 L335.6 217.0Z"/><path d="M293.7 226.6 L298.0 226.9 L295.8 222.6Z"/><path d="M296.4 221.9 L302.1 222.0 L299.0 226.5Z"/><path d="M299.5 227.1 L305.1 226.8 L302.8 222.2Z"/><path d="M303.4 222.1 L308.5 221.9 L306.1 226.1Z"/><path d="M307.2 226.9 L311.8 227.0 L309.2 222.9Z"/><path d="M310.0 222.2 L314.9 221.8 L312.8 226.3Z"/><path d="M313.9 226.4 L318.1 226.4 L315.8 222.6Z"/><path d="M316.9 222.0 L321.7 221.9 L319.5 226.4Z"/><path d="M320.3 227.0 L324.9 227.0 L322.9 222.8Z"/><path d="M323.6 221.7 L328.6 222.1 L326.0 226.3Z"/><path d="M327.1 226.5 L331.2 226.5 L328.9 222.8Z"/><path d="M330.0 222.2 L334.5 222.3 L332.3 225.9Z"/><path d="M333.3 226.5 L338.2 226.7 L336.1 222.2Z"/><path d="M290.0 227.7 L294.9 227.8 L292.3 232.4Z"/><path d="M293.6 232.6 L297.9 232.8 L295.4 228.3Z"/><path d="M296.8 227.9 L301.8 227.7 L299.2 232.3Z"/><path d="M300.5 232.8 L305.4 232.5 L303.0 228.0Z"/><path d="M303.3 227.9 L308.5 227.7 L305.7 231.9Z"/><path d="M306.3 232.8 L311.7 232.7 L308.9 228.4Z"/><path d="M310.2 228.0 L315.4 228.0 L312.9 232.4Z"/><path d="M312.9 232.5 L317.9 232.9 L316.0 228.3Z"/><path d="M316.4 227.8 L322.2 227.6 L318.8 231.9Z"/><path d="M320.3 232.5 L324.6 232.3 L322.2 228.5Z"/><path d="M323.8 228.1 L328.3 228.0 L325.6 231.8Z"/><path d="M326.6 232.4 L331.1 232.8 L329.3 228.8Z"/><path d="M330.2 227.7 L335.3 228.0 L332.3 231.8Z"/><path d="M333.4 232.2 L338.6 232.7 L335.8 228.1Z"/><path d="M293.1 238.6 L298.7 238.5 L296.0 233.8Z"/><path d="M296.6 233.3 L301.7 233.3 L298.9 237.9Z"/><path d="M300.2 238.3 L304.6 238.6 L302.1 234.1Z"/><path d="M303.7 233.5 L308.3 233.8 L305.9 237.5Z"/><path d="M306.4 238.2 L312.0 238.2 L309.1 234.4Z"/><path d="M310.1 233.2 L314.7 233.9 L312.8 237.7Z"/><path d="M313.8 238.3 L318.6 238.8 L316.0 234.4Z"/><path d="M316.3 233.8 L321.2 234.0 L319.3 237.6Z"/><path d="M320.2 238.1 L325.2 238.6 L322.9 233.8Z"/><path d="M323.6 233.5 L328.5 233.6 L326.1 237.7Z"/><path d="M326.6 238.3 L331.1 238.5 L328.7 234.5Z"/><path d="M329.7 233.7 L334.7 233.6 L332.1 238.3Z"/><path d="M332.9 238.6 L338.7 238.7 L335.5 234.0Z"/><path d="M290.2 239.7 L295.2 239.1 L292.2 243.4Z"/><path d="M293.5 244.2 L298.2 244.3 L295.9 240.3Z"/><path d="M297.1 239.7 L301.9 239.1 L299.4 244.0Z"/><path d="M299.7 244.6 L305.0 244.4 L302.3 239.7Z"/><path d="M303.1 239.4 L308.7 239.6 L306.2 243.8Z"/><path d="M307.0 243.9 L311.3 244.1 L308.8 239.8Z"/><path d="M309.8 239.5 L315.3 239.6 L312.8 243.9Z"/><path d="M313.2 244.3 L318.2 244.2 L316.2 239.7Z"/><path d="M316.6 239.7 L321.7 239.7 L319.3 244.2Z"/><path d="M319.7 244.6 L324.6 244.1 L322.6 240.2Z"/><path d="M323.4 239.5 L328.7 239.5 L325.7 243.7Z"/><path d="M326.5 244.1 L332.1 244.3 L329.3 240.1Z"/><path d="M329.7 239.0 L334.7 239.0 L332.4 243.5Z"/><path d="M333.8 244.3 L338.2 244.4 L335.6 239.5Z"/><path d="M293.2 250.3 L298.0 250.4 L295.7 245.8Z"/><path d="M296.4 245.4 L302.0 245.3 L299.0 249.2Z"/><path d="M299.6 250.2 L305.2 250.2 L302.2 245.3Z"/><path d="M303.4 245.3 L308.3 245.0 L305.5 249.0Z"/><path d="M307.1 249.9 L311.9 249.8 L309.5 245.5Z"/><path d="M309.6 245.0 L315.3 245.0 L312.4 249.8Z"/><path d="M313.0 250.0 L318.3 250.2 L315.8 245.9Z"/><path d="M317.0 245.1 L321.1 245.2 L318.9 249.4Z"/><path d="M319.5 250.1 L324.8 249.9 L322.4 245.3Z"/><path d="M323.4 245.5 L328.4 244.9 L325.6 249.7Z"/><path d="M327.0 250.3 L331.4 250.3 L329.2 245.4Z"/><path d="M329.6 244.9 L334.8 245.5 L332.4 249.8Z"/><path d="M333.2 249.8 L338.5 250.0 L335.5 246.1Z"/><path d="M290.1 251.0 L294.6 251.0 L292.7 255.4Z"/><path d="M293.6 255.9 L297.9 255.9 L296.2 251.8Z"/><path d="M297.0 250.8 L301.4 251.1 L299.5 255.1Z"/><path d="M300.0 255.6 L304.7 256.0 L302.5 251.8Z"/><path d="M302.9 251.3 L308.1 251.0 L305.8 255.7Z"/><path d="M306.8 255.7 L312.0 255.6 L309.6 251.4Z"/><path d="M309.8 250.9 L314.9 251.1 L312.1 255.3Z"/><path d="M312.8 256.0 L318.2 255.9 L315.8 251.6Z"/><path d="M316.5 251.4 L321.3 250.9 L319.1 255.3Z"/><path d="M319.9 255.6 L325.0 255.8 L322.4 251.9Z"/><path d="M323.7 250.8 L328.9 250.9 L325.5 255.8Z"/><path d="M326.6 255.7 L332.0 256.1 L329.1 251.6Z"/><path d="M330.3 251.1 L334.6 250.9 L332.6 255.3Z"/><path d="M292.9 262.0 L298.4 261.5 L296.0 257.0Z"/><path d="M296.8 257.0 L301.2 257.1 L299.2 261.0Z"/><path d="M299.7 261.6 L305.0 261.7 L302.6 257.2Z"/><path d="M303.2 256.8 L308.7 256.6 L305.8 261.4Z"/><path d="M306.9 261.5 L311.9 261.8 L308.9 257.0Z"/><path d="M309.7 256.6 L314.8 256.8 L312.1 261.1Z"/><path d="M313.2 261.7 L318.2 261.4 L315.8 257.0Z"/><path d="M316.7 257.2 L321.8 257.1 L319.3 261.2Z"/><path d="M323.7 256.8 L328.0 257.1 L325.9 261.3Z"/><path d="M326.3 261.4 L331.8 261.8 L329.0 256.8Z"/><path d="M330.1 256.4 L334.9 256.6 L332.7 261.7Z"/><path d="M333.7 261.9 L338.0 261.5 L335.9 257.1Z"/><path d="M289.5 262.3 L294.7 262.3 L292.5 267.2Z"/><path d="M300.1 267.2 L305.3 267.4 L302.2 262.9Z"/><path d="M303.5 262.4 L308.7 262.8 L305.5 267.1Z"/><path d="M316.2 262.6 L321.8 262.3 L318.9 267.1Z"/><path d="M323.1 262.5 L328.4 262.7 L325.4 267.2Z"/><path d="M326.9 267.5 L331.7 267.7 L329.0 263.0Z"/><path d="M329.8 262.5 L335.2 262.9 L332.7 267.2Z"/><path d="M333.2 267.5 L337.9 267.5 L335.5 262.8Z"/><path d="M303.1 268.4 L308.3 268.4 L306.0 272.7Z"/><path d="M306.2 273.2 L311.7 273.1 L309.3 268.6Z"/><rect x="309" y="365" width="1" height="1" fill="#aaa8c0"/><rect x="329" y="279" width="1" height="1" fill="#aaa8c0"/><rect x="319" y="298" width="1" height="1" fill="#aaa8c0"/><rect x="314" y="426" width="1" height="1" fill="#aaa8c0"/><rect x="301" y="289" width="1" height="1" fill="#aaa8c0"/><rect x="304" y="331" width="1" height="1" fill="#aaa8c0"/><rect x="326" y="305" width="1" height="1" fill="#aaa8c0"/><rect x="323" y="306" width="1" height="1" fill="#aaa8c0"/><rect x="305" y="359" width="1" height="1" fill="#aaa8c0"/><rect x="303" y="322" width="1" height="1" fill="#aaa8c0"/><rect x="327" y="325" width="1" height="1" fill="#aaa8c0"/><rect x="321" y="331" width="1" height="1" fill="#aaa8c0"/><rect x="302" y="311" width="1" height="1" fill="#aaa8c0"/><rect x="314" y="323" width="1" height="1" fill="#aaa8c0"/><rect x="310" y="307" width="1" height="1" fill="#aaa8c0"/><rect x="325" y="310" width="1" height="1" fill="#aaa8c0"/><rect x="318" y="274" width="1" height="1" fill="#aaa8c0"/><rect x="312" y="457" width="1" height="1" fill="#aaa8c0"/><rect x="311" y="446" width="1" height="1" fill="#aaa8c0"/><rect x="311" y="347" width="1" height="1" fill="#aaa8c0"/><rect x="312" y="318" width="1" height="1" fill="#aaa8c0"/><rect x="322" y="402" width="1" height="1" fill="#aaa8c0"/><rect x="324" y="322" width="1" height="1" fill="#aaa8c0"/><rect x="310" y="427" width="1" height="1" fill="#aaa8c0"/><rect x="324" y="445" width="1" height="1" fill="#aaa8c0"/><rect x="323" y="300" width="1" height="1" fill="#aaa8c0"/><rect x="305" y="411" width="1" height="1" fill="#aaa8c0"/><rect x="324" y="433" width="1" height="1" fill="#aaa8c0"/><rect x="307" y="316" width="1" height="1" fill="#aaa8c0"/><rect x="299" y="292" width="1" height="1" fill="#aaa8c0"/><rect x="323" y="286" width="1" height="1" fill="#aaa8c0"/><rect x="312" y="312" width="1" height="1" fill="#aaa8c0"/><rect x="312" y="437" width="1" height="1" fill="#aaa8c0"/><rect x="315" y="402" width="1" height="1" fill="#aaa8c0"/><rect x="312" y="457" width="1" height="1" fill="#aaa8c0"/><rect x="326" y="293" width="1" height="1" fill="#aaa8c0"/><rect x="313" y="378" width="1" height="1" fill="#aaa8c0"/><rect x="310" y="314" width="1" height="1" fill="#aaa8c0"/><rect x="299" y="297" width="1" height="1" fill="#aaa8c0"/><rect x="325" y="291" width="1" height="1" fill="#aaa8c0"/><rect x="324" y="317" width="1" height="1" fill="#aaa8c0"/><rect x="330" y="317" width="1" height="1" fill="#aaa8c0"/><rect x="321" y="361" width="1" height="1" fill="#aaa8c0"/><rect x="322" y="334" width="1" height="1" fill="#aaa8c0"/><rect x="315" y="310" width="1" height="1" fill="#aaa8c0"/><rect x="317" y="469" width="1" height="1" fill="#aaa8c0"/><rect x="313" y="428" width="1" height="1" fill="#aaa8c0"/><rect x="328" y="276" width="1" height="1" fill="#aaa8c0"/><rect x="316" y="457" width="1" height="1" fill="#aaa8c0"/><rect x="325" y="301" width="1" height="1" fill="#aaa8c0"/><rect x="308" y="359" width="1" height="1" fill="#aaa8c0"/><rect x="315" y="328" width="1" height="1" fill="#aaa8c0"/><rect x="322" y="273" width="1" height="1" fill="#aaa8c0"/><rect x="305" y="324" width="1" height="1" fill="#aaa8c0"/><rect x="308" y="396" width="1" height="1" fill="#aaa8c0"/><rect x="322" y="392" width="1" height="1" fill="#aaa8c0"/><rect x="310" y="418" width="1" height="1" fill="#aaa8c0"/><rect x="307" y="444" width="1" height="1" fill="#aaa8c0"/><rect x="325" y="289" width="1" height="1" fill="#aaa8c0"/><rect x="329" y="366" width="1" height="1" fill="#aaa8c0"/><rect x="307" y="341" width="1" height="1" fill="#aaa8c0"/><rect x="312" y="312" width="1" height="1" fill="#aaa8c0"/><rect x="301" y="305" width="1" height="1" fill="#aaa8c0"/><rect x="315" y="311" width="1" height="1" fill="#aaa8c0"/><rect x="313" y="309" width="1" height="1" fill="#aaa8c0"/><rect x="303" y="312" width="1" height="1" fill="#aaa8c0"/><rect x="313" y="416" width="1" height="1" fill="#aaa8c0"/><rect x="311" y="344" width="1" height="1" fill="#aaa8c0"/><rect x="317" y="303" width="1" height="1" fill="#aaa8c0"/><rect x="323" y="273" width="1" height="1" fill="#aaa8c0"/><rect x="327" y="345" width="1" height="1" fill="#aaa8c0"/><rect x="309" y="354" width="1" height="1" fill="#aaa8c0"/><rect x="321" y="386" width="1" height="1" fill="#aaa8c0"/><rect x="323" y="347" width="1" height="1" fill="#aaa8c0"/><rect x="311" y="393" width="1" height="1" fill="#aaa8c0"/><rect x="325" y="295" width="1" height="1" fill="#aaa8c0"/><rect x="314" y="277" width="1" height="1" fill="#aaa8c0"/><rect x="319" y="381" width="1" height="1" fill="#aaa8c0"/><rect x="323" y="351" width="1" height="1" fill="#aaa8c0"/><rect x="311" y="325" width="1" height="1" fill="#aaa8c0"/><rect x="316" y="346" width="1" height="1" fill="#aaa8c0"/><rect x="325" y="328" width="1" height="1" fill="#aaa8c0"/><rect x="299" y="305" width="1" height="1" fill="#aaa8c0"/><rect x="322" y="326" width="1" height="1" fill="#aaa8c0"/><rect x="317" y="459" width="1" height="1" fill="#aaa8c0"/><rect x="326" y="311" width="1" height="1" fill="#aaa8c0"/><rect x="318" y="451" width="1" height="1" fill="#aaa8c0"/><rect x="298" y="283" width="1" height="1" fill="#aaa8c0"/><rect x="307" y="417" width="1" height="1" fill="#aaa8c0"/><rect x="318" y="305" width="1" height="1" fill="#aaa8c0"/><rect x="312" y="410" width="1" height="1" fill="#aaa8c0"/><rect x="330" y="319" width="1" height="1" fill="#aaa8c0"/><rect x="310" y="309" width="1" height="1" fill="#aaa8c0"/><rect x="303" y="381" width="1" height="1" fill="#aaa8c0"/><rect x="317" y="362" width="1" height="1" fill="#aaa8c0"/><rect x="318" y="365" width="1" height="1" fill="#aaa8c0"/><rect x="328" y="341" width="1" height="1" fill="#aaa8c0"/><rect x="317" y="449" width="1" height="1" fill="#aaa8c0"/><rect x="311" y="301" width="1" height="1" fill="#aaa8c0"/><rect x="316" y="437" width="1" height="1" fill="#aaa8c0"/><rect x="311" y="273" width="1" height="1" fill="#aaa8c0"/><rect x="321" y="409" width="1" height="1" fill="#aaa8c0"/><rect x="328" y="356" width="1" height="1" fill="#aaa8c0"/><rect x="308" y="337" width="1" height="1" fill="#aaa8c0"/><rect x="321" y="458" width="1" height="1" fill="#aaa8c0"/><rect x="320" y="441" width="1" height="1" fill="#aaa8c0"/><rect x="308" y="337" width="1" height="1" fill="#aaa8c0"/><rect x="302" y="328" width="1" height="1" fill="#aaa8c0"/><rect x="309" y="463" width="1" height="1" fill="#aaa8c0"/><rect x="304" y="360" width="1" height="1" fill="#aaa8c0"/><rect x="307" y="422" width="1" height="1" fill="#aaa8c0"/><rect x="308" y="373" width="1" height="1" fill="#aaa8c0"/><rect x="328" y="348" width="1" height="1" fill="#aaa8c0"/><rect x="322" y="389" width="1" height="1" fill="#aaa8c0"/><rect x="312" y="365" width="1" height="1" fill="#aaa8c0"/><rect x="303" y="296" width="1" height="1" fill="#aaa8c0"/><rect x="300" y="323" width="1" height="1" fill="#aaa8c0"/><rect x="306" y="447" width="1" height="1" fill="#aaa8c0"/><rect x="321" y="367" width="1" height="1" fill="#aaa8c0"/><rect x="302" y="300" width="1" height="1" fill="#aaa8c0"/><rect x="310" y="310" width="1" height="1" fill="#aaa8c0"/><rect x="314" y="305" width="1" height="1" fill="#aaa8c0"/><rect x="324" y="401" width="1" height="1" fill="#aaa8c0"/><rect x="319" y="460" width="1" height="1" fill="#aaa8c0"/><rect x="328" y="367" width="1" height="1" fill="#aaa8c0"/><rect x="313" y="412" width="1" height="1" fill="#aaa8c0"/><rect x="314" y="306" width="1" height="1" fill="#aaa8c0"/><rect x="323" y="347" width="1" height="1" fill="#aaa8c0"/><rect x="309" y="469" width="1" height="1" fill="#aaa8c0"/><rect x="312" y="391" width="1" height="1" fill="#aaa8c0"/><rect x="301" y="277" width="1" height="1" fill="#aaa8c0"/><rect x="317" y="330" width="1" height="1" fill="#aaa8c0"/><rect x="319" y="346" width="1" height="1" fill="#aaa8c0"/><rect x="320" y="383" width="1" height="1" fill="#aaa8c0"/><rect x="309" y="346" width="1" height="1" fill="#aaa8c0"/><rect x="304" y="274" width="1" height="1" fill="#aaa8c0"/><rect x="327" y="412" width="1" height="1" fill="#aaa8c0"/><rect x="304" y="411" width="1" height="1" fill="#aaa8c0"/><rect x="331" y="282" width="1" height="1" fill="#aaa8c0"/><rect x="300" y="336" width="1" height="1" fill="#aaa8c0"/><rect x="318" y="357" width="1" height="1" fill="#aaa8c0"/><rect x="325" y="313" width="1" height="1" fill="#aaa8c0"/><rect x="307" y="292" width="1" height="1" fill="#aaa8c0"/><rect x="312" y="338" width="1" height="1" fill="#aaa8c0"/><rect x="308" y="443" width="1" height="1" fill="#aaa8c0"/><rect x="320" y="302" width="1" height="1" fill="#aaa8c0"/><rect x="325" y="468" width="1" height="1" fill="#aaa8c0"/><rect x="307" y="400" width="1" height="1" fill="#aaa8c0"/><rect x="308" y="345" width="1" height="1" fill="#aaa8c0"/><rect x="303" y="301" width="1" height="1" fill="#aaa8c0"/><rect x="307" y="393" width="1" height="1" fill="#aaa8c0"/><rect x="317" y="375" width="1" height="1" fill="#aaa8c0"/><rect x="301" y="357" width="1" height="1" fill="#aaa8c0"/><rect x="306" y="283" width="1" height="1" fill="#aaa8c0"/><rect x="311" y="291" width="1" height="1" fill="#aaa8c0"/><rect x="307" y="341" width="1" height="1" fill="#aaa8c0"/><rect x="314" y="410" width="1" height="1" fill="#aaa8c0"/><rect x="318" y="375" width="1" height="1" fill="#aaa8c0"/><rect x="301" y="288" width="1" height="1" fill="#aaa8c0"/><rect x="328" y="335" width="1" height="1" fill="#aaa8c0"/><rect x="327" y="334" width="1" height="1" fill="#aaa8c0"/><rect x="320" y="297" width="1" height="1" fill="#aaa8c0"/><rect x="300" y="304" width="1" height="1" fill="#aaa8c0"/><rect x="322" y="293" width="1" height="1" fill="#aaa8c0"/><rect x="305" y="317" width="1" height="1" fill="#aaa8c0"/><rect x="331" y="290" width="1" height="1" fill="#aaa8c0"/><rect x="320" y="341" width="1" height="1" fill="#aaa8c0"/><rect x="321" y="317" width="1" height="1" fill="#aaa8c0"/><rect x="331" y="286" width="1" height="1" fill="#aaa8c0"/><rect x="307" y="375" width="1" height="1" fill="#aaa8c0"/><rect x="315" y="464" width="1" height="1" fill="#aaa8c0"/><rect x="302" y="301" width="1" height="1" fill="#aaa8c0"/><rect x="317" y="413" width="1" height="1" fill="#aaa8c0"/><rect x="307" y="419" width="1" height="1" fill="#aaa8c0"/><rect x="312" y="392" width="1" height="1" fill="#aaa8c0"/><rect x="322" y="272" width="1" height="1" fill="#aaa8c0"/><rect x="322" y="304" width="1" height="1" fill="#aaa8c0"/><rect x="320" y="295" width="1" height="1" fill="#aaa8c0"/><rect x="309" y="272" width="1" height="1" fill="#aaa8c0"/><rect x="312" y="452" width="1" height="1" fill="#aaa8c0"/><rect x="323" y="459" width="1" height="1" fill="#aaa8c0"/><rect x="319" y="393" width="1" height="1" fill="#aaa8c0"/><rect x="314" y="312" width="1" height="1" fill="#aaa8c0"/><rect x="315" y="341" width="1" height="1" fill="#aaa8c0"/><rect x="315" y="329" width="1" height="1" fill="#aaa8c0"/><rect x="306" y="358" width="1" height="1" fill="#aaa8c0"/><rect x="322" y="430" width="1" height="1" fill="#aaa8c0"/><rect x="324" y="354" width="1" height="1" fill="#aaa8c0"/><rect x="307" y="371" width="1" height="1" fill="#aaa8c0"/><rect x="310" y="365" width="1" height="1" fill="#aaa8c0"/><rect x="322" y="346" width="1" height="1" fill="#aaa8c0"/><rect x="324" y="314" width="1" height="1" fill="#aaa8c0"/><rect x="319" y="406" width="1" height="1" fill="#aaa8c0"/><rect x="299" y="284" width="1" height="1" fill="#aaa8c0"/><rect x="323" y="410" width="1" height="1" fill="#aaa8c0"/><rect x="303" y="319" width="1" height="1" fill="#aaa8c0"/><rect x="315" y="435" width="1" height="1" fill="#aaa8c0"/><rect x="326" y="372" width="1" height="1" fill="#aaa8c0"/><rect x="315" y="446" width="1" height="1" fill="#aaa8c0"/><rect x="328" y="304" width="1" height="1" fill="#aaa8c0"/><rect x="314" y="447" width="1" height="1" fill="#aaa8c0"/><rect x="311" y="311" width="1" height="1" fill="#aaa8c0"/><rect x="313" y="296" width="1" height="1" fill="#aaa8c0"/><rect x="308" y="353" width="1" height="1" fill="#aaa8c0"/><rect x="310" y="276" width="1" height="1" fill="#aaa8c0"/><rect x="324" y="274" width="1" height="1" fill="#aaa8c0"/><rect x="319" y="340" width="1" height="1" fill="#aaa8c0"/><rect x="311" y="410" width="1" height="1" fill="#aaa8c0"/><rect x="328" y="313" width="1" height="1" fill="#aaa8c0"/><rect x="317" y="320" width="1" height="1" fill="#aaa8c0"/><rect x="318" y="339" width="1" height="1" fill="#aaa8c0"/><rect x="312" y="315" width="1" height="1" fill="#aaa8c0"/><rect x="304" y="346" width="1" height="1" fill="#aaa8c0"/><rect x="325" y="279" width="1" height="1" fill="#aaa8c0"/><rect x="314" y="327" width="1" height="1" fill="#aaa8c0"/><rect x="324" y="400" width="1" height="1" fill="#aaa8c0"/><rect x="313" y="325" width="1" height="1" fill="#aaa8c0"/><rect x="300" y="272" width="1" height="1" fill="#aaa8c0"/><rect x="315" y="347" width="1" height="1" fill="#aaa8c0"/><rect x="315" y="331" width="1" height="1" fill="#aaa8c0"/><rect x="312" y="377" width="1" height="1" fill="#aaa8c0"/><rect x="317" y="341" width="1" height="1" fill="#aaa8c0"/><rect x="316" y="295" width="1" height="1" fill="#aaa8c0"/><rect x="325" y="339" width="1" height="1" fill="#aaa8c0"/><rect x="328" y="341" width="1" height="1" fill="#aaa8c0"/><rect x="305" y="346" width="1" height="1" fill="#aaa8c0"/><rect x="314" y="408" width="1" height="1" fill="#aaa8c0"/><rect x="321" y="317" width="1" height="1" fill="#aaa8c0"/><rect x="321" y="307" width="1" height="1" fill="#aaa8c0"/><rect x="304" y="325" width="1" height="1" fill="#aaa8c0"/><rect x="305" y="371" width="1" height="1" fill="#aaa8c0"/><rect x="316" y="335" width="1" height="1" fill="#aaa8c0"/><rect x="317" y="399" width="1" height="1" fill="#aaa8c0"/><rect x="325" y="317" width="1" height="1" fill="#aaa8c0"/><rect x="312" y="388" width="1" height="1" fill="#aaa8c0"/><rect x="324" y="364" width="1" height="1" fill="#aaa8c0"/><rect x="320" y="464" width="1" height="1" fill="#aaa8c0"/><rect x="305" y="327" width="1" height="1" fill="#aaa8c0"/><rect x="312" y="275" width="1" height="1" fill="#aaa8c0"/><rect x="316" y="443" width="1" height="1" fill="#aaa8c0"/><rect x="299" y="277" width="1" height="1" fill="#aaa8c0"/><rect x="302" y="286" width="1" height="1" fill="#aaa8c0"/><rect x="308" y="304" width="1" height="1" fill="#aaa8c0"/><rect x="323" y="461" width="1" height="1" fill="#aaa8c0"/><rect x="320" y="462" width="1" height="1" fill="#aaa8c0"/><rect x="307" y="398" width="1" height="1" fill="#aaa8c0"/><rect x="308" y="312" width="1" height="1" fill="#aaa8c0"/><rect x="310" y="425" width="1" height="1" fill="#aaa8c0"/><rect x="329" y="318" width="1" height="1" fill="#aaa8c0"/><rect x="315" y="347" width="1" height="1" fill="#aaa8c0"/><rect x="323" y="277" width="1" height="1" fill="#aaa8c0"/><rect x="322" y="315" width="1" height="1" fill="#aaa8c0"/><rect x="307" y="376" width="1" height="1" fill="#aaa8c0"/><rect x="314" y="328" width="1" height="1" fill="#aaa8c0"/><rect x="307" y="349" width="1" height="1" fill="#aaa8c0"/><rect x="306" y="395" width="1" height="1" fill="#aaa8c0"/><rect x="319" y="449" width="1" height="1" fill="#aaa8c0"/><rect x="308" y="410" width="1" height="1" fill="#aaa8c0"/><rect x="315" y="292" width="1" height="1" fill="#aaa8c0"/><rect x="327" y="302" width="1" height="1" fill="#aaa8c0"/><rect x="305" y="309" width="1" height="1" fill="#aaa8c0"/><rect x="314" y="369" width="1" height="1" fill="#aaa8c0"/><rect x="302" y="375" width="1" height="1" fill="#aaa8c0"/><rect x="317" y="279" width="1" height="1" fill="#aaa8c0"/><rect x="312" y="390" width="1" height="1" fill="#aaa8c0"/><rect x="307" y="404" width="1" height="1" fill="#aaa8c0"/><rect x="305" y="385" width="1" height="1" fill="#aaa8c0"/><rect x="306" y="444" width="1" height="1" fill="#aaa8c0"/><rect x="311" y="333" width="1" height="1" fill="#aaa8c0"/><rect x="307" y="434" width="1" height="1" fill="#aaa8c0"/><rect x="327" y="415" width="1" height="1" fill="#aaa8c0"/><rect x="323" y="362" width="1" height="1" fill="#aaa8c0"/><rect x="327" y="308" width="1" height="1" fill="#aaa8c0"/><rect x="317" y="355" width="1" height="1" fill="#aaa8c0"/><rect x="308" y="367" width="1" height="1" fill="#aaa8c0"/><rect x="305" y="386" width="1" height="1" fill="#aaa8c0"/><rect x="329" y="348" width="1" height="1" fill="#aaa8c0"/><rect x="319" y="274" width="1" height="1" fill="#aaa8c0"/><rect x="322" y="298" width="1" height="1" fill="#aaa8c0"/><rect x="319" y="404" width="1" height="1" fill="#aaa8c0"/><rect x="308" y="276" width="1" height="1" fill="#aaa8c0"/><rect x="308" y="298" width="1" height="1" fill="#aaa8c0"/><rect x="305" y="384" width="1" height="1" fill="#aaa8c0"/><rect x="315" y="309" width="1" height="1" fill="#aaa8c0"/><rect x="313" y="405" width="1" height="1" fill="#aaa8c0"/><rect x="307" y="364" width="1" height="1" fill="#aaa8c0"/><rect x="309" y="362" width="1" height="1" fill="#aaa8c0"/><rect x="312" y="303" width="1" height="1" fill="#aaa8c0"/><rect x="311" y="465" width="1" height="1" fill="#aaa8c0"/><rect x="329" y="278" width="1" height="1" fill="#aaa8c0"/><rect x="321" y="334" width="1" height="1" fill="#aaa8c0"/><rect x="301" y="284" width="1" height="1" fill="#aaa8c0"/><rect x="300" y="334" width="1" height="1" fill="#aaa8c0"/><rect x="301" y="303" width="1" height="1" fill="#aaa8c0"/><rect x="315" y="290" width="1" height="1" fill="#aaa8c0"/><rect x="312" y="300" width="1" height="1" fill="#aaa8c0"/><rect x="325" y="323" width="1" height="1" fill="#aaa8c0"/><rect x="301" y="281" width="1" height="1" fill="#aaa8c0"/><rect x="305" y="395" width="1" height="1" fill="#aaa8c0"/><rect x="318" y="285" width="1" height="1" fill="#aaa8c0"/><rect x="302" y="328" width="1" height="1" fill="#aaa8c0"/><rect x="321" y="376" width="1" height="1" fill="#aaa8c0"/><rect x="326" y="349" width="1" height="1" fill="#aaa8c0"/><rect x="327" y="328" width="1" height="1" fill="#aaa8c0"/><rect x="312" y="475" width="1" height="1" fill="#aaa8c0"/><rect x="319" y="314" width="1" height="1" fill="#aaa8c0"/><rect x="304" y="288" width="1" height="1" fill="#aaa8c0"/><rect x="305" y="325" width="1" height="1" fill="#aaa8c0"/><rect x="304" y="367" width="1" height="1" fill="#aaa8c0"/><rect x="320" y="369" width="1" height="1" fill="#aaa8c0"/><rect x="330" y="280" width="1" height="1" fill="#aaa8c0"/><rect x="312" y="352" width="1" height="1" fill="#aaa8c0"/><rect x="319" y="415" width="1" height="1" fill="#aaa8c0"/><rect x="316" y="354" width="1" height="1" fill="#aaa8c0"/><rect x="330" y="310" width="1" height="1" fill="#aaa8c0"/><rect x="315" y="432" width="1" height="1" fill="#aaa8c0"/><rect x="325" y="425" width="1" height="1" fill="#aaa8c0"/><rect x="311" y="443" width="1" height="1" fill="#aaa8c0"/><rect x="324" y="336" width="1" height="1" fill="#aaa8c0"/><rect x="319" y="445" width="1" height="1" fill="#aaa8c0"/><rect x="317" y="307" width="1" height="1" fill="#aaa8c0"/><rect x="302" y="315" width="1" height="1" fill="#aaa8c0"/><rect x="306" y="303" width="1" height="1" fill="#aaa8c0"/><rect x="300" y="327" width="1" height="1" fill="#aaa8c0"/><rect x="302" y="361" width="1" height="1" fill="#aaa8c0"/><rect x="305" y="272" width="1" height="1" fill="#aaa8c0"/><rect x="317" y="292" width="1" height="1" fill="#aaa8c0"/><rect x="311" y="331" width="1" height="1" fill="#aaa8c0"/><rect x="309" y="475" width="1" height="1" fill="#aaa8c0"/><rect x="320" y="418" width="1" height="1" fill="#aaa8c0"/><rect x="306" y="385" width="1" height="1" fill="#aaa8c0"/><rect x="322" y="417" width="1" height="1" fill="#aaa8c0"/><rect x="326" y="401" width="1" height="1" fill="#aaa8c0"/><rect x="311" y="339" width="1" height="1" fill="#aaa8c0"/><rect x="322" y="293" width="1" height="1" fill="#aaa8c0"/><rect x="322" y="408" width="1" height="1" fill="#aaa8c0"/><rect x="322" y="363" width="1" height="1" fill="#aaa8c0"/><rect x="309" y="399" width="1" height="1" fill="#aaa8c0"/><rect x="307" y="412" width="1" height="1" fill="#aaa8c0"/><rect x="309" y="299" width="1" height="1" fill="#aaa8c0"/><rect x="315" y="467" width="1" height="1" fill="#aaa8c0"/><rect x="304" y="307" width="1" height="1" fill="#aaa8c0"/><rect x="298" y="287" width="1" height="1" fill="#aaa8c0"/><rect x="327" y="371" width="1" height="1" fill="#aaa8c0"/><rect x="323" y="357" width="1" height="1" fill="#aaa8c0"/><rect x="312" y="334" width="1" height="1" fill="#aaa8c0"/><rect x="330" y="338" width="1" height="1" fill="#aaa8c0"/><rect x="299" y="313" width="1" height="1" fill="#aaa8c0"/><rect x="321" y="359" width="1" height="1" fill="#aaa8c0"/><rect x="318" y="471" width="1" height="1" fill="#aaa8c0"/><rect x="305" y="373" width="1" height="1" fill="#aaa8c0"/><rect x="318" y="422" width="1" height="1" fill="#aaa8c0"/><rect x="327" y="295" width="1" height="1" fill="#aaa8c0"/><rect x="320" y="281" width="1" height="1" fill="#aaa8c0"/><rect x="325" y="328" width="1" height="1" fill="#aaa8c0"/><rect x="318" y="332" width="1" height="1" fill="#aaa8c0"/><rect x="328" y="340" width="1" height="1" fill="#aaa8c0"/><rect x="317" y="388" width="1" height="1" fill="#aaa8c0"/><rect x="321" y="366" width="1" height="1" fill="#aaa8c0"/><rect x="316" y="370" width="1" height="1" fill="#aaa8c0"/><rect x="304" y="417" width="1" height="1" fill="#aaa8c0"/><rect x="302" y="337" width="1" height="1" fill="#aaa8c0"/><rect x="309" y="405" width="1" height="1" fill="#aaa8c0"/><rect x="322" y="392" width="1" height="1" fill="#aaa8c0"/><rect x="305" y="343" width="1" height="1" fill="#aaa8c0"/><rect x="326" y="387" width="1" height="1" fill="#aaa8c0"/><rect x="314" y="275" width="1" height="1" fill="#aaa8c0"/><rect x="304" y="384" width="1" height="1" fill="#aaa8c0"/><rect x="321" y="299" width="1" height="1" fill="#aaa8c0"/><rect x="325" y="301" width="1" height="1" fill="#aaa8c0"/><rect x="325" y="316" width="1" height="1" fill="#aaa8c0"/><rect x="308" y="450" width="1" height="1" fill="#aaa8c0"/><rect x="319" y="429" width="1" height="1" fill="#aaa8c0"/><rect x="312" y="443" width="1" height="1" fill="#aaa8c0"/><rect x="312" y="443" width="1" height="1" fill="#aaa8c0"/><rect x="324" y="412" width="1" height="1" fill="#aaa8c0"/><rect x="304" y="323" width="1" height="1" fill="#aaa8c0"/><rect x="311" y="449" width="1" height="1" fill="#aaa8c0"/><rect x="307" y="415" width="1" height="1" fill="#aaa8c0"/><rect x="311" y="432" width="1" height="1" fill="#aaa8c0"/><rect x="324" y="292" width="1" height="1" fill="#aaa8c0"/><rect x="306" y="368" width="1" height="1" fill="#aaa8c0"/><rect x="327" y="293" width="1" height="1" fill="#aaa8c0"/><rect x="326" y="322" width="1" height="1" fill="#aaa8c0"/><rect x="302" y="356" width="1" height="1" fill="#aaa8c0"/><rect x="322" y="434" width="1" height="1" fill="#aaa8c0"/><rect x="306" y="381" width="1" height="1" fill="#aaa8c0"/><rect x="306" y="330" width="1" height="1" fill="#aaa8c0"/><rect x="326" y="339" width="1" height="1" fill="#aaa8c0"/><rect x="328" y="350" width="1" height="1" fill="#aaa8c0"/><rect x="325" y="364" width="1" height="1" fill="#aaa8c0"/><rect x="303" y="324" width="1" height="1" fill="#aaa8c0"/><rect x="306" y="375" width="1" height="1" fill="#aaa8c0"/><rect x="315" y="361" width="1" height="1" fill="#aaa8c0"/><rect x="326" y="350" width="1" height="1" fill="#aaa8c0"/><rect x="326" y="403" width="1" height="1" fill="#aaa8c0"/><rect x="327" y="363" width="1" height="1" fill="#aaa8c0"/><rect x="315" y="458" width="1" height="1" fill="#aaa8c0"/><rect x="313" y="446" width="1" height="1" fill="#aaa8c0"/><rect x="307" y="436" width="1" height="1" fill="#aaa8c0"/><rect x="317" y="349" width="1" height="1" fill="#aaa8c0"/><rect x="318" y="455" width="1" height="1" fill="#aaa8c0"/><rect x="317" y="286" width="1" height="1" fill="#aaa8c0"/><rect x="313" y="364" width="1" height="1" fill="#aaa8c0"/><rect x="305" y="344" width="1" height="1" fill="#aaa8c0"/><rect x="315" y="323" width="1" height="1" fill="#aaa8c0"/><rect x="317" y="363" width="1" height="1" fill="#aaa8c0"/><rect x="324" y="304" width="1" height="1" fill="#aaa8c0"/><rect x="303" y="382" width="1" height="1" fill="#aaa8c0"/><rect x="321" y="285" width="1" height="1" fill="#aaa8c0"/><rect x="324" y="350" width="1" height="1" fill="#aaa8c0"/><rect x="308" y="385" width="1" height="1" fill="#aaa8c0"/><rect x="298" y="281" width="1" height="1" fill="#aaa8c0"/><rect x="311" y="423" width="1" height="1" fill="#aaa8c0"/><rect x="325" y="310" width="1" height="1" fill="#aaa8c0"/><rect x="311" y="365" width="1" height="1" fill="#aaa8c0"/><rect x="305" y="381" width="1" height="1" fill="#aaa8c0"/><rect x="323" y="363" width="1" height="1" fill="#aaa8c0"/><rect x="309" y="319" width="1" height="1" fill="#aaa8c0"/><rect x="313" y="439" width="1" height="1" fill="#aaa8c0"/><rect x="316" y="314" width="1" height="1" fill="#aaa8c0"/><rect x="305" y="279" width="1" height="1" fill="#aaa8c0"/><rect x="323" y="325" width="1" height="1" fill="#aaa8c0"/><rect x="309" y="422" width="1" height="1" fill="#aaa8c0"/><rect x="321" y="382" width="1" height="1" fill="#aaa8c0"/><rect x="310" y="312" width="1" height="1" fill="#aaa8c0"/><rect x="322" y="291" width="1" height="1" fill="#aaa8c0"/><rect x="315" y="291" width="1" height="1" fill="#aaa8c0"/><rect x="328" y="327" width="1" height="1" fill="#aaa8c0"/><rect x="321" y="330" width="1" height="1" fill="#aaa8c0"/><rect x="307" y="467" width="1" height="1" fill="#aaa8c0"/><rect x="306" y="340" width="1" height="1" fill="#aaa8c0"/><rect x="302" y="360" width="1" height="1" fill="#aaa8c0"/><rect x="306" y="274" width="1" height="1" fill="#aaa8c0"/><rect x="317" y="309" width="1" height="1" fill="#aaa8c0"/><rect x="321" y="380" width="1" height="1" fill="#aaa8c0"/><rect x="324" y="342" width="1" height="1" fill="#aaa8c0"/><rect x="311" y="387" width="1" height="1" fill="#aaa8c0"/><rect x="318" y="299" width="1" height="1" fill="#aaa8c0"/><rect x="328" y="292" width="1" height="1" fill="#aaa8c0"/><rect x="305" y="278" width="1" height="1" fill="#aaa8c0"/><rect x="311" y="382" width="1" height="1" fill="#aaa8c0"/><rect x="307" y="374" width="1" height="1" fill="#aaa8c0"/><rect x="304" y="302" width="1" height="1" fill="#aaa8c0"/><rect x="306" y="400" width="1" height="1" fill="#aaa8c0"/><rect x="314" y="316" width="1" height="1" fill="#aaa8c0"/><rect x="311" y="353" width="1" height="1" fill="#aaa8c0"/><rect x="310" y="471" width="1" height="1" fill="#aaa8c0"/><rect x="305" y="384" width="1" height="1" fill="#aaa8c0"/><rect x="321" y="446" width="1" height="1" fill="#aaa8c0"/><rect x="312" y="433" width="1" height="1" fill="#aaa8c0"/><rect x="328" y="359" width="1" height="1" fill="#aaa8c0"/><rect x="318" y="417" width="1" height="1" fill="#aaa8c0"/><rect x="312" y="275" width="1" height="1" fill="#aaa8c0"/><rect x="310" y="394" width="1" height="1" fill="#aaa8c0"/><rect x="307" y="278" width="1" height="1" fill="#aaa8c0"/><rect x="332" y="280" width="1" height="1" fill="#aaa8c0"/><rect x="320" y="302" width="1" height="1" fill="#aaa8c0"/><rect x="301" y="357" width="1" height="1" fill="#aaa8c0"/><rect x="320" y="468" width="1" height="1" fill="#aaa8c0"/><rect x="314" y="280" width="1" height="1" fill="#aaa8c0"/><rect x="306" y="377" width="1" height="1" fill="#aaa8c0"/><rect x="314" y="326" width="1" height="1" fill="#aaa8c0"/><rect x="325" y="405" width="1" height="1" fill="#aaa8c0"/><rect x="328" y="377" width="1" height="1" fill="#aaa8c0"/><rect x="304" y="339" width="1" height="1" fill="#aaa8c0"/><rect x="311" y="422" width="1" height="1" fill="#aaa8c0"/><rect x="322" y="386" width="1" height="1" fill="#aaa8c0"/><rect x="325" y="306" width="1" height="1" fill="#aaa8c0"/><rect x="308" y="437" width="1" height="1" fill="#aaa8c0"/><rect x="319" y="421" width="1" height="1" fill="#aaa8c0"/><rect x="319" y="387" width="1" height="1" fill="#aaa8c0"/><rect x="315" y="407" width="1" height="1" fill="#aaa8c0"/><rect x="312" y="298" width="1" height="1" fill="#aaa8c0"/><rect x="311" y="361" width="1" height="1" fill="#aaa8c0"/><rect x="311" y="352" width="1" height="1" fill="#aaa8c0"/><rect x="311" y="275" width="1" height="1" fill="#aaa8c0"/><rect x="312" y="364" width="1" height="1" fill="#aaa8c0"/><rect x="312" y="452" width="1" height="1" fill="#aaa8c0"/><rect x="326" y="284" width="1" height="1" fill="#aaa8c0"/><rect x="321" y="321" width="1" height="1" fill="#aaa8c0"/><rect x="323" y="436" width="1" height="1" fill="#aaa8c0"/><rect x="331" y="295" width="1" height="1" fill="#aaa8c0"/><rect x="315" y="438" width="1" height="1" fill="#aaa8c0"/><rect x="318" y="455" width="1" height="1" fill="#aaa8c0"/><rect x="312" y="292" width="1" height="1" fill="#aaa8c0"/><rect x="322" y="323" width="1" height="1" fill="#aaa8c0"/><rect x="309" y="297" width="1" height="1" fill="#aaa8c0"/><rect x="306" y="362" width="1" height="1" fill="#aaa8c0"/><rect x="313" y="466" width="1" height="1" fill="#aaa8c0"/><rect x="319" y="356" width="1" height="1" fill="#aaa8c0"/><rect x="304" y="297" width="1" height="1" fill="#aaa8c0"/><rect x="327" y="335" width="1" height="1" fill="#aaa8c0"/><rect x="327" y="325" width="1" height="1" fill="#aaa8c0"/><rect x="303" y="306" width="1" height="1" fill="#aaa8c0"/><rect x="311" y="316" width="1" height="1" fill="#aaa8c0"/><rect x="323" y="369" width="1" height="1" fill="#aaa8c0"/><rect x="321" y="308" width="1" height="1" fill="#aaa8c0"/><rect x="305" y="286" width="1" height="1" fill="#aaa8c0"/><rect x="310" y="331" width="1" height="1" fill="#aaa8c0"/><rect x="320" y="434" width="1" height="1" fill="#aaa8c0"/><rect x="316" y="305" width="1" height="1" fill="#aaa8c0"/><rect x="325" y="292" width="1" height="1" fill="#aaa8c0"/><rect x="329" y="310" width="1" height="1" fill="#aaa8c0"/><rect x="316" y="401" width="1" height="1" fill="#aaa8c0"/><rect x="302" y="309" width="1" height="1" fill="#aaa8c0"/><rect x="315" y="307" width="1" height="1" fill="#aaa8c0"/><rect x="321" y="370" width="1" height="1" fill="#aaa8c0"/><rect x="298" y="280" width="1" height="1" fill="#aaa8c0"/><rect x="306" y="396" width="1" height="1" fill="#aaa8c0"/><rect x="321" y="332" width="1" height="1" fill="#aaa8c0"/><rect x="324" y="294" width="1" height="1" fill="#aaa8c0"/><rect x="311" y="299" width="1" height="1" fill="#aaa8c0"/><rect x="316" y="298" width="1" height="1" fill="#aaa8c0"/><rect x="326" y="339" width="1" height="1" fill="#aaa8c0"/><rect x="317" y="461" width="1" height="1" fill="#aaa8c0"/><rect x="301" y="296" width="1" height="1" fill="#aaa8c0"/><rect x="304" y="355" width="1" height="1" fill="#aaa8c0"/><rect x="322" y="417" width="1" height="1" fill="#aaa8c0"/><rect x="321" y="301" width="1" height="1" fill="#aaa8c0"/><rect x="305" y="348" width="1" height="1" fill="#aaa8c0"/><rect x="322" y="338" width="1" height="1" fill="#aaa8c0"/><rect x="317" y="449" width="1" height="1" fill="#aaa8c0"/><rect x="312" y="454" width="1" height="1" fill="#aaa8c0"/><rect x="330" y="289" width="1" height="1" fill="#aaa8c0"/><rect x="316" y="280" width="1" height="1" fill="#aaa8c0"/><rect x="313" y="386" width="1" height="1" fill="#aaa8c0"/><rect x="319" y="300" width="1" height="1" fill="#aaa8c0"/><rect x="325" y="438" width="1" height="1" fill="#aaa8c0"/><rect x="304" y="320" width="1" height="1" fill="#aaa8c0"/><rect x="306" y="381" width="1" height="1" fill="#aaa8c0"/><rect x="322" y="380" width="1" height="1" fill="#aaa8c0"/><rect x="309" y="353" width="1" height="1" fill="#aaa8c0"/><rect x="319" y="469" width="1" height="1" fill="#aaa8c0"/><rect x="315" y="334" width="1" height="1" fill="#aaa8c0"/><rect x="324" y="364" width="1" height="1" fill="#aaa8c0"/><rect x="302" y="381" width="1" height="1" fill="#aaa8c0"/><rect x="306" y="372" width="1" height="1" fill="#aaa8c0"/><rect x="325" y="341" width="1" height="1" fill="#aaa8c0"/><rect x="319" y="348" width="1" height="1" fill="#aaa8c0"/><rect x="300" y="281" width="1" height="1" fill="#aaa8c0"/><rect x="302" y="325" width="1" height="1" fill="#aaa8c0"/><rect x="317" y="459" width="1" height="1" fill="#aaa8c0"/><rect x="320" y="472" width="1" height="1" fill="#aaa8c0"/><rect x="302" y="297" width="1" height="1" fill="#aaa8c0"/><rect x="324" y="359" width="1" height="1" fill="#aaa8c0"/><rect x="318" y="410" width="1" height="1" fill="#aaa8c0"/><rect x="321" y="333" width="1" height="1" fill="#aaa8c0"/><rect x="319" y="280" width="1" height="1" fill="#aaa8c0"/><rect x="327" y="310" width="1" height="1" fill="#aaa8c0"/><rect x="316" y="447" width="1" height="1" fill="#aaa8c0"/><rect x="322" y="308" width="1" height="1" fill="#aaa8c0"/><rect x="309" y="273" width="1" height="1" fill="#aaa8c0"/><rect x="328" y="383" width="1" height="1" fill="#aaa8c0"/><rect x="316" y="348" width="1" height="1" fill="#aaa8c0"/><rect x="306" y="277" width="1" height="1" fill="#aaa8c0"/><rect x="327" y="390" width="1" height="1" fill="#aaa8c0"/><rect x="308" y="357" width="1" height="1" fill="#aaa8c0"/><rect x="307" y="347" width="1" height="1" fill="#aaa8c0"/><rect x="306" y="417" width="1" height="1" fill="#aaa8c0"/><rect x="328" y="366" width="1" height="1" fill="#aaa8c0"/><rect x="330" y="328" width="1" height="1" fill="#aaa8c0"/><rect x="323" y="422" width="1" height="1" fill="#aaa8c0"/><rect x="325" y="356" width="1" height="1" fill="#aaa8c0"/><rect x="300" y="313" width="1" height="1" fill="#aaa8c0"/><rect x="306" y="382" width="1" height="1" fill="#aaa8c0"/><rect x="318" y="310" width="1" height="1" fill="#aaa8c0"/><rect x="302" y="291" width="1" height="1" fill="#aaa8c0"/><rect x="326" y="324" width="1" height="1" fill="#aaa8c0"/><rect x="318" y="273" width="1" height="1" fill="#aaa8c0"/><rect x="308" y="393" width="1" height="1" fill="#aaa8c0"/><rect x="301" y="287" width="1" height="1" fill="#aaa8c0"/><rect x="330" y="317" width="1" height="1" fill="#aaa8c0"/><rect x="314" y="338" width="1" height="1" fill="#aaa8c0"/><rect x="321" y="305" width="1" height="1" fill="#aaa8c0"/><rect x="306" y="338" width="1" height="1" fill="#aaa8c0"/><rect x="313" y="292" width="1" height="1" fill="#aaa8c0"/><rect x="313" y="425" width="1" height="1" fill="#aaa8c0"/><rect x="323" y="298" width="1" height="1" fill="#aaa8c0"/><rect x="320" y="369" width="1" height="1" fill="#aaa8c0"/><rect x="316" y="310" width="1" height="1" fill="#aaa8c0"/><rect x="317" y="456" width="1" height="1" fill="#aaa8c0"/><rect x="309" y="401" width="1" height="1" fill="#aaa8c0"/><rect x="313" y="414" width="1" height="1" fill="#aaa8c0"/><rect x="308" y="406" width="1" height="1" fill="#aaa8c0"/><rect x="302" y="343" width="1" height="1" fill="#aaa8c0"/><rect x="322" y="335" width="1" height="1" fill="#aaa8c0"/><rect x="320" y="401" width="1" height="1" fill="#aaa8c0"/><rect x="298" y="272" width="1" height="1" fill="#aaa8c0"/><rect x="308" y="380" width="1" height="1" fill="#aaa8c0"/><rect x="310" y="399" width="1" height="1" fill="#aaa8c0"/><rect x="327" y="323" width="1" height="1" fill="#aaa8c0"/><rect x="324" y="333" width="1" height="1" fill="#aaa8c0"/><rect x="311" y="294" width="1" height="1" fill="#aaa8c0"/><rect x="314" y="379" width="1" height="1" fill="#aaa8c0"/><rect x="324" y="476" width="1" height="1" fill="#aaa8c0"/><rect x="308" y="423" width="1" height="1" fill="#aaa8c0"/><rect x="321" y="279" width="1" height="1" fill="#aaa8c0"/><rect x="316" y="327" width="1" height="1" fill="#aaa8c0"/><rect x="309" y="276" width="1" height="1" fill="#aaa8c0"/><rect x="328" y="285" width="1" height="1" fill="#aaa8c0"/><rect x="322" y="421" width="1" height="1" fill="#aaa8c0"/><rect x="327" y="274" width="1" height="1" fill="#aaa8c0"/><rect x="303" y="320" width="1" height="1" fill="#aaa8c0"/><rect x="317" y="430" width="1" height="1" fill="#aaa8c0"/><rect x="308" y="462" width="1" height="1" fill="#aaa8c0"/><rect x="329" y="338" width="1" height="1" fill="#aaa8c0"/><rect x="302" y="284" width="1" height="1" fill="#aaa8c0"/><rect x="321" y="357" width="1" height="1" fill="#aaa8c0"/><rect x="317" y="446" width="1" height="1" fill="#aaa8c0"/><rect x="303" y="356" width="1" height="1" fill="#aaa8c0"/><rect x="302" y="292" width="1" height="1" fill="#aaa8c0"/><rect x="323" y="282" width="1" height="1" fill="#aaa8c0"/><rect x="318" y="420" width="1" height="1" fill="#aaa8c0"/><rect x="312" y="318" width="1" height="1" fill="#aaa8c0"/><rect x="301" y="326" width="1" height="1" fill="#aaa8c0"/><rect x="314" y="334" width="1" height="1" fill="#aaa8c0"/><rect x="322" y="403" width="1" height="1" fill="#aaa8c0"/><rect x="309" y="473" width="1" height="1" fill="#aaa8c0"/><rect x="320" y="295" width="1" height="1" fill="#aaa8c0"/><rect x="306" y="325" width="1" height="1" fill="#aaa8c0"/><rect x="305" y="272" width="1" height="1" fill="#aaa8c0"/><rect x="311" y="338" width="1" height="1" fill="#aaa8c0"/><rect x="316" y="444" width="1" height="1" fill="#aaa8c0"/><rect x="329" y="272" width="1" height="1" fill="#aaa8c0"/><rect x="308" y="440" width="1" height="1" fill="#aaa8c0"/><rect x="305" y="375" width="1" height="1" fill="#aaa8c0"/><rect x="320" y="337" width="1" height="1" fill="#aaa8c0"/><rect x="312" y="401" width="1" height="1" fill="#aaa8c0"/><rect x="324" y="444" width="1" height="1" fill="#aaa8c0"/><rect x="303" y="287" width="1" height="1" fill="#aaa8c0"/><rect x="323" y="449" width="1" height="1" fill="#aaa8c0"/><rect x="308" y="350" width="1" height="1" fill="#aaa8c0"/><rect x="309" y="390" width="1" height="1" fill="#aaa8c0"/><rect x="319" y="300" width="1" height="1" fill="#aaa8c0"/><rect x="324" y="403" width="1" height="1" fill="#aaa8c0"/><rect x="328" y="287" width="1" height="1" fill="#aaa8c0"/><rect x="316" y="317" width="1" height="1" fill="#aaa8c0"/><rect x="317" y="277" width="1" height="1" fill="#aaa8c0"/><rect x="311" y="393" width="1" height="1" fill="#aaa8c0"/><rect x="325" y="359" width="1" height="1" fill="#aaa8c0"/><rect x="319" y="382" width="1" height="1" fill="#aaa8c0"/><rect x="321" y="469" width="1" height="1" fill="#aaa8c0"/><rect x="313" y="316" width="1" height="1" fill="#aaa8c0"/><rect x="306" y="319" width="1" height="1" fill="#aaa8c0"/><rect x="321" y="359" width="1" height="1" fill="#aaa8c0"/><rect x="321" y="475" width="1" height="1" fill="#aaa8c0"/><rect x="315" y="326" width="1" height="1" fill="#aaa8c0"/><rect x="310" y="368" width="1" height="1" fill="#aaa8c0"/><rect x="300" y="293" width="1" height="1" fill="#aaa8c0"/><rect x="310" y="307" width="1" height="1" fill="#aaa8c0"/><rect x="312" y="375" width="1" height="1" fill="#aaa8c0"/><rect x="310" y="387" width="1" height="1" fill="#aaa8c0"/><rect x="322" y="344" width="1" height="1" fill="#aaa8c0"/><rect x="302" y="373" width="1" height="1" fill="#aaa8c0"/><rect x="310" y="299" width="1" height="1" fill="#aaa8c0"/><rect x="328" y="354" width="1" height="1" fill="#aaa8c0"/><rect x="328" y="362" width="1" height="1" fill="#aaa8c0"/><rect x="323" y="404" width="1" height="1" fill="#aaa8c0"/><rect x="306" y="328" width="1" height="1" fill="#aaa8c0"/><rect x="330" y="327" width="1" height="1" fill="#aaa8c0"/><rect x="325" y="295" width="1" height="1" fill="#aaa8c0"/><rect x="324" y="287" width="1" height="1" fill="#aaa8c0"/><rect x="307" y="418" width="1" height="1" fill="#aaa8c0"/><rect x="317" y="305" width="1" height="1" fill="#aaa8c0"/><rect x="305" y="370" width="1" height="1" fill="#aaa8c0"/><rect x="322" y="326" width="1" height="1" fill="#aaa8c0"/><rect x="325" y="376" width="1" height="1" fill="#aaa8c0"/><rect x="303" y="282" width="1" height="1" fill="#aaa8c0"/><rect x="314" y="377" width="1" height="1" fill="#aaa8c0"/><rect x="328" y="335" width="1" height="1" fill="#aaa8c0"/><rect x="308" y="462" width="1" height="1" fill="#aaa8c0"/><rect x="308" y="352" width="1" height="1" fill="#aaa8c0"/><rect x="308" y="425" width="1" height="1" fill="#aaa8c0"/><rect x="326" y="376" width="1" height="1" fill="#aaa8c0"/><rect x="323" y="365" width="1" height="1" fill="#aaa8c0"/><rect x="330" y="310" width="1" height="1" fill="#aaa8c0"/><rect x="300" y="274" width="1" height="1" fill="#aaa8c0"/><rect x="300" y="281" width="1" height="1" fill="#aaa8c0"/><rect x="311" y="352" width="1" height="1" fill="#aaa8c0"/><rect x="305" y="378" width="1" height="1" fill="#aaa8c0"/><rect x="321" y="339" width="1" height="1" fill="#aaa8c0"/><rect x="300" y="296" width="1" height="1" fill="#aaa8c0"/><rect x="329" y="326" width="1" height="1" fill="#aaa8c0"/><rect x="309" y="471" width="1" height="1" fill="#aaa8c0"/><rect x="315" y="435" width="1" height="1" fill="#aaa8c0"/><rect x="302" y="296" width="1" height="1" fill="#aaa8c0"/><rect x="324" y="397" width="1" height="1" fill="#aaa8c0"/><rect x="331" y="274" width="1" height="1" fill="#aaa8c0"/><rect x="326" y="326" width="1" height="1" fill="#aaa8c0"/><rect x="328" y="294" width="1" height="1" fill="#aaa8c0"/><rect x="303" y="387" width="1" height="1" fill="#aaa8c0"/><rect x="322" y="396" width="1" height="1" fill="#aaa8c0"/><rect x="302" y="317" width="1" height="1" fill="#aaa8c0"/><rect x="325" y="294" width="1" height="1" fill="#aaa8c0"/><rect x="326" y="321" width="1" height="1" fill="#aaa8c0"/><rect x="317" y="347" width="1" height="1" fill="#aaa8c0"/><rect x="309" y="309" width="1" height="1" fill="#aaa8c0"/><rect x="302" y="369" width="1" height="1" fill="#aaa8c0"/><rect x="315" y="395" width="1" height="1" fill="#aaa8c0"/><rect x="316" y="324" width="1" height="1" fill="#aaa8c0"/><rect x="315" y="318" width="1" height="1" fill="#aaa8c0"/><rect x="325" y="444" width="1" height="1" fill="#aaa8c0"/><rect x="320" y="341" width="1" height="1" fill="#aaa8c0"/><rect x="324" y="305" width="1" height="1" fill="#aaa8c0"/><rect x="306" y="412" width="1" height="1" fill="#aaa8c0"/><rect x="300" y="316" width="1" height="1" fill="#aaa8c0"/><rect x="326" y="403" width="1" height="1" fill="#aaa8c0"/><rect x="315" y="386" width="1" height="1" fill="#aaa8c0"/><rect x="315" y="367" width="1" height="1" fill="#aaa8c0"/><rect x="304" y="272" width="1" height="1" fill="#aaa8c0"/><rect x="315" y="400" width="1" height="1" fill="#aaa8c0"/><rect x="308" y="462" width="1" height="1" fill="#aaa8c0"/><rect x="318" y="278" width="1" height="1" fill="#aaa8c0"/><rect x="326" y="279" width="1" height="1" fill="#aaa8c0"/><rect x="316" y="297" width="1" height="1" fill="#aaa8c0"/><rect x="329" y="305" width="1" height="1" fill="#aaa8c0"/><rect x="311" y="367" width="1" height="1" fill="#aaa8c0"/><rect x="321" y="301" width="1" height="1" fill="#aaa8c0"/><rect x="316" y="273" width="1" height="1" fill="#aaa8c0"/><rect x="325" y="407" width="1" height="1" fill="#aaa8c0"/><rect x="304" y="288" width="1" height="1" fill="#aaa8c0"/><rect x="321" y="339" width="1" height="1" fill="#aaa8c0"/><rect x="308" y="358" width="1" height="1" fill="#aaa8c0"/><rect x="320" y="304" width="1" height="1" fill="#aaa8c0"/><rect x="331" y="285" width="1" height="1" fill="#aaa8c0"/><rect x="309" y="327" width="1" height="1" fill="#aaa8c0"/><rect x="327" y="289" width="1" height="1" fill="#aaa8c0"/><rect x="315" y="416" width="1" height="1" fill="#aaa8c0"/><rect x="303" y="309" width="1" height="1" fill="#aaa8c0"/><rect x="317" y="335" width="1" height="1" fill="#aaa8c0"/><rect x="315" y="377" width="1" height="1" fill="#aaa8c0"/><rect x="301" y="351" width="1" height="1" fill="#aaa8c0"/><rect x="319" y="477" width="1" height="1" fill="#aaa8c0"/><rect x="308" y="304" width="1" height="1" fill="#aaa8c0"/><rect x="318" y="437" width="1" height="1" fill="#aaa8c0"/><rect x="310" y="427" width="1" height="1" fill="#aaa8c0"/><rect x="303" y="356" width="1" height="1" fill="#aaa8c0"/><rect x="325" y="372" width="1" height="1" fill="#aaa8c0"/><rect x="321" y="286" width="1" height="1" fill="#aaa8c0"/><rect x="309" y="382" width="1" height="1" fill="#aaa8c0"/><rect x="310" y="317" width="1" height="1" fill="#aaa8c0"/><rect x="325" y="465" width="1" height="1" fill="#aaa8c0"/><rect x="303" y="328" width="1" height="1" fill="#aaa8c0"/><rect x="322" y="375" width="1" height="1" fill="#aaa8c0"/><rect x="307" y="446" width="1" height="1" fill="#aaa8c0"/><rect x="318" y="352" width="1" height="1" fill="#aaa8c0"/><rect x="326" y="380" width="1" height="1" fill="#aaa8c0"/><rect x="319" y="432" width="1" height="1" fill="#aaa8c0"/><rect x="328" y="287" width="1" height="1" fill="#aaa8c0"/><rect x="329" y="346" width="1" height="1" fill="#aaa8c0"/><rect x="301" y="312" width="1" height="1" fill="#aaa8c0"/><rect x="307" y="387" width="1" height="1" fill="#aaa8c0"/><rect x="323" y="428" width="1" height="1" fill="#aaa8c0"/><rect x="320" y="434" width="1" height="1" fill="#aaa8c0"/><rect x="323" y="384" width="1" height="1" fill="#aaa8c0"/><rect x="308" y="401" width="1" height="1" fill="#aaa8c0"/><rect x="326" y="341" width="1" height="1" fill="#aaa8c0"/><rect x="300" y="284" width="1" height="1" fill="#aaa8c0"/><rect x="316" y="351" width="1" height="1" fill="#aaa8c0"/><rect x="309" y="366" width="1" height="1" fill="#aaa8c0"/><rect x="306" y="380" width="1" height="1" fill="#aaa8c0"/><rect x="324" y="302" width="1" height="1" fill="#aaa8c0"/><rect x="323" y="325" width="1" height="1" fill="#aaa8c0"/><rect x="312" y="361" width="1" height="1" fill="#aaa8c0"/><rect x="310" y="299" width="1" height="1" fill="#aaa8c0"/><rect x="321" y="366" width="1" height="1" fill="#aaa8c0"/><rect x="303" y="289" width="1" height="1" fill="#aaa8c0"/><rect x="320" y="309" width="1" height="1" fill="#aaa8c0"/><rect x="307" y="342" width="1" height="1" fill="#aaa8c0"/><rect x="317" y="301" width="1" height="1" fill="#aaa8c0"/><rect x="320" y="323" width="1" height="1" fill="#aaa8c0"/><rect x="319" y="360" width="1" height="1" fill="#aaa8c0"/><rect x="311" y="347" width="1" height="1" fill="#aaa8c0"/><rect x="313" y="431" width="1" height="1" fill="#aaa8c0"/><rect x="308" y="348" width="1" height="1" fill="#aaa8c0"/><rect x="323" y="468" width="1" height="1" fill="#aaa8c0"/><rect x="307" y="466" width="1" height="1" fill="#aaa8c0"/><rect x="327" y="298" width="1" height="1" fill="#aaa8c0"/><rect x="314" y="398" width="1" height="1" fill="#aaa8c0"/><rect x="317" y="297" width="1" height="1" fill="#aaa8c0"/><rect x="311" y="405" width="1" height="1" fill="#aaa8c0"/><rect x="315" y="288" width="1" height="1" fill="#aaa8c0"/><rect x="324" y="310" width="1" height="1" fill="#aaa8c0"/><rect x="300" y="319" width="1" height="1" fill="#aaa8c0"/><rect x="314" y="288" width="1" height="1" fill="#aaa8c0"/><rect x="329" y="295" width="1" height="1" fill="#aaa8c0"/><rect x="313" y="352" width="1" height="1" fill="#aaa8c0"/><rect x="306" y="343" width="1" height="1" fill="#aaa8c0"/><rect x="314" y="464" width="1" height="1" fill="#aaa8c0"/><rect x="308" y="396" width="1" height="1" fill="#aaa8c0"/><rect x="303" y="278" width="1" height="1" fill="#aaa8c0"/><rect x="320" y="276" width="1" height="1" fill="#aaa8c0"/><rect x="319" y="398" width="1" height="1" fill="#aaa8c0"/><rect x="301" y="316" width="1" height="1" fill="#aaa8c0"/><rect x="320" y="414" width="1" height="1" fill="#aaa8c0"/><rect x="321" y="456" width="1" height="1" fill="#aaa8c0"/><rect x="325" y="459" width="1" height="1" fill="#aaa8c0"/><rect x="320" y="341" width="1" height="1" fill="#aaa8c0"/><rect x="315" y="444" width="1" height="1" fill="#aaa8c0"/><rect x="319" y="353" width="1" height="1" fill="#aaa8c0"/><rect x="303" y="383" width="1" height="1" fill="#aaa8c0"/><rect x="300" y="274" width="1" height="1" fill="#aaa8c0"/><rect x="321" y="299" width="1" height="1" fill="#aaa8c0"/><rect x="317" y="356" width="1" height="1" fill="#aaa8c0"/><rect x="313" y="383" width="1" height="1" fill="#aaa8c0"/><rect x="322" y="414" width="1" height="1" fill="#aaa8c0"/><rect x="316" y="292" width="1" height="1" fill="#aaa8c0"/><rect x="310" y="453" width="1" height="1" fill="#aaa8c0"/><rect x="315" y="426" width="1" height="1" fill="#aaa8c0"/><rect x="322" y="341" width="1" height="1" fill="#aaa8c0"/><rect x="311" y="371" width="1" height="1" fill="#aaa8c0"/><rect x="307" y="274" width="1" height="1" fill="#aaa8c0"/><rect x="308" y="384" width="1" height="1" fill="#aaa8c0"/><rect x="303" y="285" width="1" height="1" fill="#aaa8c0"/><rect x="315" y="280" width="1" height="1" fill="#aaa8c0"/><rect x="328" y="307" width="1" height="1" fill="#aaa8c0"/><rect x="304" y="379" width="1" height="1" fill="#aaa8c0"/><rect x="325" y="425" width="1" height="1" fill="#aaa8c0"/><rect x="325" y="310" width="1" height="1" fill="#aaa8c0"/><rect x="307" y="284" width="1" height="1" fill="#aaa8c0"/><rect x="317" y="368" width="1" height="1" fill="#aaa8c0"/><rect x="311" y="425" width="1" height="1" fill="#aaa8c0"/><rect x="320" y="369" width="1" height="1" fill="#aaa8c0"/><rect x="304" y="306" width="1" height="1" fill="#aaa8c0"/><rect x="329" y="336" width="1" height="1" fill="#aaa8c0"/><rect x="302" y="347" width="1" height="1" fill="#aaa8c0"/><rect x="303" y="279" width="1" height="1" fill="#aaa8c0"/><rect x="301" y="297" width="1" height="1" fill="#aaa8c0"/><rect x="310" y="470" width="1" height="1" fill="#aaa8c0"/><rect x="317" y="460" width="1" height="1" fill="#aaa8c0"/><rect x="309" y="312" width="1" height="1" fill="#aaa8c0"/><rect x="307" y="420" width="1" height="1" fill="#aaa8c0"/><rect x="300" y="333" width="1" height="1" fill="#aaa8c0"/><rect x="321" y="402" width="1" height="1" fill="#aaa8c0"/><rect x="314" y="339" width="1" height="1" fill="#aaa8c0"/><rect x="327" y="314" width="1" height="1" fill="#aaa8c0"/><rect x="322" y="346" width="1" height="1" fill="#aaa8c0"/><rect x="300" y="327" width="1" height="1" fill="#aaa8c0"/><rect x="314" y="295" width="1" height="1" fill="#aaa8c0"/><rect x="328" y="286" width="1" height="1" fill="#aaa8c0"/><rect x="326" y="334" width="1" height="1" fill="#aaa8c0"/><rect x="315" y="437" width="1" height="1" fill="#aaa8c0"/><rect x="326" y="457" width="1" height="1" fill="#aaa8c0"/><rect x="313" y="423" width="1" height="1" fill="#aaa8c0"/><rect x="308" y="374" width="1" height="1" fill="#aaa8c0"/><rect x="326" y="325" width="1" height="1" fill="#aaa8c0"/><rect x="316" y="415" width="1" height="1" fill="#aaa8c0"/><rect x="303" y="390" width="1" height="1" fill="#aaa8c0"/><rect x="307" y="363" width="1" height="1" fill="#aaa8c0"/><rect x="300" y="324" width="1" height="1" fill="#aaa8c0"/><rect x="324" y="436" width="1" height="1" fill="#aaa8c0"/><rect x="311" y="324" width="1" height="1" fill="#aaa8c0"/><rect x="316" y="364" width="1" height="1" fill="#aaa8c0"/><rect x="301" y="272" width="1" height="1" fill="#aaa8c0"/><rect x="309" y="311" width="1" height="1" fill="#aaa8c0"/><rect x="317" y="443" width="1" height="1" fill="#aaa8c0"/><rect x="323" y="298" width="1" height="1" fill="#aaa8c0"/><rect x="300" y="321" width="1" height="1" fill="#aaa8c0"/><rect x="302" y="281" width="1" height="1" fill="#aaa8c0"/><rect x="312" y="426" width="1" height="1" fill="#aaa8c0"/><rect x="318" y="383" width="1" height="1" fill="#aaa8c0"/><rect x="308" y="351" width="1" height="1" fill="#aaa8c0"/><rect x="320" y="406" width="1" height="1" fill="#aaa8c0"/><rect x="322" y="309" width="1" height="1" fill="#aaa8c0"/><rect x="178" y="367" width="1" height="1" fill="#b4bcb8"/><rect x="250" y="616" width="1" height="1" fill="#b4bcb8"/><rect x="56" y="547" width="1" height="1" fill="#b4bcb8"/><rect x="76" y="455" width="1" height="1" fill="#b4bcb8"/><rect x="201" y="382" width="1" height="1" fill="#b4bcb8"/><rect x="101" y="408" width="1" height="1" fill="#b4bcb8"/><rect x="221" y="380" width="1" height="1" fill="#b4bcb8"/><rect x="107" y="389" width="1" height="1" fill="#b4bcb8"/><rect x="306" y="488" width="1" height="1" fill="#b4bcb8"/><rect x="287" y="563" width="1" height="1" fill="#b4bcb8"/><rect x="82" y="597" width="1" height="1" fill="#b4bcb8"/><rect x="260" y="602" width="1" height="1" fill="#b4bcb8"/><rect x="123" y="626" width="1" height="1" fill="#b4bcb8"/><rect x="188" y="643" width="1" height="1" fill="#b4bcb8"/><rect x="298" y="472" width="1" height="1" fill="#b4bcb8"/><rect x="312" y="515" width="1" height="1" fill="#b4bcb8"/><rect x="175" y="626" width="1" height="1" fill="#b4bcb8"/><rect x="207" y="373" width="1" height="1" fill="#b4bcb8"/><rect x="274" y="583" width="1" height="1" fill="#b4bcb8"/><rect x="291" y="452" width="1" height="1" fill="#b4bcb8"/><rect x="254" y="600" width="1" height="1" fill="#b4bcb8"/><rect x="58" y="559" width="1" height="1" fill="#b4bcb8"/><rect x="198" y="638" width="1" height="1" fill="#b4bcb8"/><rect x="83" y="589" width="1" height="1" fill="#b4bcb8"/><rect x="315" y="471" width="1" height="1" fill="#b4bcb8"/><rect x="226" y="614" width="1" height="1" fill="#b4bcb8"/><rect x="168" y="625" width="1" height="1" fill="#b4bcb8"/><rect x="133" y="628" width="1" height="1" fill="#b4bcb8"/><rect x="200" y="622" width="1" height="1" fill="#b4bcb8"/><rect x="84" y="436" width="1" height="1" fill="#b4bcb8"/><rect x="65" y="444" width="1" height="1" fill="#b4bcb8"/><rect x="309" y="530" width="1" height="1" fill="#b4bcb8"/><rect x="313" y="549" width="1" height="1" fill="#b4bcb8"/><rect x="82" y="417" width="1" height="1" fill="#b4bcb8"/><rect x="98" y="422" width="1" height="1" fill="#b4bcb8"/><rect x="109" y="616" width="1" height="1" fill="#b4bcb8"/><rect x="171" y="374" width="1" height="1" fill="#b4bcb8"/><rect x="190" y="369" width="1" height="1" fill="#b4bcb8"/><rect x="157" y="383" width="1" height="1" fill="#b4bcb8"/><rect x="170" y="382" width="1" height="1" fill="#b4bcb8"/><rect x="165" y="631" width="1" height="1" fill="#b4bcb8"/><rect x="99" y="607" width="1" height="1" fill="#b4bcb8"/><rect x="304" y="549" width="1" height="1" fill="#b4bcb8"/><rect x="115" y="393" width="1" height="1" fill="#b4bcb8"/><rect x="217" y="379" width="1" height="1" fill="#b4bcb8"/><rect x="53" y="460" width="1" height="1" fill="#b4bcb8"/><rect x="169" y="369" width="1" height="1" fill="#b4bcb8"/><rect x="72" y="459" width="1" height="1" fill="#b4bcb8"/><rect x="308" y="507" width="1" height="1" fill="#b4bcb8"/><rect x="289" y="431" width="1" height="1" fill="#b4bcb8"/><rect x="320" y="475" width="1" height="1" fill="#b4bcb8"/><rect x="58" y="501" width="1" height="1" fill="#b4bcb8"/><rect x="49" y="470" width="1" height="1" fill="#b4bcb8"/><rect x="285" y="587" width="1" height="1" fill="#b4bcb8"/><rect x="171" y="629" width="1" height="1" fill="#b4bcb8"/><rect x="103" y="612" width="1" height="1" fill="#b4bcb8"/><rect x="295" y="459" width="1" height="1" fill="#b4bcb8"/><rect x="70" y="560" width="1" height="1" fill="#b4bcb8"/><rect x="290" y="434" width="1" height="1" fill="#b4bcb8"/><rect x="46" y="496" width="1" height="1" fill="#b4bcb8"/><rect x="134" y="629" width="1" height="1" fill="#b4bcb8"/><rect x="289" y="572" width="1" height="1" fill="#b4bcb8"/><rect x="168" y="624" width="1" height="1" fill="#b4bcb8"/><rect x="289" y="444" width="1" height="1" fill="#b4bcb8"/><rect x="202" y="385" width="1" height="1" fill="#b4bcb8"/><rect x="76" y="437" width="1" height="1" fill="#b4bcb8"/><rect x="316" y="518" width="1" height="1" fill="#b4bcb8"/><rect x="290" y="454" width="1" height="1" fill="#b4bcb8"/><rect x="78" y="587" width="1" height="1" fill="#b4bcb8"/><rect x="110" y="603" width="1" height="1" fill="#b4bcb8"/><rect x="317" y="503" width="1" height="1" fill="#b4bcb8"/><rect x="283" y="601" width="1" height="1" fill="#b4bcb8"/><rect x="73" y="435" width="1" height="1" fill="#b4bcb8"/><rect x="204" y="625" width="1" height="1" fill="#b4bcb8"/><rect x="251" y="382" width="1" height="1" fill="#b4bcb8"/><rect x="276" y="596" width="1" height="1" fill="#b4bcb8"/><rect x="230" y="635" width="1" height="1" fill="#b4bcb8"/><rect x="48" y="513" width="1" height="1" fill="#b4bcb8"/><rect x="63" y="513" width="1" height="1" fill="#b4bcb8"/><rect x="300" y="521" width="1" height="1" fill="#b4bcb8"/><rect x="144" y="391" width="1" height="1" fill="#b4bcb8"/><rect x="290" y="561" width="1" height="1" fill="#b4bcb8"/><rect x="136" y="630" width="1" height="1" fill="#b4bcb8"/><rect x="321" y="483" width="1" height="1" fill="#b4bcb8"/><rect x="276" y="580" width="1" height="1" fill="#b4bcb8"/><rect x="280" y="408" width="1" height="1" fill="#b4bcb8"/><rect x="246" y="623" width="1" height="1" fill="#b4bcb8"/><rect x="144" y="374" width="1" height="1" fill="#b4bcb8"/><rect x="288" y="448" width="1" height="1" fill="#b4bcb8"/><rect x="245" y="622" width="1" height="1" fill="#b4bcb8"/><rect x="177" y="369" width="1" height="1" fill="#b4bcb8"/><rect x="296" y="555" width="1" height="1" fill="#b4bcb8"/><rect x="312" y="549" width="1" height="1" fill="#b4bcb8"/><rect x="66" y="477" width="1" height="1" fill="#b4bcb8"/><rect x="66" y="495" width="1" height="1" fill="#b4bcb8"/><rect x="211" y="384" width="1" height="1" fill="#b4bcb8"/><rect x="52" y="528" width="1" height="1" fill="#b4bcb8"/><rect x="69" y="462" width="1" height="1" fill="#b4bcb8"/><rect x="198" y="634" width="1" height="1" fill="#b4bcb8"/><rect x="71" y="471" width="1" height="1" fill="#b4bcb8"/><rect x="76" y="589" width="1" height="1" fill="#b4bcb8"/><rect x="286" y="425" width="1" height="1" fill="#b4bcb8"/><rect x="67" y="429" width="1" height="1" fill="#b4bcb8"/><rect x="76" y="433" width="1" height="1" fill="#b4bcb8"/><rect x="58" y="531" width="1" height="1" fill="#b4bcb8"/><rect x="189" y="633" width="1" height="1" fill="#b4bcb8"/><rect x="251" y="399" width="1" height="1" fill="#b4bcb8"/><rect x="262" y="410" width="1" height="1" fill="#b4bcb8"/><rect x="311" y="461" width="1" height="1" fill="#b4bcb8"/><rect x="113" y="610" width="1" height="1" fill="#b4bcb8"/><rect x="93" y="583" width="1" height="1" fill="#b4bcb8"/><rect x="169" y="370" width="1" height="1" fill="#b4bcb8"/><rect x="63" y="540" width="1" height="1" fill="#b4bcb8"/><rect x="296" y="586" width="1" height="1" fill="#b4bcb8"/><rect x="96" y="405" width="1" height="1" fill="#b4bcb8"/><rect x="286" y="441" width="1" height="1" fill="#b4bcb8"/><rect x="127" y="391" width="1" height="1" fill="#b4bcb8"/><rect x="114" y="616" width="1" height="1" fill="#b4bcb8"/><rect x="54" y="520" width="1" height="1" fill="#b4bcb8"/><rect x="64" y="516" width="1" height="1" fill="#b4bcb8"/><rect x="203" y="632" width="1" height="1" fill="#b4bcb8"/><rect x="110" y="407" width="1" height="1" fill="#b4bcb8"/><rect x="239" y="625" width="1" height="1" fill="#b4bcb8"/><rect x="51" y="494" width="1" height="1" fill="#b4bcb8"/><rect x="311" y="511" width="1" height="1" fill="#b4bcb8"/><rect x="55" y="531" width="1" height="1" fill="#b4bcb8"/><rect x="134" y="612" width="1" height="1" fill="#b4bcb8"/><rect x="70" y="533" width="1" height="1" fill="#b4bcb8"/><rect x="88" y="416" width="1" height="1" fill="#b4bcb8"/><rect x="223" y="624" width="1" height="1" fill="#b4bcb8"/><rect x="61" y="443" width="1" height="1" fill="#b4bcb8"/><rect x="226" y="625" width="1" height="1" fill="#b4bcb8"/><rect x="73" y="549" width="1" height="1" fill="#b4bcb8"/><rect x="112" y="623" width="1" height="1" fill="#b4bcb8"/><rect x="289" y="442" width="1" height="1" fill="#b4bcb8"/><rect x="270" y="589" width="1" height="1" fill="#b4bcb8"/><rect x="252" y="389" width="1" height="1" fill="#b4bcb8"/><rect x="152" y="629" width="1" height="1" fill="#b4bcb8"/><rect x="166" y="629" width="1" height="1" fill="#b4bcb8"/><rect x="82" y="445" width="1" height="1" fill="#b4bcb8"/><rect x="244" y="403" width="1" height="1" fill="#b4bcb8"/><rect x="271" y="607" width="1" height="1" fill="#b4bcb8"/><rect x="252" y="607" width="1" height="1" fill="#b4bcb8"/><rect x="161" y="376" width="1" height="1" fill="#b4bcb8"/><rect x="187" y="623" width="1" height="1" fill="#b4bcb8"/><rect x="67" y="454" width="1" height="1" fill="#b4bcb8"/><rect x="238" y="619" width="1" height="1" fill="#b4bcb8"/><rect x="288" y="411" width="1" height="1" fill="#b4bcb8"/><rect x="201" y="623" width="1" height="1" fill="#b4bcb8"/><rect x="224" y="627" width="1" height="1" fill="#b4bcb8"/><rect x="172" y="638" width="1" height="1" fill="#b4bcb8"/><rect x="253" y="613" width="1" height="1" fill="#b4bcb8"/><rect x="296" y="421" width="1" height="1" fill="#b4bcb8"/><rect x="55" y="478" width="1" height="1" fill="#b4bcb8"/><rect x="310" y="509" width="1" height="1" fill="#b4bcb8"/><rect x="161" y="380" width="1" height="1" fill="#b4bcb8"/><rect x="134" y="395" width="1" height="1" fill="#b4bcb8"/><rect x="254" y="383" width="1" height="1" fill="#b4bcb8"/><rect x="263" y="403" width="1" height="1" fill="#b4bcb8"/><rect x="49" y="519" width="1" height="1" fill="#b4bcb8"/><rect x="58" y="503" width="1" height="1" fill="#b4bcb8"/><rect x="64" y="483" width="1" height="1" fill="#b4bcb8"/><rect x="101" y="420" width="1" height="1" fill="#b4bcb8"/><rect x="291" y="558" width="1" height="1" fill="#b4bcb8"/><rect x="295" y="429" width="1" height="1" fill="#b4bcb8"/><rect x="179" y="641" width="1" height="1" fill="#b4bcb8"/><rect x="242" y="630" width="1" height="1" fill="#b4bcb8"/><rect x="162" y="633" width="1" height="1" fill="#b4bcb8"/><rect x="76" y="591" width="1" height="1" fill="#b4bcb8"/><rect x="230" y="375" width="1" height="1" fill="#b4bcb8"/><rect x="191" y="638" width="1" height="1" fill="#b4bcb8"/><rect x="71" y="429" width="1" height="1" fill="#b4bcb8"/><rect x="270" y="585" width="1" height="1" fill="#b4bcb8"/><rect x="164" y="374" width="1" height="1" fill="#b4bcb8"/><rect x="69" y="464" width="1" height="1" fill="#b4bcb8"/><rect x="123" y="378" width="1" height="1" fill="#b4bcb8"/><rect x="319" y="513" width="1" height="1" fill="#b4bcb8"/><rect x="172" y="635" width="1" height="1" fill="#b4bcb8"/><rect x="232" y="387" width="1" height="1" fill="#b4bcb8"/><rect x="209" y="386" width="1" height="1" fill="#b4bcb8"/><rect x="222" y="621" width="1" height="1" fill="#b4bcb8"/><rect x="298" y="581" width="1" height="1" fill="#b4bcb8"/><rect x="292" y="420" width="1" height="1" fill="#b4bcb8"/><rect x="128" y="378" width="1" height="1" fill="#b4bcb8"/><rect x="118" y="620" width="1" height="1" fill="#b4bcb8"/><rect x="225" y="388" width="1" height="1" fill="#b4bcb8"/><rect x="132" y="390" width="1" height="1" fill="#b4bcb8"/><rect x="87" y="571" width="1" height="1" fill="#b4bcb8"/><rect x="85" y="427" width="1" height="1" fill="#b4bcb8"/><rect x="249" y="392" width="1" height="1" fill="#b4bcb8"/><rect x="192" y="643" width="1" height="1" fill="#b4bcb8"/><rect x="296" y="422" width="1" height="1" fill="#b4bcb8"/><rect x="168" y="632" width="1" height="1" fill="#b4bcb8"/><rect x="134" y="393" width="1" height="1" fill="#b4bcb8"/><rect x="63" y="547" width="1" height="1" fill="#b4bcb8"/><rect x="47" y="527" width="1" height="1" fill="#b4bcb8"/><rect x="86" y="413" width="1" height="1" fill="#b4bcb8"/><rect x="145" y="390" width="1" height="1" fill="#b4bcb8"/><rect x="215" y="389" width="1" height="1" fill="#b4bcb8"/><rect x="303" y="576" width="1" height="1" fill="#b4bcb8"/><rect x="269" y="419" width="1" height="1" fill="#b4bcb8"/><rect x="233" y="396" width="1" height="1" fill="#b4bcb8"/><rect x="104" y="411" width="1" height="1" fill="#b4bcb8"/><rect x="309" y="543" width="1" height="1" fill="#b4bcb8"/><rect x="147" y="615" width="1" height="1" fill="#b4bcb8"/><rect x="54" y="485" width="1" height="1" fill="#b4bcb8"/><rect x="194" y="377" width="1" height="1" fill="#b4bcb8"/><rect x="171" y="628" width="1" height="1" fill="#b4bcb8"/><rect x="164" y="380" width="1" height="1" fill="#b4bcb8"/><rect x="200" y="627" width="1" height="1" fill="#b4bcb8"/><rect x="82" y="593" width="1" height="1" fill="#b4bcb8"/><rect x="64" y="551" width="1" height="1" fill="#b4bcb8"/><rect x="184" y="367" width="1" height="1" fill="#b4bcb8"/><rect x="253" y="604" width="1" height="1" fill="#b4bcb8"/><rect x="172" y="631" width="1" height="1" fill="#b4bcb8"/><rect x="226" y="371" width="1" height="1" fill="#b4bcb8"/><rect x="148" y="625" width="1" height="1" fill="#b4bcb8"/><rect x="187" y="384" width="1" height="1" fill="#b4bcb8"/><rect x="55" y="517" width="1" height="1" fill="#b4bcb8"/><rect x="294" y="585" width="1" height="1" fill="#b4bcb8"/><rect x="197" y="624" width="1" height="1" fill="#b4bcb8"/><rect x="205" y="365" width="1" height="1" fill="#b4bcb8"/><rect x="267" y="594" width="1" height="1" fill="#b4bcb8"/><rect x="67" y="547" width="1" height="1" fill="#b4bcb8"/><rect x="149" y="616" width="1" height="1" fill="#b4bcb8"/><rect x="306" y="524" width="1" height="1" fill="#b4bcb8"/><rect x="95" y="584" width="1" height="1" fill="#b4bcb8"/><rect x="58" y="448" width="1" height="1" fill="#b4bcb8"/><rect x="184" y="639" width="1" height="1" fill="#b4bcb8"/><rect x="204" y="630" width="1" height="1" fill="#b4bcb8"/><rect x="298" y="539" width="1" height="1" fill="#b4bcb8"/><rect x="316" y="521" width="1" height="1" fill="#b4bcb8"/><rect x="126" y="398" width="1" height="1" fill="#b4bcb8"/><rect x="301" y="486" width="1" height="1" fill="#b4bcb8"/><rect x="142" y="631" width="1" height="1" fill="#b4bcb8"/><rect x="209" y="367" width="1" height="1" fill="#b4bcb8"/><rect x="187" y="625" width="1" height="1" fill="#b4bcb8"/><rect x="305" y="511" width="1" height="1" fill="#b4bcb8"/><rect x="85" y="417" width="1" height="1" fill="#b4bcb8"/><rect x="167" y="370" width="1" height="1" fill="#b4bcb8"/><rect x="159" y="382" width="1" height="1" fill="#b4bcb8"/><rect x="59" y="443" width="1" height="1" fill="#b4bcb8"/><rect x="203" y="630" width="1" height="1" fill="#b4bcb8"/><rect x="275" y="602" width="1" height="1" fill="#b4bcb8"/><rect x="243" y="381" width="1" height="1" fill="#b4bcb8"/><rect x="58" y="444" width="1" height="1" fill="#b4bcb8"/><rect x="118" y="391" width="1" height="1" fill="#b4bcb8"/><rect x="184" y="639" width="1" height="1" fill="#b4bcb8"/><rect x="289" y="447" width="1" height="1" fill="#b4bcb8"/><rect x="143" y="615" width="1" height="1" fill="#b4bcb8"/><rect x="138" y="634" width="1" height="1" fill="#b4bcb8"/><rect x="62" y="437" width="1" height="1" fill="#b4bcb8"/><rect x="96" y="402" width="1" height="1" fill="#b4bcb8"/><rect x="111" y="405" width="1" height="1" fill="#b4bcb8"/><rect x="229" y="630" width="1" height="1" fill="#b4bcb8"/><rect x="221" y="390" width="1" height="1" fill="#b4bcb8"/><rect x="137" y="390" width="1" height="1" fill="#b4bcb8"/><rect x="321" y="504" width="1" height="1" fill="#b4bcb8"/><rect x="89" y="409" width="1" height="1" fill="#b4bcb8"/><rect x="74" y="568" width="1" height="1" fill="#b4bcb8"/><rect x="224" y="383" width="1" height="1" fill="#b4bcb8"/><rect x="293" y="425" width="1" height="1" fill="#b4bcb8"/><rect x="114" y="606" width="1" height="1" fill="#b4bcb8"/><rect x="63" y="483" width="1" height="1" fill="#b4bcb8"/><rect x="167" y="635" width="1" height="1" fill="#b4bcb8"/><rect x="63" y="536" width="1" height="1" fill="#b4bcb8"/><rect x="202" y="636" width="1" height="1" fill="#b4bcb8"/><rect x="308" y="453" width="1" height="1" fill="#b4bcb8"/><rect x="92" y="582" width="1" height="1" fill="#b4bcb8"/><rect x="133" y="620" width="1" height="1" fill="#b4bcb8"/><rect x="309" y="494" width="1" height="1" fill="#b4bcb8"/><rect x="159" y="377" width="1" height="1" fill="#b4bcb8"/><rect x="299" y="479" width="1" height="1" fill="#b4bcb8"/><rect x="82" y="417" width="1" height="1" fill="#b4bcb8"/><rect x="62" y="469" width="1" height="1" fill="#b4bcb8"/><rect x="102" y="588" width="1" height="1" fill="#b4bcb8"/><rect x="258" y="595" width="1" height="1" fill="#b4bcb8"/><rect x="138" y="383" width="1" height="1" fill="#b4bcb8"/><rect x="309" y="534" width="1" height="1" fill="#b4bcb8"/><rect x="166" y="620" width="1" height="1" fill="#b4bcb8"/><rect x="173" y="640" width="1" height="1" fill="#b4bcb8"/><rect x="221" y="630" width="1" height="1" fill="#b4bcb8"/><rect x="176" y="374" width="1" height="1" fill="#b4bcb8"/><rect x="82" y="587" width="1" height="1" fill="#b4bcb8"/><rect x="155" y="633" width="1" height="1" fill="#b4bcb8"/><rect x="138" y="614" width="1" height="1" fill="#b4bcb8"/><rect x="79" y="570" width="1" height="1" fill="#b4bcb8"/><rect x="137" y="630" width="1" height="1" fill="#b4bcb8"/><rect x="177" y="638" width="1" height="1" fill="#b4bcb8"/><rect x="269" y="407" width="1" height="1" fill="#b4bcb8"/><rect x="71" y="539" width="1" height="1" fill="#b4bcb8"/><rect x="150" y="378" width="1" height="1" fill="#b4bcb8"/><rect x="60" y="488" width="1" height="1" fill="#b4bcb8"/><rect x="97" y="401" width="1" height="1" fill="#b4bcb8"/><rect x="277" y="410" width="1" height="1" fill="#b4bcb8"/><rect x="127" y="616" width="1" height="1" fill="#b4bcb8"/><rect x="161" y="377" width="1" height="1" fill="#b4bcb8"/><rect x="87" y="580" width="1" height="1" fill="#b4bcb8"/><rect x="308" y="484" width="1" height="1" fill="#b4bcb8"/><rect x="81" y="439" width="1" height="1" fill="#b4bcb8"/><rect x="188" y="632" width="1" height="1" fill="#b4bcb8"/><rect x="57" y="498" width="1" height="1" fill="#b4bcb8"/><rect x="184" y="629" width="1" height="1" fill="#b4bcb8"/><rect x="129" y="398" width="1" height="1" fill="#b4bcb8"/><rect x="189" y="634" width="1" height="1" fill="#b4bcb8"/><rect x="215" y="390" width="1" height="1" fill="#b4bcb8"/><rect x="307" y="517" width="1" height="1" fill="#b4bcb8"/><rect x="82" y="437" width="1" height="1" fill="#b4bcb8"/><rect x="196" y="381" width="1" height="1" fill="#b4bcb8"/><rect x="128" y="383" width="1" height="1" fill="#b4bcb8"/><rect x="168" y="370" width="1" height="1" fill="#b4bcb8"/><rect x="97" y="422" width="1" height="1" fill="#b4bcb8"/><rect x="73" y="439" width="1" height="1" fill="#b4bcb8"/><rect x="46" y="524" width="1" height="1" fill="#b4bcb8"/><rect x="297" y="428" width="1" height="1" fill="#b4bcb8"/><rect x="312" y="532" width="1" height="1" fill="#b4bcb8"/><rect x="165" y="638" width="1" height="1" fill="#b4bcb8"/><rect x="228" y="384" width="1" height="1" fill="#b4bcb8"/><rect x="185" y="378" width="1" height="1" fill="#b4bcb8"/><rect x="313" y="532" width="1" height="1" fill="#b4bcb8"/><rect x="95" y="425" width="1" height="1" fill="#b4bcb8"/><rect x="322" y="497" width="1" height="1" fill="#b4bcb8"/><rect x="306" y="487" width="1" height="1" fill="#b4bcb8"/><rect x="121" y="394" width="1" height="1" fill="#b4bcb8"/><rect x="160" y="641" width="1" height="1" fill="#b4bcb8"/><rect x="260" y="598" width="1" height="1" fill="#b4bcb8"/><rect x="288" y="577" width="1" height="1" fill="#b4bcb8"/><rect x="315" y="485" width="1" height="1" fill="#b4bcb8"/><rect x="118" y="602" width="1" height="1" fill="#b4bcb8"/><rect x="183" y="623" width="1" height="1" fill="#b4bcb8"/><rect x="298" y="467" width="1" height="1" fill="#b4bcb8"/><rect x="238" y="391" width="1" height="1" fill="#b4bcb8"/><rect x="45" y="495" width="1" height="1" fill="#b4bcb8"/><rect x="187" y="630" width="1" height="1" fill="#b4bcb8"/><rect x="86" y="434" width="1" height="1" fill="#b4bcb8"/><rect x="92" y="401" width="1" height="1" fill="#b4bcb8"/><rect x="117" y="604" width="1" height="1" fill="#b4bcb8"/><rect x="294" y="586" width="1" height="1" fill="#b4bcb8"/><rect x="54" y="469" width="1" height="1" fill="#b4bcb8"/><rect x="219" y="630" width="1" height="1" fill="#b4bcb8"/><rect x="180" y="637" width="1" height="1" fill="#b4bcb8"/><rect x="68" y="550" width="1" height="1" fill="#b4bcb8"/><rect x="163" y="636" width="1" height="1" fill="#b4bcb8"/><rect x="205" y="633" width="1" height="1" fill="#b4bcb8"/><rect x="280" y="425" width="1" height="1" fill="#b4bcb8"/><rect x="61" y="570" width="1" height="1" fill="#b4bcb8"/><rect x="279" y="427" width="1" height="1" fill="#b4bcb8"/><rect x="203" y="629" width="1" height="1" fill="#b4bcb8"/><rect x="230" y="388" width="1" height="1" fill="#b4bcb8"/><rect x="44" y="492" width="1" height="1" fill="#b4bcb8"/><rect x="211" y="370" width="1" height="1" fill="#b4bcb8"/><rect x="261" y="403" width="1" height="1" fill="#b4bcb8"/><rect x="57" y="562" width="1" height="1" fill="#b4bcb8"/><rect x="51" y="520" width="1" height="1" fill="#b4bcb8"/><rect x="69" y="581" width="1" height="1" fill="#b4bcb8"/><rect x="166" y="632" width="1" height="1" fill="#b4bcb8"/><rect x="263" y="417" width="1" height="1" fill="#b4bcb8"/><rect x="161" y="380" width="1" height="1" fill="#b4bcb8"/><rect x="160" y="641" width="1" height="1" fill="#b4bcb8"/><rect x="316" y="463" width="1" height="1" fill="#b4bcb8"/><rect x="175" y="628" width="1" height="1" fill="#b4bcb8"/><rect x="57" y="544" width="1" height="1" fill="#b4bcb8"/><rect x="67" y="451" width="1" height="1" fill="#b4bcb8"/><rect x="240" y="627" width="1" height="1" fill="#b4bcb8"/><rect x="57" y="524" width="1" height="1" fill="#b4bcb8"/><rect x="129" y="379" width="1" height="1" fill="#b4bcb8"/><rect x="188" y="376" width="1" height="1" fill="#b4bcb8"/><rect x="197" y="370" width="1" height="1" fill="#b4bcb8"/><rect x="59" y="502" width="1" height="1" fill="#b4bcb8"/><rect x="62" y="536" width="1" height="1" fill="#b4bcb8"/><rect x="69" y="452" width="1" height="1" fill="#b4bcb8"/><rect x="118" y="626" width="1" height="1" fill="#b4bcb8"/><rect x="62" y="537" width="1" height="1" fill="#b4bcb8"/><rect x="289" y="433" width="1" height="1" fill="#b4bcb8"/><rect x="108" y="413" width="1" height="1" fill="#b4bcb8"/><rect x="143" y="371" width="1" height="1" fill="#b4bcb8"/><rect x="218" y="637" width="1" height="1" fill="#b4bcb8"/><rect x="119" y="379" width="1" height="1" fill="#b4bcb8"/><rect x="51" y="491" width="1" height="1" fill="#b4bcb8"/><rect x="58" y="517" width="1" height="1" fill="#b4bcb8"/><rect x="262" y="616" width="1" height="1" fill="#b4bcb8"/><rect x="104" y="611" width="1" height="1" fill="#b4bcb8"/><rect x="306" y="542" width="1" height="1" fill="#b4bcb8"/><rect x="171" y="379" width="1" height="1" fill="#b4bcb8"/><rect x="192" y="376" width="1" height="1" fill="#b4bcb8"/><rect x="189" y="635" width="1" height="1" fill="#b4bcb8"/><rect x="186" y="641" width="1" height="1" fill="#b4bcb8"/><rect x="297" y="576" width="1" height="1" fill="#b4bcb8"/><rect x="276" y="411" width="1" height="1" fill="#b4bcb8"/><rect x="129" y="381" width="1" height="1" fill="#b4bcb8"/><rect x="312" y="471" width="1" height="1" fill="#b4bcb8"/><rect x="286" y="416" width="1" height="1" fill="#b4bcb8"/><rect x="189" y="372" width="1" height="1" fill="#b4bcb8"/><rect x="202" y="626" width="1" height="1" fill="#b4bcb8"/><rect x="164" y="640" width="1" height="1" fill="#b4bcb8"/><rect x="162" y="373" width="1" height="1" fill="#b4bcb8"/><rect x="72" y="584" width="1" height="1" fill="#b4bcb8"/><rect x="279" y="402" width="1" height="1" fill="#b4bcb8"/><rect x="272" y="404" width="1" height="1" fill="#b4bcb8"/><rect x="82" y="577" width="1" height="1" fill="#b4bcb8"/><rect x="247" y="395" width="1" height="1" fill="#b4bcb8"/><rect x="293" y="440" width="1" height="1" fill="#b4bcb8"/><rect x="96" y="583" width="1" height="1" fill="#b4bcb8"/><rect x="197" y="638" width="1" height="1" fill="#b4bcb8"/><rect x="133" y="382" width="1" height="1" fill="#b4bcb8"/><rect x="314" y="471" width="1" height="1" fill="#b4bcb8"/><rect x="106" y="603" width="1" height="1" fill="#b4bcb8"/><rect x="184" y="381" width="1" height="1" fill="#b4bcb8"/><rect x="320" y="515" width="1" height="1" fill="#b4bcb8"/><rect x="80" y="429" width="1" height="1" fill="#b4bcb8"/><rect x="86" y="431" width="1" height="1" fill="#b4bcb8"/><rect x="165" y="627" width="1" height="1" fill="#b4bcb8"/><rect x="125" y="397" width="1" height="1" fill="#b4bcb8"/><rect x="149" y="384" width="1" height="1" fill="#b4bcb8"/><rect x="318" y="504" width="1" height="1" fill="#b4bcb8"/><rect x="290" y="423" width="1" height="1" fill="#b4bcb8"/><rect x="58" y="514" width="1" height="1" fill="#b4bcb8"/><rect x="188" y="640" width="1" height="1" fill="#b4bcb8"/><rect x="140" y="381" width="1" height="1" fill="#b4bcb8"/><rect x="61" y="460" width="1" height="1" fill="#b4bcb8"/><rect x="133" y="609" width="1" height="1" fill="#b4bcb8"/><rect x="179" y="635" width="1" height="1" fill="#b4bcb8"/><rect x="263" y="391" width="1" height="1" fill="#b4bcb8"/><rect x="119" y="617" width="1" height="1" fill="#b4bcb8"/><rect x="169" y="634" width="1" height="1" fill="#b4bcb8"/><rect x="255" y="395" width="1" height="1" fill="#b4bcb8"/><rect x="86" y="573" width="1" height="1" fill="#b4bcb8"/><rect x="90" y="585" width="1" height="1" fill="#b4bcb8"/><rect x="301" y="513" width="1" height="1" fill="#b4bcb8"/><rect x="246" y="610" width="1" height="1" fill="#b4bcb8"/><rect x="157" y="367" width="1" height="1" fill="#b4bcb8"/><rect x="285" y="574" width="1" height="1" fill="#b4bcb8"/><rect x="282" y="416" width="1" height="1" fill="#b4bcb8"/><rect x="293" y="429" width="1" height="1" fill="#b4bcb8"/><rect x="270" y="584" width="1" height="1" fill="#b4bcb8"/><rect x="116" y="388" width="1" height="1" fill="#b4bcb8"/><rect x="261" y="593" width="1" height="1" fill="#b4bcb8"/><rect x="77" y="452" width="1" height="1" fill="#b4bcb8"/><rect x="142" y="630" width="1" height="1" fill="#b4bcb8"/><rect x="282" y="583" width="1" height="1" fill="#b4bcb8"/><rect x="207" y="620" width="1" height="1" fill="#b4bcb8"/><rect x="298" y="427" width="1" height="1" fill="#b4bcb8"/><rect x="128" y="626" width="1" height="1" fill="#b4bcb8"/><rect x="80" y="424" width="1" height="1" fill="#b4bcb8"/><rect x="174" y="372" width="1" height="1" fill="#b4bcb8"/><rect x="186" y="377" width="1" height="1" fill="#b4bcb8"/><rect x="86" y="580" width="1" height="1" fill="#b4bcb8"/><rect x="261" y="396" width="1" height="1" fill="#b4bcb8"/><rect x="175" y="628" width="1" height="1" fill="#b4bcb8"/><rect x="238" y="389" width="1" height="1" fill="#b4bcb8"/><rect x="301" y="547" width="1" height="1" fill="#b4bcb8"/><rect x="70" y="545" width="1" height="1" fill="#b4bcb8"/><rect x="202" y="381" width="1" height="1" fill="#b4bcb8"/><rect x="117" y="386" width="1" height="1" fill="#b4bcb8"/><rect x="255" y="610" width="1" height="1" fill="#b4bcb8"/><rect x="299" y="567" width="1" height="1" fill="#b4bcb8"/><rect x="71" y="457" width="1" height="1" fill="#b4bcb8"/><rect x="305" y="530" width="1" height="1" fill="#b4bcb8"/><rect x="308" y="446" width="1" height="1" fill="#b4bcb8"/><rect x="100" y="610" width="1" height="1" fill="#b4bcb8"/><rect x="266" y="406" width="1" height="1" fill="#b4bcb8"/><rect x="300" y="554" width="1" height="1" fill="#b4bcb8"/><rect x="166" y="621" width="1" height="1" fill="#b4bcb8"/><rect x="262" y="411" width="1" height="1" fill="#b4bcb8"/><rect x="90" y="585" width="1" height="1" fill="#b4bcb8"/><rect x="193" y="386" width="1" height="1" fill="#b4bcb8"/><rect x="61" y="465" width="1" height="1" fill="#b4bcb8"/><rect x="62" y="559" width="1" height="1" fill="#b4bcb8"/><rect x="61" y="509" width="1" height="1" fill="#b4bcb8"/><rect x="314" y="514" width="1" height="1" fill="#b4bcb8"/><rect x="204" y="640" width="1" height="1" fill="#b4bcb8"/><rect x="56" y="490" width="1" height="1" fill="#b4bcb8"/><rect x="278" y="431" width="1" height="1" fill="#b4bcb8"/><rect x="136" y="377" width="1" height="1" fill="#b4bcb8"/><rect x="251" y="602" width="1" height="1" fill="#b4bcb8"/><rect x="63" y="461" width="1" height="1" fill="#b4bcb8"/><rect x="65" y="548" width="1" height="1" fill="#b4bcb8"/><rect x="191" y="640" width="1" height="1" fill="#b4bcb8"/><rect x="303" y="455" width="1" height="1" fill="#b4bcb8"/><rect x="114" y="397" width="1" height="1" fill="#b4bcb8"/><rect x="69" y="572" width="1" height="1" fill="#b4bcb8"/><rect x="78" y="567" width="1" height="1" fill="#b4bcb8"/><rect x="179" y="374" width="1" height="1" fill="#b4bcb8"/><rect x="122" y="404" width="1" height="1" fill="#b4bcb8"/><rect x="72" y="565" width="1" height="1" fill="#b4bcb8"/><rect x="289" y="591" width="1" height="1" fill="#b4bcb8"/><rect x="134" y="379" width="1" height="1" fill="#b4bcb8"/><rect x="52" y="506" width="1" height="1" fill="#b4bcb8"/><rect x="138" y="613" width="1" height="1" fill="#b4bcb8"/><rect x="291" y="449" width="1" height="1" fill="#b4bcb8"/><rect x="88" y="428" width="1" height="1" fill="#b4bcb8"/><rect x="185" y="624" width="1" height="1" fill="#b4bcb8"/><rect x="291" y="575" width="1" height="1" fill="#b4bcb8"/><rect x="221" y="381" width="1" height="1" fill="#b4bcb8"/><rect x="171" y="632" width="1" height="1" fill="#b4bcb8"/><rect x="302" y="511" width="1" height="1" fill="#b4bcb8"/><rect x="208" y="622" width="1" height="1" fill="#b4bcb8"/><rect x="257" y="408" width="1" height="1" fill="#b4bcb8"/><rect x="212" y="386" width="1" height="1" fill="#b4bcb8"/><rect x="46" y="502" width="1" height="1" fill="#b4bcb8"/><rect x="293" y="457" width="1" height="1" fill="#b4bcb8"/><rect x="177" y="622" width="1" height="1" fill="#b4bcb8"/><rect x="71" y="430" width="1" height="1" fill="#b4bcb8"/><rect x="199" y="367" width="1" height="1" fill="#b4bcb8"/><rect x="280" y="596" width="1" height="1" fill="#b4bcb8"/><rect x="125" y="628" width="1" height="1" fill="#b4bcb8"/><rect x="90" y="590" width="1" height="1" fill="#b4bcb8"/><rect x="173" y="367" width="1" height="1" fill="#b4bcb8"/><rect x="271" y="418" width="1" height="1" fill="#b4bcb8"/><rect x="188" y="625" width="1" height="1" fill="#b4bcb8"/><rect x="279" y="604" width="1" height="1" fill="#b4bcb8"/><rect x="303" y="466" width="1" height="1" fill="#b4bcb8"/><rect x="184" y="636" width="1" height="1" fill="#b4bcb8"/><rect x="234" y="395" width="1" height="1" fill="#b4bcb8"/><rect x="280" y="426" width="1" height="1" fill="#b4bcb8"/><rect x="162" y="628" width="1" height="1" fill="#b4bcb8"/><rect x="183" y="627" width="1" height="1" fill="#b4bcb8"/><rect x="203" y="640" width="1" height="1" fill="#b4bcb8"/><rect x="226" y="632" width="1" height="1" fill="#b4bcb8"/><rect x="110" y="404" width="1" height="1" fill="#b4bcb8"/><rect x="82" y="580" width="1" height="1" fill="#b4bcb8"/><rect x="192" y="633" width="1" height="1" fill="#b4bcb8"/><rect x="156" y="639" width="1" height="1" fill="#b4bcb8"/><rect x="281" y="413" width="1" height="1" fill="#b4bcb8"/><rect x="52" y="496" width="1" height="1" fill="#b4bcb8"/><rect x="181" y="636" width="1" height="1" fill="#b4bcb8"/><rect x="64" y="523" width="1" height="1" fill="#b4bcb8"/><rect x="236" y="610" width="1" height="1" fill="#b4bcb8"/><rect x="149" y="389" width="1" height="1" fill="#b4bcb8"/><rect x="90" y="588" width="1" height="1" fill="#b4bcb8"/><rect x="203" y="636" width="1" height="1" fill="#b4bcb8"/><rect x="239" y="396" width="1" height="1" fill="#b4bcb8"/><rect x="245" y="388" width="1" height="1" fill="#b4bcb8"/><rect x="90" y="605" width="1" height="1" fill="#b4bcb8"/><rect x="291" y="457" width="1" height="1" fill="#b4bcb8"/><rect x="66" y="442" width="1" height="1" fill="#b4bcb8"/><rect x="71" y="428" width="1" height="1" fill="#b4bcb8"/><rect x="68" y="566" width="1" height="1" fill="#b4bcb8"/><rect x="82" y="567" width="1" height="1" fill="#b4bcb8"/><rect x="159" y="634" width="1" height="1" fill="#b4bcb8"/><rect x="236" y="612" width="1" height="1" fill="#b4bcb8"/><rect x="84" y="430" width="1" height="1" fill="#b4bcb8"/><rect x="154" y="623" width="1" height="1" fill="#b4bcb8"/><rect x="195" y="375" width="1" height="1" fill="#b4bcb8"/><rect x="156" y="624" width="1" height="1" fill="#b4bcb8"/><rect x="115" y="618" width="1" height="1" fill="#b4bcb8"/><rect x="122" y="379" width="1" height="1" fill="#b4bcb8"/><rect x="108" y="614" width="1" height="1" fill="#b4bcb8"/><rect x="148" y="391" width="1" height="1" fill="#b4bcb8"/><rect x="310" y="540" width="1" height="1" fill="#b4bcb8"/><rect x="316" y="490" width="1" height="1" fill="#b4bcb8"/><rect x="311" y="511" width="1" height="1" fill="#b4bcb8"/><rect x="320" y="557" width="1" height="1" fill="#b4bcb8"/><rect x="312" y="550" width="1" height="1" fill="#b4bcb8"/><rect x="323" y="529" width="1" height="1" fill="#b4bcb8"/><rect x="315" y="566" width="1" height="1" fill="#b4bcb8"/><rect x="321" y="486" width="1" height="1" fill="#b4bcb8"/><rect x="305" y="483" width="1" height="1" fill="#b4bcb8"/><rect x="307" y="541" width="1" height="1" fill="#b4bcb8"/><rect x="317" y="550" width="1" height="1" fill="#b4bcb8"/><rect x="322" y="494" width="1" height="1" fill="#b4bcb8"/><rect x="316" y="573" width="1" height="1" fill="#b4bcb8"/><rect x="319" y="572" width="1" height="1" fill="#b4bcb8"/><rect x="320" y="523" width="1" height="1" fill="#b4bcb8"/><rect x="317" y="568" width="1" height="1" fill="#b4bcb8"/><rect x="310" y="486" width="1" height="1" fill="#b4bcb8"/><rect x="310" y="545" width="1" height="1" fill="#b4bcb8"/><rect x="312" y="494" width="1" height="1" fill="#b4bcb8"/><rect x="312" y="492" width="1" height="1" fill="#b4bcb8"/><rect x="318" y="488" width="1" height="1" fill="#b4bcb8"/><rect x="322" y="499" width="1" height="1" fill="#b4bcb8"/><rect x="316" y="489" width="1" height="1" fill="#b4bcb8"/><rect x="307" y="540" width="1" height="1" fill="#b4bcb8"/><rect x="314" y="538" width="1" height="1" fill="#b4bcb8"/><rect x="306" y="537" width="1" height="1" fill="#b4bcb8"/><rect x="320" y="524" width="1" height="1" fill="#b4bcb8"/><rect x="308" y="537" width="1" height="1" fill="#b4bcb8"/><rect x="321" y="510" width="1" height="1" fill="#b4bcb8"/><rect x="313" y="484" width="1" height="1" fill="#b4bcb8"/><rect x="312" y="527" width="1" height="1" fill="#b4bcb8"/><rect x="305" y="479" width="1" height="1" fill="#b4bcb8"/><rect x="312" y="558" width="1" height="1" fill="#b4bcb8"/><rect x="312" y="506" width="1" height="1" fill="#b4bcb8"/><rect x="304" y="483" width="1" height="1" fill="#b4bcb8"/><rect x="318" y="557" width="1" height="1" fill="#b4bcb8"/><rect x="309" y="497" width="1" height="1" fill="#b4bcb8"/><rect x="309" y="486" width="1" height="1" fill="#b4bcb8"/><rect x="318" y="528" width="1" height="1" fill="#b4bcb8"/><rect x="320" y="527" width="1" height="1" fill="#b4bcb8"/><rect x="314" y="573" width="1" height="1" fill="#b4bcb8"/><rect x="305" y="483" width="1" height="1" fill="#b4bcb8"/><rect x="305" y="542" width="1" height="1" fill="#b4bcb8"/><rect x="304" y="564" width="1" height="1" fill="#b4bcb8"/><rect x="323" y="484" width="1" height="1" fill="#b4bcb8"/><rect x="314" y="517" width="1" height="1" fill="#b4bcb8"/><rect x="305" y="535" width="1" height="1" fill="#b4bcb8"/><rect x="310" y="510" width="1" height="1" fill="#b4bcb8"/><rect x="319" y="549" width="1" height="1" fill="#b4bcb8"/><rect x="306" y="544" width="1" height="1" fill="#b4bcb8"/><rect x="322" y="522" width="1" height="1" fill="#b4bcb8"/><rect x="310" y="495" width="1" height="1" fill="#b4bcb8"/><rect x="323" y="537" width="1" height="1" fill="#b4bcb8"/><rect x="317" y="481" width="1" height="1" fill="#b4bcb8"/><rect x="314" y="522" width="1" height="1" fill="#b4bcb8"/><rect x="305" y="558" width="1" height="1" fill="#b4bcb8"/><rect x="309" y="535" width="1" height="1" fill="#b4bcb8"/><rect x="318" y="550" width="1" height="1" fill="#b4bcb8"/><rect x="306" y="518" width="1" height="1" fill="#b4bcb8"/><rect x="317" y="551" width="1" height="1" fill="#b4bcb8"/><rect x="318" y="532" width="1" height="1" fill="#b4bcb8"/><rect x="308" y="569" width="1" height="1" fill="#b4bcb8"/><rect x="319" y="544" width="1" height="1" fill="#b4bcb8"/><rect x="321" y="504" width="1" height="1" fill="#b4bcb8"/><rect x="323" y="508" width="1" height="1" fill="#b4bcb8"/><rect x="323" y="534" width="1" height="1" fill="#b4bcb8"/><rect x="319" y="563" width="1" height="1" fill="#b4bcb8"/><rect x="312" y="514" width="1" height="1" fill="#b4bcb8"/><rect x="319" y="534" width="1" height="1" fill="#b4bcb8"/><rect x="321" y="518" width="1" height="1" fill="#b4bcb8"/><rect x="313" y="499" width="1" height="1" fill="#b4bcb8"/><rect x="306" y="492" width="1" height="1" fill="#b4bcb8"/><rect x="303" y="506" width="1" height="1" fill="#b4bcb8"/><rect x="316" y="533" width="1" height="1" fill="#b4bcb8"/><rect x="319" y="516" width="1" height="1" fill="#b4bcb8"/><rect x="317" y="530" width="1" height="1" fill="#b4bcb8"/><rect x="309" y="487" width="1" height="1" fill="#b4bcb8"/><rect x="306" y="481" width="1" height="1" fill="#b4bcb8"/><rect x="305" y="559" width="1" height="1" fill="#b4bcb8"/><rect x="310" y="535" width="1" height="1" fill="#b4bcb8"/><rect x="321" y="542" width="1" height="1" fill="#b4bcb8"/><rect x="323" y="557" width="1" height="1" fill="#b4bcb8"/><rect x="311" y="570" width="1" height="1" fill="#b4bcb8"/><rect x="319" y="572" width="1" height="1" fill="#b4bcb8"/><rect x="309" y="505" width="1" height="1" fill="#b4bcb8"/><rect x="320" y="528" width="1" height="1" fill="#b4bcb8"/><rect x="321" y="488" width="1" height="1" fill="#b4bcb8"/><rect x="315" y="542" width="1" height="1" fill="#b4bcb8"/><rect x="311" y="517" width="1" height="1" fill="#b4bcb8"/><rect x="318" y="517" width="1" height="1" fill="#b4bcb8"/><rect x="317" y="521" width="1" height="1" fill="#b4bcb8"/><rect x="304" y="562" width="1" height="1" fill="#b4bcb8"/><rect x="322" y="480" width="1" height="1" fill="#b4bcb8"/><rect x="320" y="497" width="1" height="1" fill="#b4bcb8"/><rect x="307" y="517" width="1" height="1" fill="#b4bcb8"/><rect x="312" y="480" width="1" height="1" fill="#b4bcb8"/><rect x="304" y="535" width="1" height="1" fill="#b4bcb8"/><rect x="309" y="480" width="1" height="1" fill="#b4bcb8"/><rect x="318" y="562" width="1" height="1" fill="#b4bcb8"/><rect x="311" y="503" width="1" height="1" fill="#b4bcb8"/><rect x="317" y="518" width="1" height="1" fill="#b4bcb8"/><rect x="310" y="506" width="1" height="1" fill="#b4bcb8"/><rect x="307" y="526" width="1" height="1" fill="#b4bcb8"/><rect x="318" y="519" width="1" height="1" fill="#b4bcb8"/><rect x="304" y="526" width="1" height="1" fill="#b4bcb8"/><rect x="314" y="512" width="1" height="1" fill="#b4bcb8"/><rect x="311" y="501" width="1" height="1" fill="#b4bcb8"/><rect x="310" y="532" width="1" height="1" fill="#b4bcb8"/><rect x="321" y="496" width="1" height="1" fill="#b4bcb8"/><rect x="322" y="485" width="1" height="1" fill="#b4bcb8"/><rect x="314" y="488" width="1" height="1" fill="#b4bcb8"/><rect x="311" y="530" width="1" height="1" fill="#b4bcb8"/><rect x="321" y="538" width="1" height="1" fill="#b4bcb8"/><rect x="304" y="509" width="1" height="1" fill="#b4bcb8"/><rect x="321" y="497" width="1" height="1" fill="#b4bcb8"/><rect x="318" y="535" width="1" height="1" fill="#b4bcb8"/><rect x="309" y="515" width="1" height="1" fill="#b4bcb8"/><rect x="314" y="544" width="1" height="1" fill="#b4bcb8"/><rect x="306" y="565" width="1" height="1" fill="#b4bcb8"/><rect x="317" y="511" width="1" height="1" fill="#b4bcb8"/><rect x="312" y="565" width="1" height="1" fill="#b4bcb8"/><rect x="305" y="553" width="1" height="1" fill="#b4bcb8"/><rect x="309" y="539" width="1" height="1" fill="#b4bcb8"/><rect x="309" y="544" width="1" height="1" fill="#b4bcb8"/><rect x="308" y="496" width="1" height="1" fill="#b4bcb8"/><rect x="317" y="547" width="1" height="1" fill="#b4bcb8"/><rect x="311" y="565" width="1" height="1" fill="#b4bcb8"/><rect x="319" y="485" width="1" height="1" fill="#b4bcb8"/><rect x="318" y="503" width="1" height="1" fill="#b4bcb8"/><rect x="312" y="525" width="1" height="1" fill="#b4bcb8"/><rect x="307" y="481" width="1" height="1" fill="#b4bcb8"/><rect x="312" y="550" width="1" height="1" fill="#b4bcb8"/><rect x="319" y="562" width="1" height="1" fill="#b4bcb8"/><rect x="323" y="529" width="1" height="1" fill="#b4bcb8"/><rect x="311" y="479" width="1" height="1" fill="#b4bcb8"/><rect x="304" y="529" width="1" height="1" fill="#b4bcb8"/><rect x="306" y="561" width="1" height="1" fill="#b4bcb8"/><rect x="308" y="534" width="1" height="1" fill="#b4bcb8"/><rect x="312" y="515" width="1" height="1" fill="#b4bcb8"/><rect x="306" y="506" width="1" height="1" fill="#b4bcb8"/><rect x="316" y="542" width="1" height="1" fill="#b4bcb8"/><rect x="323" y="486" width="1" height="1" fill="#b4bcb8"/><rect x="307" y="489" width="1" height="1" fill="#b4bcb8"/><rect x="310" y="505" width="1" height="1" fill="#b4bcb8"/><rect x="321" y="525" width="1" height="1" fill="#b4bcb8"/><rect x="315" y="488" width="1" height="1" fill="#b4bcb8"/><rect x="308" y="538" width="1" height="1" fill="#b4bcb8"/><rect x="312" y="512" width="1" height="1" fill="#b4bcb8"/><rect x="319" y="563" width="1" height="1" fill="#b4bcb8"/><rect x="304" y="524" width="1" height="1" fill="#b4bcb8"/><rect x="320" y="512" width="1" height="1" fill="#b4bcb8"/><rect x="311" y="520" width="1" height="1" fill="#b4bcb8"/><rect x="303" y="539" width="1" height="1" fill="#b4bcb8"/><rect x="317" y="540" width="1" height="1" fill="#b4bcb8"/><rect x="311" y="489" width="1" height="1" fill="#b4bcb8"/><rect x="308" y="560" width="1" height="1" fill="#b4bcb8"/><rect x="310" y="529" width="1" height="1" fill="#b4bcb8"/><rect x="311" y="531" width="1" height="1" fill="#b4bcb8"/><rect x="322" y="511" width="1" height="1" fill="#b4bcb8"/><rect x="323" y="544" width="1" height="1" fill="#b4bcb8"/><rect x="312" y="510" width="1" height="1" fill="#b4bcb8"/><rect x="321" y="513" width="1" height="1" fill="#b4bcb8"/><rect x="317" y="513" width="1" height="1" fill="#b4bcb8"/><rect x="314" y="495" width="1" height="1" fill="#b4bcb8"/><rect x="322" y="504" width="1" height="1" fill="#b4bcb8"/><rect x="323" y="513" width="1" height="1" fill="#b4bcb8"/><rect x="310" y="532" width="1" height="1" fill="#b4bcb8"/><rect x="322" y="531" width="1" height="1" fill="#b4bcb8"/><rect x="320" y="544" width="1" height="1" fill="#b4bcb8"/><rect x="315" y="532" width="1" height="1" fill="#b4bcb8"/><rect x="320" y="492" width="1" height="1" fill="#b4bcb8"/><rect x="316" y="539" width="1" height="1" fill="#b4bcb8"/><rect x="319" y="507" width="1" height="1" fill="#b4bcb8"/><rect x="309" y="529" width="1" height="1" fill="#b4bcb8"/><rect x="319" y="573" width="1" height="1" fill="#b4bcb8"/><rect x="320" y="543" width="1" height="1" fill="#b4bcb8"/><rect x="311" y="545" width="1" height="1" fill="#b4bcb8"/><rect x="322" y="569" width="1" height="1" fill="#b4bcb8"/><rect x="312" y="542" width="1" height="1" fill="#b4bcb8"/><rect x="303" y="526" width="1" height="1" fill="#b4bcb8"/><rect x="320" y="563" width="1" height="1" fill="#b4bcb8"/><rect x="312" y="535" width="1" height="1" fill="#b4bcb8"/><rect x="303" y="555" width="1" height="1" fill="#b4bcb8"/><rect x="308" y="517" width="1" height="1" fill="#b4bcb8"/><rect x="310" y="536" width="1" height="1" fill="#b4bcb8"/><rect x="321" y="536" width="1" height="1" fill="#b4bcb8"/><rect x="305" y="518" width="1" height="1" fill="#b4bcb8"/><rect x="320" y="480" width="1" height="1" fill="#b4bcb8"/><rect x="312" y="523" width="1" height="1" fill="#b4bcb8"/><rect x="305" y="481" width="1" height="1" fill="#b4bcb8"/><rect x="321" y="479" width="1" height="1" fill="#b4bcb8"/><rect x="309" y="483" width="1" height="1" fill="#b4bcb8"/><rect x="315" y="523" width="1" height="1" fill="#b4bcb8"/><rect x="316" y="500" width="1" height="1" fill="#b4bcb8"/><rect x="323" y="539" width="1" height="1" fill="#b4bcb8"/><rect x="309" y="487" width="1" height="1" fill="#b4bcb8"/><rect x="309" y="488" width="1" height="1" fill="#b4bcb8"/><rect x="303" y="499" width="1" height="1" fill="#b4bcb8"/><rect x="308" y="555" width="1" height="1" fill="#b4bcb8"/><rect x="320" y="549" width="1" height="1" fill="#b4bcb8"/><rect x="303" y="554" width="1" height="1" fill="#b4bcb8"/><rect x="320" y="534" width="1" height="1" fill="#b4bcb8"/><rect x="315" y="539" width="1" height="1" fill="#b4bcb8"/><rect x="320" y="519" width="1" height="1" fill="#b4bcb8"/><rect x="310" y="529" width="1" height="1" fill="#b4bcb8"/><rect x="312" y="526" width="1" height="1" fill="#b4bcb8"/><rect x="317" y="496" width="1" height="1" fill="#b4bcb8"/><rect x="316" y="558" width="1" height="1" fill="#b4bcb8"/><rect x="311" y="479" width="1" height="1" fill="#b4bcb8"/><rect x="305" y="551" width="1" height="1" fill="#b4bcb8"/><rect x="317" y="527" width="1" height="1" fill="#b4bcb8"/><rect x="309" y="529" width="1" height="1" fill="#b4bcb8"/><rect x="317" y="480" width="1" height="1" fill="#b4bcb8"/><rect x="315" y="494" width="1" height="1" fill="#b4bcb8"/><rect x="318" y="528" width="1" height="1" fill="#b4bcb8"/><rect x="323" y="489" width="1" height="1" fill="#b4bcb8"/><rect x="321" y="550" width="1" height="1" fill="#b4bcb8"/><rect x="318" y="496" width="1" height="1" fill="#b4bcb8"/><rect x="317" y="514" width="1" height="1" fill="#b4bcb8"/><rect x="311" y="545" width="1" height="1" fill="#b4bcb8"/><rect x="312" y="569" width="1" height="1" fill="#b4bcb8"/></g>
<path d="M301.70 477.26 L300.80 473.14 L299.76 469.05 L298.58 464.99 L297.26 460.98 L295.79 457.01 L294.18 453.09 L292.44 449.22 L290.56 445.42 L288.55 441.68 L286.41 438.00 L284.13 434.41 L281.73 430.89 L279.21 427.45 L276.57 424.10 L273.80 420.84 L270.93 417.68 L267.94 414.61 L264.84 411.65 L261.64 408.80 L258.34 406.06 L254.94 403.43 L251.45 400.92 L247.87 398.53 L244.21 396.27 L240.46 394.13 L236.64 392.13 L232.75 390.26 L228.79 388.52 L224.77 386.92 L220.69 385.46 L216.56 384.14 L212.39 382.97 L208.17 381.94 L203.91 381.06 L199.62 380.33 L195.31 379.75 L190.97 379.31 L186.62 379.03 L182.25 378.91 L177.88 378.93 L173.51 379.11 L169.15 379.44 L164.79 379.92 L160.45 380.55 L156.13 381.34 L151.84 382.28 L147.58 383.37 L143.35 384.60 L139.17 385.99 L135.04 387.52 L130.95 389.20 L126.93 391.02 L122.97 392.98 L119.07 395.08 L115.25 397.32 L111.50 399.69 L107.84 402.19 L104.26 404.83 L100.78 407.58 L97.38 410.46 L94.09 413.46 L90.91 416.58 L87.83 419.81 L84.86 423.14 L82.01 426.58 L79.28 430.13 L76.67 433.76 L74.18 437.49 L71.83 441.31 L69.61 445.21 L67.53 449.19 L65.58 453.25 L63.78 457.37 L62.12 461.56 L60.60 465.80 L59.23 470.10 L58.02 474.45 L56.95 478.84 L56.04 483.28 L55.28 487.74 L54.68 492.23 L54.24 496.75 L53.95 501.28 L53.82 505.82 L53.85 510.37 L54.04 514.91 L54.39 519.46 L54.89 523.99 L55.56 528.50 L56.38 532.99 L57.36 537.46 L58.50 541.89 L59.79 546.28 L61.24 550.63 L62.83 554.93 L64.58 559.18 L66.48 563.36 L68.53 567.48 L70.71 571.53 L73.05 575.51 L75.52 579.40 L78.12 583.21 L80.86 586.92 L83.73 590.55 L86.73 594.07 L89.86 597.49 L93.10 600.80 L96.46 604.00 L99.93 607.08 L103.51 610.04 L107.19 612.88 L110.98 615.59 L114.86 618.16 L118.83 620.61 L122.89 622.91 L127.03 625.07 L131.24 627.09 L135.53 628.96 L139.88 630.69 L144.30 632.26 L148.77 633.67 L153.29 634.93 L157.86 636.04 L162.46 636.98 L167.10 637.76 L171.77 638.38 L176.46 638.84 L181.17 639.13 L185.89 639.26 L190.61 639.23 L195.34 639.03 L200.06 638.66 L204.76 638.13 L209.45 637.44 L214.12 636.58 L218.76 635.55 L223.36 634.37 L227.92 633.02 L232.44 631.52 L236.90 629.85 L241.31 628.03 L245.66 626.06 L249.93 623.93 L254.14 621.65 L258.26 619.23 L262.30 616.66 L266.25 613.95 L270.11 611.10 L273.87 608.11 L277.53 605.00 L281.07 601.75 L284.51 598.38 L287.82 594.89 L291.02 591.28 L294.09 587.56 L297.03 583.74 L299.84 579.81 L302.51 575.77 L305.05 571.65 L307.43 567.44 L309.67 563.14 L311.77 558.76 L313.70 554.31 L315.49 549.79 L317.11 545.21 L318.58 540.56 L319.88 535.87 L321.02 531.13 L322.00 526.35 L322.81 521.54 L323.45 516.69 L323.92 511.82 L324.22 506.94" fill="none" stroke="#000" stroke-width="0.9" stroke-dasharray="10 2 2 2"/>
<path d="M307.00 475.50 L325.50 475.50 L325.50 506.00" fill="none" stroke="#000" stroke-width="1.2" stroke-dasharray="14 2"/>
<path d="M303.00 477.00 Q306.00 480.00 308.00 475.50" fill="none" stroke="#000" stroke-width="1.2"/>
<path d="M289.50 60.50 H339.50" stroke="#000" stroke-width="1.2"/>
<path d="M294.00 271.00 H336.00" stroke="#000" stroke-width="1.3" stroke-dasharray="5 3 2 3"/>
<path d="M295.6 278 V284" stroke="#000" stroke-width="1.2"/>
<path d="M296.20000000000005 314 V320" stroke="#000" stroke-width="1.2"/>
<path d="M297.20000000000005 352 V358" stroke="#000" stroke-width="1.2"/>
<path d="M334.4 294 V300" stroke="#000" stroke-width="1.2"/>
<path d="M333.6 336 V342" stroke="#000" stroke-width="1.2"/>
<circle cx="183.5" cy="504.5" r="114" fill="#a3a3a3" stroke="#000" stroke-width="1.7"/>
<circle cx="183.5" cy="504.5" r="111.4" fill="none" stroke="#222" stroke-width="0.9" stroke-dasharray="8 2"/>
<path d="M138.68 525.13 L135.24 522.06 L132.32 519.65 L129.60 517.29 L127.03 514.88 L124.59 512.39 L122.27 509.81 L120.08 507.13 L118.00 504.35 L116.05 501.46 L114.22 498.47 L112.52 495.39 L110.94 492.21 L109.51 488.95 L108.20 485.59 L107.04 482.16 L106.02 478.65 L105.14 475.07 L104.41 471.43 L103.82 467.72 L103.39 463.97 L103.12 460.16 L102.99 456.31 L103.03 452.43 L103.22 448.51 L103.57 444.58 L104.08 440.62 L104.76 436.65 L105.59 432.67 L106.58 428.70 L107.74 424.73 L109.06 420.77" fill="none" stroke="#8a8a8a" stroke-width="0.9"/>
<path d="M140.06 527.86 L136.43 525.00 L133.37 522.78 L130.51 520.59 L127.80 518.34 L125.21 516.00 L122.74 513.57 L120.39 511.03 L118.15 508.37 L116.02 505.61 L114.01 502.74 L112.12 499.77 L110.36 496.70 L108.73 493.52 L107.22 490.26 L105.85 486.90 L104.61 483.46 L103.52 479.94 L102.57 476.35 L101.76 472.69 L101.10 468.96 L100.59 465.18 L100.23 461.35 L100.03 457.47 L99.98 453.55 L100.09 449.60 L100.36 445.61 L100.79 441.61 L101.38 437.59 L102.13 433.56 L103.04 429.53 L104.12 425.50" fill="none" stroke="#9a9a9a" stroke-width="0.8"/>
<path d="M149.90 467.43 L151.76 463.20 L153.14 459.69 L154.55 456.37 L156.05 453.18 L157.66 450.09 L159.40 447.09 L161.27 444.17 L163.28 441.34 L165.42 438.59 L167.69 435.93 L170.10 433.35 L172.63 430.88 L175.30 428.50 L178.08 426.22 L180.99 424.06 L184.01 422.00 L187.14 420.06 L190.38 418.24 L193.72 416.54 L197.16 414.97 L200.70 413.53 L204.32 412.22 L208.03 411.05 L211.81 410.03 L215.66 409.14 L219.58 408.41 L223.57 407.82 L227.61 407.38 L231.69 407.10 L235.83 406.98 L240.00 407.01" fill="none" stroke="#8a8a8a" stroke-width="0.9"/>
<path d="M147.73 469.58 L149.33 465.25 L150.49 461.65 L151.70 458.26 L153.00 454.98 L154.42 451.80 L155.97 448.70 L157.66 445.67 L159.49 442.72 L161.46 439.84 L163.57 437.05 L165.81 434.34 L168.19 431.71 L170.70 429.17 L173.35 426.73 L176.11 424.39 L179.00 422.15 L182.01 420.02 L185.13 418.01 L188.37 416.11 L191.71 414.33 L195.14 412.68 L198.68 411.15 L202.31 409.76 L206.02 408.51 L209.81 407.39 L213.68 406.41 L217.62 405.58 L221.63 404.90 L225.69 404.37 L229.81 403.99 L233.97 403.77" fill="none" stroke="#9a9a9a" stroke-width="0.8"/>
<path d="M208.24 460.27 L212.84 460.73 L216.61 460.96 L220.20 461.27 L223.69 461.71 L227.13 462.29 L230.52 463.02 L233.88 463.90 L237.19 464.93 L240.47 466.11 L243.70 467.45 L246.89 468.95 L250.03 470.59 L253.12 472.39 L256.14 474.34 L259.10 476.43 L261.99 478.67 L264.80 481.05 L267.54 483.57 L270.19 486.22 L272.74 489.01 L275.20 491.92 L277.56 494.97 L279.82 498.13 L281.97 501.41 L284.00 504.80 L285.91 508.30 L287.70 511.91 L289.36 515.62 L290.89 519.42 L292.29 523.31 L293.55 527.29" fill="none" stroke="#8a8a8a" stroke-width="0.9"/>
<path d="M205.53 458.87 L210.14 459.05 L213.92 459.05 L217.52 459.14 L221.04 459.37 L224.50 459.73 L227.93 460.25 L231.33 460.93 L234.71 461.75 L238.05 462.74 L241.36 463.88 L244.63 465.17 L247.87 466.63 L251.06 468.23 L254.19 469.99 L257.28 471.90 L260.30 473.95 L263.25 476.16 L266.13 478.51 L268.94 480.99 L271.66 483.62 L274.30 486.38 L276.84 489.27 L279.28 492.29 L281.62 495.43 L283.86 498.69 L285.98 502.07 L287.99 505.56 L289.87 509.16 L291.64 512.86 L293.27 516.66 L294.77 520.55" fill="none" stroke="#9a9a9a" stroke-width="0.8"/>
<path d="M233.08 513.54 L234.06 518.05 L235.01 521.71 L235.82 525.22 L236.49 528.68 L237.00 532.13 L237.35 535.58 L237.55 539.04 L237.60 542.51 L237.48 546.00 L237.21 549.49 L236.77 552.98 L236.18 556.48 L235.42 559.96 L234.50 563.44 L233.43 566.90 L232.19 570.34 L230.80 573.76 L229.25 577.13 L227.54 580.47 L225.68 583.77 L223.67 587.01 L221.51 590.19 L219.19 593.32 L216.74 596.37 L214.14 599.35 L211.40 602.25 L208.52 605.07 L205.51 607.79 L202.37 610.43 L199.10 612.96 L195.71 615.39" fill="none" stroke="#8a8a8a" stroke-width="0.9"/>
<path d="M233.57 510.53 L234.83 514.97 L236.00 518.57 L237.02 522.02 L237.89 525.43 L238.62 528.84 L239.18 532.27 L239.59 535.71 L239.85 539.17 L239.95 542.65 L239.88 546.15 L239.66 549.67 L239.28 553.19 L238.74 556.72 L238.04 560.25 L237.17 563.77 L236.15 567.28 L234.97 570.77 L233.63 574.24 L232.13 577.67 L230.47 581.07 L228.66 584.43 L226.70 587.74 L224.58 591.00 L222.32 594.20 L219.90 597.33 L217.35 600.40 L214.65 603.38 L211.81 606.29 L208.83 609.11 L205.72 611.83 L202.49 614.46" fill="none" stroke="#9a9a9a" stroke-width="0.8"/>
<path d="M190.09 553.63 L186.11 555.96 L182.92 557.99 L179.83 559.84 L176.74 561.54 L173.62 563.10 L170.45 564.50 L167.22 565.76 L163.93 566.88 L160.59 567.84 L157.18 568.66 L153.72 569.32 L150.22 569.84 L146.66 570.20 L143.07 570.40 L139.45 570.45 L135.79 570.33 L132.12 570.06 L128.43 569.63 L124.72 569.04 L121.02 568.29 L117.31 567.38 L113.62 566.31 L109.93 565.07 L106.27 563.68 L102.63 562.13 L99.02 560.42 L95.46 558.55 L91.93 556.53 L88.46 554.36 L85.04 552.03 L81.68 549.55" fill="none" stroke="#8a8a8a" stroke-width="0.9"/>
<path d="M193.11 553.16 L189.27 555.73 L186.22 557.95 L183.25 559.99 L180.27 561.88 L177.25 563.62 L174.17 565.22 L171.02 566.67 L167.81 567.98 L164.53 569.15 L161.18 570.18 L157.77 571.05 L154.30 571.78 L150.77 572.35 L147.20 572.77 L143.59 573.04 L139.93 573.15 L136.25 573.11 L132.54 572.90 L128.81 572.54 L125.06 572.02 L121.31 571.33 L117.55 570.49 L113.80 569.48 L110.06 568.31 L106.33 566.99 L102.63 565.50 L98.95 563.86 L95.31 562.05 L91.71 560.10 L88.16 557.98 L84.65 555.72" fill="none" stroke="#9a9a9a" stroke-width="0.8"/>
<circle cx="184" cy="504" r="100" fill="none" stroke="#a8a8a8" stroke-width="1"/>
<circle cx="184" cy="504" r="88" fill="none" stroke="#a0a0a0" stroke-width="1"/>
<circle cx="184" cy="504" r="70" fill="none" stroke="#a6a6a6" stroke-width="1"/>
<circle cx="184" cy="504" r="53" fill="none" stroke="#b4b4b4" stroke-width="1"/>
<circle cx="184" cy="504" r="48.5" fill="none" stroke="#111" stroke-width="1"/>
<circle cx="184" cy="504" r="38.5" fill="#a8a8aa" stroke="#000" stroke-width="2"/>
<circle cx="184" cy="504" r="34" fill="none" stroke="#8a8a8a" stroke-width="0.8"/>
<circle cx="184" cy="504" r="29" fill="none" stroke="#222" stroke-width="1.1" stroke-dasharray="12 1.5"/>
<path d="M212.56 498.96 L193.52 486.41" stroke="#b4b4b8" stroke-width="2.5"/>
<path d="M197.87 478.53 L176.19 485.59" stroke="#b4b4b8" stroke-width="2.5"/>
<path d="M172.74 477.28 L164.73 498.63" stroke="#b4b4b8" stroke-width="2.5"/>
<path d="M156.08 496.15 L167.79 515.71" stroke="#b4b4b8" stroke-width="2.5"/>
<path d="M160.45 520.93 L183.05 523.98" stroke="#b4b4b8" stroke-width="2.5"/>
<path d="M182.55 532.96 L199.03 517.20" stroke="#b4b4b8" stroke-width="2.5"/>
<path d="M205.74 523.19 L203.69 500.48" stroke="#b4b4b8" stroke-width="2.5"/>
<circle cx="184" cy="504" r="20" fill="#b6bac6" stroke="#888" stroke-width="0.8"/>
<circle cx="184" cy="504" r="15" fill="#b8bcc8" stroke="#555" stroke-width="0.8"/>
<path d="M290 60 V24" stroke="#333" stroke-width="1.8"/>
<path d="M289.3 15 H290.7 L291 21 L292.6 25 L291.6 29 H288.4 L287.4 25 L289 21 Z" fill="#333"/>
<path d="M303.5 60 V24" stroke="#333" stroke-width="1.8"/>
<path d="M302.8 17 H304.2 L304.5 23 L306.1 27 L305.1 31 H301.9 L300.9 27 L302.5 23 Z" fill="#333"/>
<path d="M310.5 60 V24" stroke="#333" stroke-width="1.8"/>
<path d="M309.8 17 H311.2 L311.5 23 L313.1 27 L312.1 31 H308.9 L307.9 27 L309.5 23 Z" fill="#333"/>
<path d="M332 60 V24" stroke="#333" stroke-width="1.8"/>
<path d="M331.3 15 H332.7 L333 21 L334.6 25 L333.6 29 H330.4 L329.4 25 L331 21 Z" fill="#333"/>
<path d="M336.5 60 V24" stroke="#333" stroke-width="1.8"/>
<path d="M335.8 17 H337.2 L337.5 23 L339.1 27 L338.1 31 H334.9 L333.9 27 L335.5 23 Z" fill="#333"/>
</svg>
<svg class="a" style="left:620px;top:225px" width="160" height="75" viewBox="620 225 160 75"><path d="M761.3 236.7 L648.1 275.9 L648.3 268.9 L631.2 285.1 L656.2 287.7 L651.4 283.1 Z" fill="none" stroke="#e8202a" stroke-width="2.4" stroke-linejoin="round"/></svg>
</body></html>
